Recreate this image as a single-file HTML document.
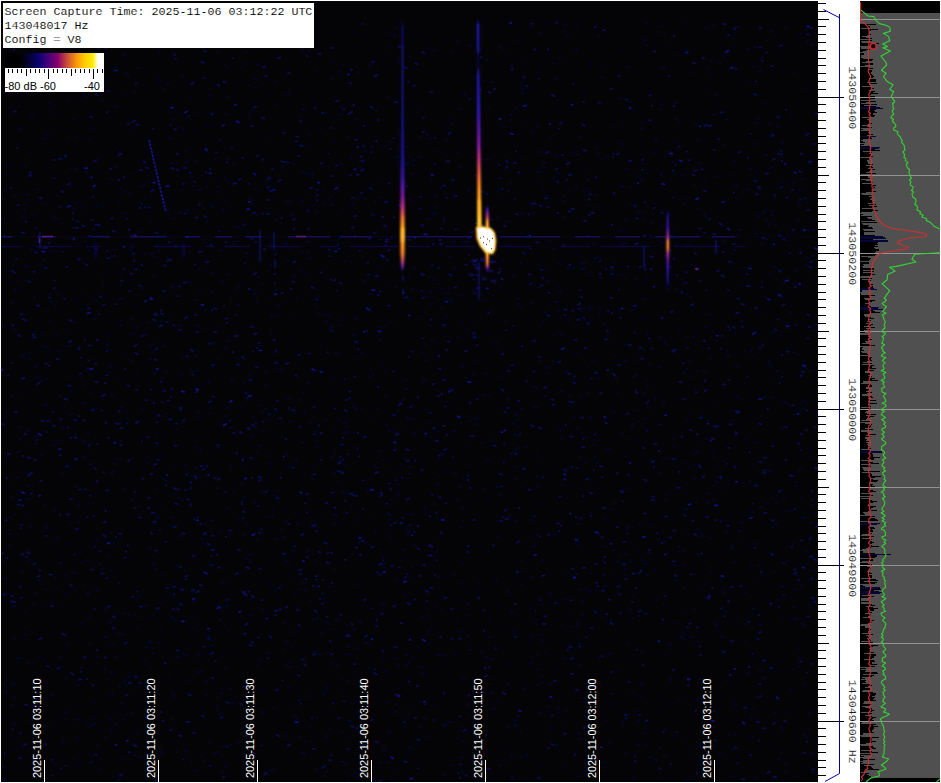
<!DOCTYPE html><html><head><meta charset="utf-8"><title>Spectrum capture</title>
<style>html,body{margin:0;padding:0;background:#fff;overflow:hidden}svg{display:block}.m{font-family:"Liberation Mono","DejaVu Sans Mono",monospace}.s{font-family:"Liberation Sans","DejaVu Sans",sans-serif}</style></head><body>
<svg width="941" height="783" viewBox="0 0 941 783">
<defs>
<linearGradient id="cb" x1="0" x2="1" y1="0" y2="0"><stop offset="0" stop-color="#000"/><stop offset=".17" stop-color="#010005"/><stop offset=".26" stop-color="#050040"/><stop offset=".34" stop-color="#0a0070"/><stop offset=".44" stop-color="#480078"/><stop offset=".53" stop-color="#85006e"/><stop offset=".61" stop-color="#c04040"/><stop offset=".72" stop-color="#fa960a"/><stop offset=".80" stop-color="#ffc800"/><stop offset=".885" stop-color="#ffeb00"/><stop offset=".94" stop-color="#fff"/><stop offset="1" stop-color="#fff"/></linearGradient>
<filter id="b05" x="-50%" y="-5%" width="200%" height="110%"><feGaussianBlur stdDeviation="1"/></filter>
<filter id="b1" x="-100%" y="-10%" width="300%" height="120%"><feGaussianBlur stdDeviation="1.1"/></filter>
<filter id="b2" x="-50%" y="-50%" width="200%" height="200%"><feGaussianBlur stdDeviation="1.8"/></filter>
<filter id="nb" x="0" y="0" width="100%" height="100%"><feGaussianBlur stdDeviation="1"/></filter>
<clipPath id="sp"><rect x="1" y="1" width="817" height="781"/></clipPath>
<clipPath id="rp"><rect x="860" y="1" width="80" height="781"/></clipPath>
</defs>
<rect width="941" height="783" fill="#fff"/>
<rect x="1" y="1" width="817" height="781" fill="#040406"/>
<g clip-path="url(#sp)">
<path d="M265.2 136.5l0.4 -0.2M438.3 299.6l0.4 -0.1M197.4 440.2l0.4 -0.2M462.4 741.1l2.4 0.0M471.9 323.1l0.8 0.0M442.2 455.3l2.4 -1.4M557.5 100.2l0.8 0.0M80.5 562.5l2.4 0.0M506.1 398.8l2.4 0.7M635.2 375.4l1.8 0.0M245.6 624.9l0.8 0.0M469.7 420.6l1.2 0.7M367.2 484.2l0.4 0.0M762.5 342.1l0.4 -0.2M456.4 620.9l1.2 0.7M286.7 399.0l1.8 0.0M686.4 739.0l0.4 0.0M597.6 257.0l2.4 1.4M671.7 238.0l1.8 1.1M284.2 736.0l2.4 0.0M403.9 187.6l1.2 0.0M603.5 324.0l1.8 0.0M136.8 326.8l1.2 0.0M669.5 677.8l1.8 0.0M558.1 310.8l0.8 0.0M68.7 136.8l0.4 0.1M679.2 160.4l1.2 0.0M119.9 427.8l2.4 -0.7M261.0 117.2l2.4 1.4M552.8 63.0l2.4 0.7M325.8 321.1l1.8 1.1M327.8 166.7l0.8 0.2M133.4 280.1l0.4 0.0M297.7 41.4l2.4 0.7M122.2 213.5l1.2 -0.4M298.2 115.2l1.8 0.5M280.6 223.0l0.8 -0.2M19.8 743.8l0.8 0.5M444.2 42.5l0.4 0.2M690.9 415.5l0.8 0.0M630.9 426.2l2.4 0.0M520.3 487.4l0.8 -0.5M196.3 326.1l0.8 0.0M423.4 291.9l0.4 0.0M645.7 380.4l0.8 0.5M494.8 283.3l1.2 0.0M66.7 99.5l1.2 0.0M394.8 769.8l0.4 0.1M742.9 283.1l0.4 -0.2M540.0 712.5l0.8 0.2M726.4 351.3l1.2 0.0M654.5 759.5l1.8 1.1M773.6 572.1l0.8 0.0M23.5 470.4l1.8 -1.1M536.2 486.2l2.4 0.7M537.3 288.0l2.4 -0.7M107.9 32.8l0.4 -0.1M612.6 127.7l0.8 -0.5M409.9 601.6l1.2 0.0M445.2 655.2l1.2 0.4M541.6 640.6l2.4 0.0M435.0 419.3l0.4 -0.2M360.1 161.0l0.4 -0.2M653.1 152.8l1.8 -0.5M592.8 444.4l1.2 0.7M424.0 443.6l0.4 -0.1M47.4 167.2l0.4 -0.2M80.8 365.2l0.4 -0.2M795.3 482.1l0.8 0.5M227.2 407.7l1.8 -0.5M769.3 552.7l1.2 -0.4M729.5 175.8l1.8 0.0M341.0 319.8l1.2 0.0M548.7 347.1l0.8 0.5M248.1 114.9l1.2 0.0M207.5 126.2l0.4 0.1M723.1 145.6l0.8 0.0M577.4 776.5l1.8 0.0M276.8 370.1l0.4 0.1M271.5 495.6l2.4 0.0M93.1 719.2l0.4 0.0M217.7 52.0l1.2 -0.7M106.7 342.5l1.2 0.4M122.9 719.7l1.2 0.0M228.7 628.9l0.4 0.0M766.7 503.5l1.2 0.0M497.3 190.8l1.2 -0.7M100.3 30.8l1.8 0.0M508.3 54.8l0.4 0.0M214.7 159.5l1.2 0.7M249.9 598.5l1.2 0.4M409.1 157.0l1.2 -0.7M15.8 212.1l0.4 0.0M599.2 440.2l0.8 -0.2M388.4 731.4l1.8 1.1M404.9 655.5l2.4 0.0M562.2 767.7l0.8 0.2M808.4 767.2l0.4 0.0M511.4 689.8l0.4 0.0M543.8 311.1l2.4 1.4M793.3 476.5l1.2 0.0M215.8 752.0l2.4 0.0M200.5 754.9l1.2 0.0M1.9 311.7l1.8 0.0M411.3 174.5l2.4 -1.4M5.0 222.5l0.4 0.0M249.3 198.7l2.4 -0.7M697.2 139.8l2.4 0.7M624.7 569.0l1.8 0.0M232.9 491.6l0.8 0.0M674.1 564.7l2.4 1.4M351.3 554.1l2.4 0.0M743.5 593.4l2.4 -1.4M664.3 34.2l0.8 0.0M86.6 656.4l0.4 0.2M434.7 207.6l1.2 0.0M373.9 75.2l2.4 0.0M539.0 72.1l1.2 -0.7M61.8 223.6l0.8 0.0M604.7 762.6l1.8 0.0M391.9 540.9l0.4 -0.1M517.4 172.5l2.4 0.0M271.7 516.5l1.2 -0.4M220.3 532.0l0.8 0.5M400.5 560.0l1.2 0.4M381.2 604.3l2.4 0.0M255.3 87.2l1.2 0.4M63.4 406.5l1.8 0.0M316.7 717.7l0.4 -0.1M74.7 589.3l1.2 0.0M109.2 644.5l0.4 0.2M299.0 399.9l1.8 0.5M21.3 24.7l1.8 0.5M258.9 659.7l1.2 -0.7M326.0 735.4l0.4 0.2M237.5 304.5l1.8 0.5M816.0 469.2l1.2 0.4M617.6 670.4l0.4 -0.2M541.2 503.9l0.8 0.0M793.4 353.1l1.2 0.0M631.9 617.9l1.8 0.0M663.6 500.8l2.4 -0.7M167.0 83.2l1.8 0.5M502.8 127.2l1.8 0.0M745.1 439.5l0.8 0.2M339.5 235.8l1.2 0.7M603.8 517.5l1.8 1.1M195.8 388.7l1.8 0.0M740.3 399.3l0.8 0.2M740.5 778.3l0.8 -0.2M75.3 203.5l1.2 -0.7M465.8 695.4l1.8 0.5M338.7 419.8l1.8 0.0M790.6 117.5l0.8 0.0M222.2 210.6l1.8 1.1M364.8 746.0l0.4 0.0M27.3 560.5l1.8 -0.5M400.7 77.5l2.4 -1.4M383.0 362.8l0.4 0.0M127.0 418.5l0.4 -0.2M589.9 513.3l1.8 0.0M451.0 52.0l0.8 -0.2M751.7 511.9l1.2 0.0M512.2 422.9l1.8 1.1M770.9 167.5l1.2 0.0M646.0 22.9l1.8 0.0M783.5 511.2l0.8 0.2M430.4 437.2l0.4 0.1M576.0 255.3l0.4 0.0M407.6 533.9l1.8 0.0M210.9 528.5l1.2 0.0M403.2 550.1l1.8 0.0M558.0 172.3l1.2 0.7M690.6 73.2l0.8 0.0M625.9 169.2l1.8 0.0M217.3 697.0l2.4 0.7M498.8 702.4l0.4 -0.1M120.4 320.6l0.8 0.0M50.1 320.5l1.2 0.7M156.6 517.2l2.4 1.4M382.6 258.7l1.8 -1.1M306.1 273.8l0.8 0.0M3.3 234.4l1.2 0.4M780.7 115.9l0.8 0.2M292.0 645.6l1.8 0.0M41.2 381.4l1.2 -0.4M751.3 168.5l1.2 0.7M663.4 603.9l0.4 0.1M29.4 69.5l1.2 0.0M610.8 704.0l1.2 0.0M782.5 490.3l1.2 0.7M585.8 262.2l1.2 0.0M4.1 595.5l0.4 0.0M675.0 103.4l1.8 -1.1M316.4 212.5l1.8 -1.1M403.7 726.4l1.2 -0.7M703.8 371.7l2.4 0.0M418.7 319.3l0.8 0.0M333.7 515.0l1.8 -0.5M86.9 76.8l0.8 0.0M344.6 772.2l0.8 0.0M109.5 371.8l0.8 0.5M440.5 609.4l0.4 -0.2M687.2 245.0l2.4 0.0M305.3 582.2l0.8 0.2M202.9 208.2l0.8 0.0M722.5 460.9l1.2 0.0M324.2 775.3l0.8 0.5M660.7 517.9l0.4 0.0M4.7 692.1l1.8 0.0M33.9 244.9l0.4 0.0M155.7 760.5l0.4 0.0M419.3 156.9l2.4 0.0M633.4 526.5l0.4 0.0M521.2 560.7l1.2 0.0M31.6 280.1l0.4 0.0M816.9 51.0l0.8 -0.5M10.3 270.4l1.2 0.0M405.4 389.0l1.8 0.0M650.4 526.0l0.8 0.5M436.7 517.7l1.8 1.1M222.3 772.1l1.8 0.0M255.9 452.0l1.2 0.4M340.8 678.0l1.2 0.7M161.9 574.6l0.8 0.0M74.8 460.5l1.2 0.4M117.3 634.1l2.4 -0.7M757.6 581.6l0.8 0.0M55.8 313.3l0.8 0.0M104.3 737.8l1.8 0.0M44.6 725.0l2.4 1.4M673.8 143.6l0.8 -0.2M331.1 664.4l0.8 -0.2M179.0 325.4l2.4 0.0M592.5 703.0l2.4 -1.4M619.1 50.9l0.4 0.1M490.2 439.5l1.2 0.7M343.8 464.2l1.8 0.5M538.6 361.1l1.8 0.0M20.1 491.7l1.8 0.5M193.0 601.5l1.8 -1.1M147.5 381.2l0.4 0.0M105.8 348.8l0.4 -0.2M361.6 409.2l0.4 0.0M520.3 84.4l2.4 0.0M45.3 404.5l1.8 1.1M776.9 125.4l2.4 1.4M723.7 240.5l0.8 0.5M644.3 728.3l1.2 -0.4M618.0 142.5l1.2 -0.7M373.4 214.9l1.8 0.0M484.0 489.4l0.8 0.0M304.8 173.0l1.8 0.0M520.4 233.2l1.2 0.4M138.7 617.7l0.4 -0.2M434.1 505.0l1.2 -0.7M370.7 417.8l0.4 0.0M811.3 500.0l1.8 1.1M651.9 222.9l1.2 -0.4M120.3 273.1l0.4 0.1M188.7 489.1l0.4 0.0M670.0 214.5l2.4 1.4M731.9 578.4l0.4 0.0M122.9 489.6l1.8 0.5M419.3 701.7l0.8 -0.2M184.0 464.9l2.4 0.0M167.6 495.6l1.8 0.0M111.0 732.9l0.8 0.2M79.2 506.4l1.2 0.4M663.2 756.1l2.4 0.0M486.3 461.1l2.4 -0.7M599.6 210.6l0.4 0.0M130.9 714.0l2.4 -0.7M536.9 171.7l1.8 0.0M423.9 509.8l1.8 -1.1M501.4 408.0l0.4 0.0M511.8 776.5l1.8 1.1M440.3 306.7l1.8 1.1M745.4 83.1l0.8 0.0M814.2 220.4l0.4 0.0M274.8 591.0l1.2 0.7M43.9 504.6l1.8 1.1M644.4 419.1l1.2 0.0M524.9 754.5l2.4 0.0M139.5 708.7l0.8 0.0M609.9 270.1l1.8 0.0M491.6 310.0l2.4 0.7M386.3 424.7l0.4 -0.2M22.6 747.4l1.2 -0.7M174.0 494.6l0.4 -0.1M88.0 727.1l0.8 0.5M24.4 53.6l0.4 0.2M56.3 57.4l1.2 0.0M668.1 644.0l0.4 -0.2M617.7 561.8l1.8 0.0M202.2 176.2l0.4 0.0M775.6 713.5l0.4 -0.2M614.2 501.9l1.8 0.0M109.2 623.1l1.2 0.0M275.6 220.2l1.2 0.0M760.0 58.7l1.2 -0.7M787.6 404.3l1.2 -0.4M609.5 620.9l2.4 -1.4M81.2 377.9l0.4 -0.1M462.9 564.2l0.4 -0.1M670.0 151.3l0.4 -0.1M165.9 600.5l0.4 0.0M284.8 94.6l0.8 0.2M484.5 748.5l2.4 0.0M232.5 185.0l0.8 0.2M136.3 734.5l1.8 -1.1M809.8 448.0l0.4 0.2M267.5 94.2l0.4 0.1M215.8 706.0l1.8 1.1M191.6 371.8l2.4 -0.7M616.7 593.5l0.4 0.0M475.6 418.0l1.8 1.1M452.8 267.4l1.8 0.5M563.3 217.2l0.8 0.0M273.6 509.8l0.8 -0.2M157.3 250.8l2.4 0.0M591.2 761.8l2.4 -0.7M285.5 201.3l0.8 0.0M796.7 575.1l0.4 0.0M803.8 625.3l1.8 0.0M161.1 506.2l0.4 0.0M169.5 316.8l0.4 0.0M326.6 622.4l2.4 1.4M697.0 554.2l2.4 1.4M529.1 664.1l2.4 -1.4M187.5 159.8l0.4 0.1M353.9 219.2l0.4 0.1M198.8 325.7l0.8 0.0M694.1 388.4l0.4 -0.1M701.6 415.4l0.8 0.5M268.7 30.1l0.4 0.0M206.0 187.4l0.8 -0.2M285.1 665.0l0.8 0.5M389.2 34.2l1.2 -0.4M280.8 585.3l1.8 0.0M809.1 161.5l2.4 -1.4M762.1 575.4l2.4 0.0M521.3 213.6l1.8 0.5M51.2 79.1l1.2 -0.4M217.4 192.3l1.8 -0.5M793.7 776.6l1.8 0.0M135.3 727.4l0.8 0.2M525.0 569.0l0.8 0.0M544.5 652.5l1.8 0.5M813.8 598.8l0.8 -0.5M681.3 291.3l0.8 0.0M575.6 543.8l1.8 1.1M152.7 24.0l1.2 0.0M200.9 251.1l1.8 0.5M350.7 505.7l1.2 0.0M758.8 670.5l2.4 0.0M640.8 128.6l2.4 0.0M537.4 181.2l0.4 0.2M240.1 483.6l2.4 0.0M698.0 162.9l1.8 0.0M641.5 180.3l1.8 -1.1M437.2 484.6l2.4 -1.4M74.8 706.3l1.2 0.0M404.5 183.7l0.4 0.2M685.9 531.5l0.4 -0.1M97.6 340.0l0.8 0.2M403.4 66.4l0.8 0.5M402.0 400.1l2.4 -0.7M705.1 27.0l1.8 1.1M460.1 527.0l1.8 0.0M348.5 781.0l0.8 0.5M295.1 512.7l0.4 -0.1M38.4 581.0l1.2 -0.7M802.1 409.6l1.8 -1.1M733.4 47.7l0.8 0.0M78.1 522.2l1.2 0.4M636.3 442.6l0.8 0.0M356.1 342.6l2.4 0.0M675.6 244.3l1.8 0.5M273.3 769.1l1.2 0.0M535.1 623.1l1.2 0.7M245.2 467.1l0.4 -0.2M814.1 324.7l2.4 0.7M6.1 166.2l1.8 -0.5M626.0 67.7l2.4 -0.7M307.9 133.6l2.4 1.4M68.7 52.0l0.8 0.0M542.5 681.7l0.4 0.2M12.0 683.8l1.2 -0.4M580.5 676.6l0.4 0.0M17.6 451.8l2.4 0.0M407.2 418.3l0.4 -0.2M662.2 458.7l1.8 0.5M55.9 538.1l2.4 -0.7M811.4 522.5l0.8 0.2M629.2 438.5l0.4 0.2M386.3 701.9l1.8 0.0M8.6 530.0l0.4 0.0M588.0 205.9l0.8 0.0M299.6 589.2l0.8 0.5M620.6 244.5l2.4 1.4M407.4 530.2l1.2 0.0M532.0 642.4l1.2 0.0M596.2 148.0l1.8 -0.5M49.8 301.0l2.4 1.4M359.0 535.8l0.8 -0.5M96.2 746.0l1.8 0.5M315.8 618.8l1.2 -0.7M616.9 275.4l1.2 0.0M508.4 516.1l2.4 0.0M710.6 572.8l0.4 -0.2M124.3 654.0l0.8 0.2M317.1 307.5l0.8 -0.5M369.2 544.6l1.2 0.0M219.7 141.4l0.4 0.0M680.9 638.1l2.4 0.0M224.5 668.0l1.8 0.0M437.2 431.8l1.8 -1.1M312.5 619.9l0.8 0.0M496.2 536.3l1.8 1.1M169.6 215.3l0.4 -0.2M315.1 432.3l2.4 -1.4M426.2 219.0l2.4 0.0M389.9 469.3l0.8 0.0M157.9 159.1l1.2 0.0M472.5 294.4l2.4 -1.4M122.6 55.8l1.2 -0.7M87.6 502.3l0.4 0.0M711.5 451.2l2.4 -0.7M175.3 724.5l0.4 0.1M627.1 643.5l1.2 -0.7M31.9 174.6l0.8 0.2M69.3 60.7l1.8 0.5M773.9 712.6l2.4 1.4M325.3 113.0l1.2 0.0M461.6 508.2l2.4 0.7M150.1 666.9l0.8 0.5M288.2 707.2l0.4 0.0M642.7 560.6l1.8 0.0M83.5 263.1l0.4 0.0M553.3 248.8l2.4 0.7M210.7 116.2l0.8 0.2M195.6 130.7l0.4 0.1M586.3 170.1l0.4 0.0M758.0 189.4l2.4 -1.4M305.4 590.6l1.8 0.0M756.6 314.3l0.4 0.2M62.3 760.0l0.8 0.2M95.3 299.8l1.2 0.0M601.6 158.8l1.8 -0.5M726.7 355.2l0.8 0.0M342.3 209.3l0.4 0.0M466.9 247.1l0.8 0.0M401.7 263.4l1.8 0.0M126.1 411.7l0.8 -0.2M390.6 239.3l1.2 -0.7M165.5 298.5l1.2 0.0M732.3 65.6l1.2 0.0M799.6 34.2l1.2 -0.4M115.4 23.5l2.4 0.0M152.6 352.4l1.8 0.0M226.9 159.1l0.8 -0.2M629.7 562.1l0.8 -0.2M65.7 88.4l1.8 -1.1M224.5 178.4l2.4 1.4M578.5 638.0l0.8 0.0M54.6 578.1l1.8 -1.1M589.9 64.0l1.2 0.0M688.0 678.2l0.4 0.1M743.7 383.8l1.2 0.0M152.8 653.2l0.8 0.5M303.9 473.5l0.4 0.0M425.2 360.3l2.4 0.0M99.5 564.4l1.2 -0.7M581.3 311.5l0.4 0.0M713.2 746.1l2.4 0.0M433.9 429.8l0.4 0.0M790.4 191.8l0.8 0.0M84.8 212.1l0.4 0.0M79.7 552.5l0.8 0.0M15.4 476.9l2.4 0.7M427.7 555.3l0.4 0.0M710.5 566.3l0.4 0.0M101.4 396.6l2.4 -1.4M112.8 471.2l0.8 0.0M546.7 372.7l1.8 0.0M774.7 36.0l1.8 -0.5M686.2 420.9l1.8 0.0M635.0 279.0l0.8 -0.5M274.4 352.6l2.4 -1.4M805.4 265.4l1.8 -1.1M458.8 268.6l0.8 0.5M763.4 211.2l1.8 1.1M517.3 298.6l2.4 0.0M57.5 350.7l2.4 1.4M18.0 127.8l1.8 1.1M39.2 766.0l0.4 0.0M707.3 493.3l2.4 0.0M513.7 634.0l0.4 0.0M137.3 67.8l2.4 0.0M69.9 470.0l0.8 0.2M332.7 240.8l0.8 0.5M72.7 436.7l1.8 -0.5M568.0 190.2l1.8 0.0M448.6 300.4l2.4 0.0M501.0 377.9l1.2 0.0M198.7 190.2l2.4 -0.7M313.7 466.5l0.4 0.0M133.4 744.6l1.2 0.4M221.3 688.7l0.4 -0.2M18.8 440.3l2.4 -1.4M285.0 521.2l2.4 0.7M681.8 290.8l0.4 -0.1M184.7 750.1l0.8 0.2M276.0 289.5l0.8 -0.2M499.4 232.1l2.4 0.0M603.8 586.1l1.8 0.0M641.5 559.8l0.8 0.2M711.6 25.3l2.4 0.0M407.3 752.7l1.8 -1.1M640.5 684.4l1.8 -1.1M370.1 369.5l1.2 0.0M289.0 421.3l2.4 0.7M529.9 27.1l1.8 0.5M363.3 161.8l1.2 -0.7M119.3 458.8l2.4 0.0M72.8 720.4l2.4 -1.4M199.0 269.3l1.8 0.0M21.9 216.7l1.8 0.0M752.0 609.1l2.4 -0.7M815.6 414.7l2.4 1.4M560.1 317.6l1.2 0.0M486.3 288.5l0.4 0.2M56.7 196.0l1.8 0.0M409.7 514.2l2.4 0.0M718.9 754.0l1.8 -1.1M510.7 778.1l2.4 1.4M666.8 151.6l1.2 0.0M799.4 649.0l0.4 0.2M730.9 545.6l2.4 0.7M516.0 419.8l2.4 0.0M413.0 164.8l0.8 0.0M515.2 479.8l1.2 -0.4M811.9 505.1l0.4 0.2M336.7 619.8l1.2 0.7M688.2 466.9l0.4 0.0M144.0 605.6l2.4 0.0M711.8 701.7l0.8 -0.2M163.0 478.7l0.8 0.0M424.0 408.7l0.4 0.0M63.1 741.4l1.8 -0.5M352.4 629.4l2.4 0.0M118.4 202.8l1.2 0.0M27.8 499.2l2.4 0.0M285.7 363.4l1.8 0.0M45.6 697.9l0.4 0.1M45.5 202.9l0.8 0.0M131.1 467.5l0.8 0.0M6.0 680.0l1.8 -0.5M206.6 695.1l0.4 0.0M553.7 534.3l2.4 0.0M338.4 324.5l1.8 0.0M647.9 206.7l0.8 0.0M293.5 163.6l1.2 0.4M459.2 109.2l1.8 0.0M674.9 288.6l0.8 0.2M157.0 237.2l0.8 0.2M29.5 526.2l1.2 -0.7M128.2 557.8l0.4 0.0M221.0 655.8l1.8 0.5M683.4 632.9l1.2 0.0M590.5 308.1l2.4 0.0M243.6 383.2l0.8 0.0M701.4 534.6l1.2 -0.4M735.1 468.0l1.2 -0.4M201.9 483.6l0.8 0.0M712.9 115.2l2.4 -1.4M221.7 607.8l1.8 0.0M537.5 452.9l1.2 0.0M695.4 265.7l0.4 0.0M459.6 296.4l2.4 -1.4M185.8 117.7l1.2 0.0M330.2 711.9l0.8 0.0M144.9 300.2l1.2 0.4M21.6 556.2l1.8 0.0M817.0 326.0l0.4 0.0M238.8 227.6l2.4 1.4M179.9 536.2l1.8 0.0M497.6 348.9l1.2 0.0M521.9 158.4l0.8 -0.2M407.3 417.3l1.8 1.1M559.4 286.9l0.4 0.0M681.8 611.3l1.2 0.0M715.1 466.1l0.4 0.0M635.1 284.4l0.4 0.1M567.9 320.8l2.4 -1.4M181.2 422.2l1.2 0.4M362.1 280.3l2.4 1.4M562.7 658.7l2.4 0.0M553.1 178.3l2.4 -1.4M758.4 118.9l0.4 0.2M674.3 446.4l0.8 -0.2M134.6 614.7l0.8 -0.2M213.4 753.4l1.2 0.4M76.5 505.1l0.8 0.0M561.0 391.2l1.8 0.0M576.8 26.5l0.8 0.5M287.8 249.2l0.8 -0.2M460.6 275.2l0.4 -0.1M347.5 736.4l0.8 -0.2M800.1 659.2l0.8 0.0M564.1 31.4l0.4 0.0M732.0 252.7l0.4 0.2M253.1 752.8l1.8 0.5M465.5 241.7l2.4 0.0M38.2 377.6l1.8 0.0M610.8 273.8l2.4 0.0M89.8 393.1l1.8 0.5M155.9 434.2l0.4 0.0M751.4 511.2l2.4 1.4M533.5 212.8l0.8 0.0M114.1 43.0l0.8 0.0M301.2 752.2l0.8 0.0M641.2 652.3l1.2 0.4M151.6 648.4l1.2 0.0M450.7 302.3l1.2 0.0M48.1 103.4l1.8 0.0M772.1 397.2l1.8 1.1M129.5 249.4l2.4 1.4M66.5 544.2l0.8 0.0M362.6 758.1l0.4 -0.2M359.6 166.8l1.2 0.0M27.1 485.6l2.4 0.7M581.0 698.0l0.4 0.2M781.1 155.8l0.8 0.2M242.3 358.4l2.4 1.4M285.1 170.3l0.4 -0.1M265.1 371.5l2.4 1.4M707.2 761.5l2.4 0.0M662.9 67.5l2.4 1.4M243.4 455.5l1.2 0.4M536.7 125.9l2.4 1.4M23.7 165.3l1.8 1.1M70.5 523.3l1.2 -0.4M474.9 338.0l2.4 0.0M461.9 322.8l0.4 0.0M148.3 697.5l0.4 0.0M704.5 214.4l0.4 0.0M434.1 212.9l1.8 0.0M453.1 194.0l2.4 1.4M93.2 411.5l2.4 -0.7M66.5 331.7l0.4 -0.2M359.7 677.4l0.4 0.2M809.4 569.7l0.4 0.1M678.5 319.5l0.8 0.0M460.4 610.2l0.8 0.0M304.8 33.5l0.8 0.2M245.7 558.9l1.8 0.0M507.9 683.9l1.2 0.0M300.5 660.7l0.4 -0.2M209.6 203.6l2.4 1.4M429.2 292.9l1.8 0.0M667.3 290.3l1.2 -0.4M268.1 479.7l0.4 0.2M198.8 291.0l1.8 0.0M684.9 463.3l0.4 -0.2M18.1 105.8l0.8 0.0M453.3 242.1l1.8 -1.1M118.7 686.4l1.2 0.4M12.3 281.9l0.8 0.2M410.4 684.7l0.4 0.0M149.7 643.1l1.8 -1.1M389.2 142.1l1.8 0.0M713.4 485.6l0.4 0.0M269.7 186.2l0.8 -0.2M510.7 182.4l1.2 0.7M382.7 460.0l1.8 0.0M257.5 276.6l1.8 0.0M185.9 210.8l2.4 0.0M515.8 573.8l0.8 0.0M314.7 70.2l1.2 -0.4M469.0 465.6l0.8 0.5M28.8 447.5l0.4 -0.2M163.6 345.5l2.4 1.4M81.8 623.1l0.8 -0.5M786.8 281.2l1.2 -0.4M697.2 208.1l2.4 1.4M264.7 772.2l1.2 0.0M661.3 778.4l0.8 0.0M726.2 531.6l1.8 0.5M324.2 608.2l0.8 -0.2M55.1 250.8l1.2 0.0M594.0 440.4l1.2 0.0M752.7 464.8l0.4 -0.1M146.9 462.6l1.8 0.0M793.0 545.9l0.4 -0.2M396.4 704.4l1.2 -0.4M575.8 187.7l1.8 0.5M164.5 479.6l2.4 1.4M82.2 205.5l0.4 0.0M491.4 82.2l2.4 0.0M23.5 266.1l0.4 0.2M397.8 484.8l1.2 0.0M47.9 336.4l0.4 0.0M512.1 275.9l1.8 -0.5M327.0 735.6l0.4 0.0M461.3 771.5l2.4 1.4M591.9 271.8l0.4 0.0M128.5 130.3l0.4 0.0M665.2 343.2l2.4 1.4M481.2 443.2l2.4 -0.7M271.0 584.5l1.2 -0.7M581.5 601.4l1.2 0.7M631.4 763.8l1.2 0.0M428.0 736.2l0.4 -0.1M389.2 519.4l1.2 0.0M808.5 195.2l0.4 0.0M510.7 114.8l0.8 -0.2M635.3 218.7l2.4 0.0M602.9 707.3l0.8 -0.2M24.7 612.6l0.8 0.2M802.6 400.7l1.2 -0.7M318.4 183.0l0.4 0.0M539.6 33.7l1.8 1.1M706.1 67.5l1.8 0.5M772.1 498.0l0.8 0.0M206.6 221.1l1.8 0.0M189.8 176.2l1.8 1.1M228.4 689.5l2.4 -1.4M128.9 677.1l1.2 -0.7M112.4 249.8l0.4 0.0M4.2 683.9l1.2 0.7M499.0 748.2l0.4 -0.2M172.2 692.6l1.8 0.0M355.8 128.1l0.4 -0.2M92.0 761.5l1.2 0.0M411.1 288.9l0.8 0.2M750.5 565.7l1.2 0.0M478.6 174.8l0.4 0.0M111.0 473.7l2.4 0.7M570.9 574.9l0.4 0.0M53.7 105.8l0.8 -0.2M350.6 157.8l2.4 0.0M517.7 436.1l0.4 -0.1M289.5 398.7l0.4 0.0M792.9 669.6l0.8 0.5M60.1 556.0l0.4 0.0M220.5 755.4l0.4 0.1M645.2 744.5l1.2 0.7M34.8 366.4l1.2 -0.4M270.9 333.5l1.2 0.4M345.3 431.9l1.8 0.0M316.9 314.5l1.8 -1.1M117.7 779.8l2.4 -0.7M756.8 215.3l2.4 1.4M308.6 204.7l0.8 0.5M95.8 661.9l0.4 0.1M567.5 268.2l1.8 -0.5M546.1 367.7l2.4 0.0M387.4 513.3l1.8 -0.5M280.4 436.6l1.8 0.0M674.2 622.6l1.2 0.7M53.3 762.7l1.2 0.0M514.2 434.2l0.8 -0.2M625.6 221.1l1.8 -1.1M589.8 418.2l1.8 -0.5M181.5 129.8l2.4 0.0M428.5 422.4l1.2 0.0M550.7 137.7l0.8 0.5M774.0 671.5l0.4 0.0M312.1 653.6l0.4 0.1M126.5 212.9l0.4 0.0M292.0 631.6l1.8 1.1M72.8 322.2l1.8 1.1M92.2 503.7l0.8 -0.5M399.8 523.1l2.4 0.0M428.1 630.4l2.4 0.0M1.7 219.1l2.4 0.0M251.1 435.4l1.2 0.0M198.3 655.1l1.8 -1.1M73.5 119.4l1.2 -0.4M638.3 720.7l1.8 0.0M35.1 593.6l1.8 0.5M529.9 637.4l1.8 -1.1M473.2 723.9l2.4 0.0M52.7 176.2l0.4 0.0M617.9 310.0l2.4 0.7M406.2 706.1l0.4 0.0M484.7 373.1l1.8 1.1M686.1 336.9l1.8 0.0M727.5 355.8l1.8 0.0M418.6 647.9l0.8 0.2M443.0 724.7l1.2 -0.7M317.2 371.1l0.4 0.0M692.9 455.4l0.4 0.0M406.5 665.7l1.8 0.0M673.4 173.7l1.2 0.4M705.2 439.7l1.8 -1.1M477.5 779.6l0.8 0.0M273.8 415.3l0.4 0.0M807.8 230.5l1.2 0.0M256.4 215.6l1.2 -0.4M323.1 694.3l1.2 0.0M203.8 310.6l1.8 -1.1M441.3 253.5l0.8 0.0M170.3 517.1l1.8 1.1M400.0 465.1l1.2 -0.7M279.9 368.4l2.4 1.4M42.7 260.5l2.4 0.0M334.7 450.8l1.2 0.0M224.2 626.2l0.8 -0.5M795.1 485.5l1.8 1.1M364.0 688.4l1.8 -1.1M522.6 59.2l0.4 -0.2M487.6 158.7l2.4 1.4M654.4 400.1l1.2 -0.7M173.2 658.3l0.8 -0.2M83.3 94.3l0.4 0.1M183.6 654.7l1.8 1.1M347.5 680.9l0.8 0.0M131.7 360.8l0.8 -0.5M476.0 263.9l2.4 1.4M126.7 714.1l0.8 0.0M772.6 527.0l0.8 0.2M795.9 270.7l0.8 0.5M238.5 519.0l0.4 0.0M380.0 574.7l1.8 0.0M555.0 108.8l0.4 0.2M754.4 778.1l2.4 0.0M238.3 286.1l1.8 0.0M164.6 234.5l1.2 -0.4M477.5 596.0l0.8 0.0M384.9 604.7l0.8 -0.2M755.5 46.6l0.4 0.0M141.3 287.8l1.8 0.0M269.9 298.3l0.4 -0.2M679.9 636.0l1.8 0.0M473.7 335.5l0.8 0.2M472.6 289.8l1.2 0.7M769.3 273.7l1.8 0.0M122.6 93.4l0.4 0.0M405.8 428.8l0.4 0.0M382.7 146.5l2.4 0.0M300.4 172.1l1.8 -0.5M712.2 402.9l0.4 0.0M87.3 62.7l2.4 0.0M563.2 196.0l0.8 0.0M687.3 779.6l2.4 -0.7M90.4 454.5l0.4 0.0M542.7 187.2l0.8 -0.2M633.4 411.3l0.4 -0.2M201.5 476.8l0.4 0.0M176.4 608.6l0.8 -0.5M248.7 85.8l2.4 0.0M9.8 735.7l1.8 0.0M72.8 207.8l2.4 1.4M137.4 627.4l0.8 0.0M755.7 542.7l0.4 0.0M646.9 386.1l1.8 -0.5M636.9 711.2l0.4 0.0M336.7 516.1l1.2 -0.4M133.4 755.0l1.8 0.0M212.6 548.5l1.2 0.0M608.9 653.8l2.4 0.0M356.2 648.3l2.4 0.0M611.4 472.5l0.4 0.0M791.3 619.7l1.2 -0.7M685.1 198.2l0.8 -0.2M374.7 201.6l1.8 -0.5M742.0 542.2l0.4 0.1M542.5 321.7l1.2 -0.7M310.3 741.6l1.2 0.7M486.4 656.7l0.4 0.0M663.9 339.8l2.4 0.0M374.3 276.6l0.8 0.0M289.6 663.0l1.2 0.0M72.8 227.7l1.8 0.5M540.4 634.6l0.4 0.1M672.5 161.7l1.2 0.0M782.5 297.0l0.8 0.0M727.1 485.2l1.8 0.0M408.7 747.4l2.4 0.0M700.1 756.9l0.4 0.0M462.3 520.8l1.2 0.7M83.3 441.5l2.4 1.4M308.4 726.8l1.8 0.0M420.6 273.3l1.2 0.0M296.2 523.8l1.8 -0.5M660.9 67.3l1.8 0.0M565.3 35.7l0.4 -0.1M308.8 258.2l2.4 0.0M595.8 591.1l0.4 0.0M394.7 27.4l1.2 0.0M154.1 718.8l1.8 0.0M610.9 508.9l1.2 0.7M623.2 243.0l2.4 0.0M344.3 764.4l1.8 0.5M786.8 560.7l1.2 0.0M133.1 458.5l0.4 -0.2M435.4 700.3l0.4 0.0M252.3 417.1l1.2 0.0M480.2 759.4l1.2 0.7M153.7 256.8l1.8 0.0M507.5 726.4l1.2 0.0M322.5 314.6l1.8 0.0M92.8 724.7l2.4 -1.4M334.1 143.3l0.4 0.0M228.6 428.6l2.4 -1.4M548.2 593.2l1.2 0.4M297.0 718.4l1.2 -0.7M515.2 219.1l0.4 0.0M435.3 551.9l1.2 0.0M492.4 295.1l0.8 0.0M715.5 95.2l1.8 -1.1M527.1 756.2l0.4 -0.2M330.5 660.8l1.2 0.4M321.3 633.6l0.8 0.5M712.2 425.6l2.4 0.7M547.2 706.2l1.2 0.7M54.8 335.6l2.4 0.0M696.2 528.9l2.4 0.7M330.4 457.5l1.2 -0.7M690.4 620.5l0.8 0.0M549.0 594.4l2.4 0.0M734.0 704.2l1.8 0.0M108.1 556.4l1.8 -0.5M732.4 562.4l2.4 -0.7M673.6 229.2l0.8 0.0M253.3 295.0l2.4 -1.4M65.2 39.7l0.4 -0.2M779.4 187.8l1.8 1.1M624.4 361.2l2.4 0.0M798.5 470.0l2.4 -1.4M27.3 430.2l1.8 0.0M395.7 245.3l1.2 0.0M434.0 196.8l2.4 -1.4M670.5 235.8l2.4 -0.7M582.9 191.2l0.8 0.0M662.6 225.5l1.2 0.0M779.9 229.8l0.4 -0.1M92.7 318.2l2.4 0.7M185.6 680.5l1.2 -0.4M269.8 770.6l1.8 -0.5M110.1 366.6l2.4 0.7M156.6 489.3l0.4 0.1M136.1 598.5l0.4 0.2M733.3 34.5l0.8 -0.5M217.7 447.2l1.2 0.7M642.5 39.4l2.4 1.4M13.9 290.6l1.8 0.0M682.7 509.0l2.4 0.0M456.1 498.3l2.4 1.4M258.6 291.1l0.4 0.0M604.3 546.7l1.8 0.0M657.5 367.4l0.4 0.0M88.1 138.8l1.8 0.5M809.3 714.0l1.8 -1.1M797.6 667.1l1.2 -0.4M318.3 290.5l0.4 0.0M580.5 739.5l1.8 -1.1M598.6 313.6l1.8 0.0M113.9 106.3l2.4 0.7M23.5 639.2l0.4 0.1M637.8 176.8l2.4 -0.7M746.7 673.6l2.4 0.7M396.4 507.4l0.8 0.0M199.6 709.5l0.4 0.0M373.4 466.4l1.8 -1.1M56.1 571.9l0.4 -0.2M385.1 325.8l0.8 0.5M531.0 547.3l1.8 -0.5M116.7 712.0l0.4 0.2M195.7 771.0l1.8 -0.5M644.1 647.3l0.4 0.0M77.5 762.9l0.4 0.1M40.7 204.5l0.8 -0.5M549.3 728.1l1.8 0.0M34.7 377.1l1.8 -1.1M781.5 598.5l0.4 0.0M117.9 423.6l2.4 -0.7M264.8 408.9l1.8 0.0M59.9 44.6l0.4 -0.1M459.3 487.1l2.4 0.0M577.0 524.0l2.4 0.0M374.0 531.1l2.4 1.4M171.2 164.2l2.4 -1.4M684.2 180.4l0.8 0.5M351.1 105.8l2.4 -0.7M288.7 93.4l0.4 0.0M301.0 251.8l1.2 0.0M404.2 459.4l1.2 -0.7M558.2 604.4l0.8 -0.2M315.5 768.7l2.4 1.4M173.0 597.8l0.4 0.0M684.1 566.0l0.4 0.2M556.6 667.1l0.4 0.0M505.9 244.7l1.2 0.7M110.5 619.9l1.2 0.0M801.4 518.4l1.8 -1.1M509.4 593.8l1.2 0.0M656.8 32.0l1.2 0.0M444.9 292.8l1.2 0.0M629.7 610.2l1.2 -0.7M695.7 344.6l1.2 0.0M53.4 114.5l0.8 -0.2M44.6 525.6l0.8 0.2M761.0 415.8l0.4 0.2M174.3 240.1l0.4 0.2M213.3 565.3l0.8 -0.2M358.4 543.3l1.2 -0.7M320.0 281.4l0.4 0.0M565.0 180.8l1.2 -0.4M787.9 510.3l2.4 0.0M536.4 475.8l1.8 0.0M64.6 575.8l2.4 0.0M60.9 78.5l1.8 1.1M792.1 543.8l1.2 -0.7M368.2 705.0l1.8 0.5M569.6 153.5l0.4 -0.2M761.8 281.8l0.8 0.0M317.6 617.4l0.4 -0.2M171.4 288.2l1.2 0.0M510.9 663.9l0.4 0.0M639.5 524.2l1.2 0.7M215.6 56.7l0.4 0.1M208.2 89.5l0.4 0.0M242.4 225.7l0.8 0.0M297.7 570.5l0.8 0.0M644.0 213.0l1.2 0.0M650.5 238.5l1.8 -1.1M25.6 514.3l0.8 -0.5M314.5 299.3l1.8 0.0M710.6 60.4l1.2 0.0M231.0 380.7l1.8 0.0M90.7 443.5l1.8 0.0M331.2 390.1l0.8 0.0M218.1 358.9l0.8 0.0M608.3 449.2l1.8 0.0M49.9 349.8l0.4 0.0M426.6 409.5l1.2 0.0M83.8 384.3l1.8 0.5M641.6 122.0l1.2 0.0M168.6 525.2l1.2 0.0M98.7 769.0l0.8 -0.2M9.9 517.6l2.4 0.0M526.1 543.4l0.4 -0.1M530.1 608.4l2.4 0.0M532.3 132.1l1.2 0.7M35.1 672.9l0.8 0.5M186.1 475.8l0.4 0.1M115.6 167.4l1.2 -0.4M135.8 295.2l1.8 0.0M54.7 305.6l1.8 1.1M810.4 493.5l0.8 0.0M681.5 175.2l1.8 0.0M185.6 751.6l1.8 0.0M281.0 529.5l0.4 -0.1M306.1 145.0l0.4 0.0M496.8 217.7l1.8 0.5M459.5 562.2l0.8 0.0M197.2 113.5l0.8 0.0M66.5 643.9l1.2 -0.4M541.0 674.9l1.2 0.7M333.7 61.2l0.4 0.0M738.6 75.5l0.8 -0.5M246.0 525.3l2.4 -0.7M96.1 207.0l2.4 -0.7M555.7 302.5l2.4 -0.7M158.2 79.7l2.4 0.7M149.1 547.3l1.2 0.7M194.0 300.0l2.4 0.0M553.8 77.7l2.4 1.4M385.9 532.1l0.4 0.1M388.9 536.6l0.8 0.2M783.1 618.3l0.8 0.2M73.6 759.0l1.8 0.0M735.5 198.5l1.2 0.4M542.3 604.1l0.8 0.0M523.1 689.1l2.4 0.0M722.8 489.5l0.4 0.1M476.2 737.3l1.2 0.0M575.8 353.8l0.8 -0.5M394.1 35.4l0.8 0.2M302.7 752.5l2.4 1.4M167.5 210.7l2.4 -1.4M161.2 603.5l1.2 0.7M209.7 645.6l2.4 0.0M162.8 33.4l2.4 0.0M24.7 628.0l0.4 0.2M204.1 153.8l0.8 0.0M735.9 618.0l0.8 0.0M162.8 378.6l0.4 -0.1M285.7 243.5l1.8 -1.1M133.6 91.4l1.2 0.0M647.1 575.1l1.2 -0.4M402.3 165.0l2.4 -1.4M42.8 138.8l1.8 0.0M586.1 196.1l0.4 -0.2M648.8 365.2l1.8 -1.1M665.8 494.4l1.8 -0.5M356.3 32.0l0.8 0.0M686.4 369.1l1.2 -0.4M346.6 426.7l0.4 0.0M187.7 39.8l0.8 0.5M586.8 366.8l0.8 0.0M168.0 258.2l1.2 0.0M129.4 193.8l1.2 -0.7M575.5 539.0l1.2 0.4M258.4 569.4l0.4 -0.2M420.2 136.8l0.8 0.2M25.7 265.3l2.4 1.4M426.4 297.4l1.8 -0.5M254.6 78.9l2.4 0.7M357.8 72.6l2.4 0.0M367.9 668.9l1.8 -1.1M576.4 428.1l1.2 -0.4M42.7 605.8l0.4 0.2M753.7 123.0l2.4 0.0M52.6 541.2l0.4 0.0M537.6 669.0l1.2 0.4M425.2 131.9l0.4 0.0M236.0 604.9l0.8 -0.2M435.0 654.3l0.8 0.2M625.2 345.2l1.2 0.0M101.6 206.3l2.4 0.0M75.8 737.7l1.8 0.5M185.8 162.4l1.2 -0.7M380.6 565.5l0.8 0.5M159.0 749.3l2.4 0.0M655.6 43.0l0.8 -0.5M503.1 259.9l1.2 0.7M154.0 339.6l0.4 -0.2M190.1 282.9l1.2 -0.4M33.1 50.5l0.8 -0.5M260.3 690.8l1.2 0.0M505.1 321.4l1.2 0.0M770.3 31.6l2.4 -1.4M745.0 642.1l0.4 0.2M412.7 269.4l1.8 -1.1M251.6 204.0l1.2 0.7M670.6 284.1l0.8 -0.5M261.9 609.8l2.4 1.4M744.4 624.3l1.8 0.0M384.7 372.5l0.8 0.5M278.8 211.3l0.4 0.0M267.9 41.7l0.8 0.0M58.7 73.4l0.8 -0.5M378.0 327.0l1.8 0.5M253.9 501.9l2.4 0.7M260.9 283.8l1.2 0.7M714.1 457.1l0.4 -0.1M480.4 651.4l1.8 0.5M340.8 690.3l0.8 0.0M296.7 297.7l0.4 0.2M747.1 48.5l1.8 0.0M586.5 347.9l0.4 0.0M428.3 644.7l1.2 0.0M182.4 587.3l0.4 0.0M300.2 737.1l0.8 0.2M268.0 774.6l0.8 0.2M447.2 401.7l0.8 -0.2M781.6 781.0l0.8 0.0M15.3 514.8l0.4 -0.2M413.0 706.1l0.8 -0.2M126.0 354.6l0.4 0.1M112.2 543.9l2.4 0.0M191.8 186.3l1.8 0.0M586.0 590.0l0.8 -0.2M209.6 414.2l0.8 0.0M493.0 708.2l2.4 1.4M589.2 590.7l2.4 1.4M177.1 656.6l2.4 0.0M399.5 23.3l0.4 -0.2M457.4 337.0l1.2 0.4M141.0 186.3l2.4 0.0M334.1 569.7l0.8 0.0M132.6 333.3l2.4 0.7M70.3 168.6l1.2 0.0M412.7 161.4l1.8 -1.1M359.9 760.5l1.2 0.4M424.1 380.1l2.4 0.0M409.1 198.8l1.2 0.7M600.0 276.7l1.8 1.1M125.3 678.0l0.4 0.0M694.2 574.9l1.2 -0.4M515.0 720.5l1.8 -0.5M244.3 442.7l0.4 0.2M119.6 299.7l1.8 -1.1M267.5 455.7l0.8 0.0M654.7 140.7l0.8 0.0M95.2 703.2l0.4 -0.1M264.7 386.0l1.8 0.0M297.6 701.4l2.4 -1.4M759.4 507.1l1.8 0.0M272.4 315.8l2.4 -0.7M642.3 219.8l1.2 -0.7M317.4 297.4l2.4 0.0M226.1 274.3l1.8 0.0M767.5 308.3l0.4 0.0M172.1 581.2l0.8 0.0M254.9 188.4l1.8 0.0M100.6 759.1l0.4 0.0M450.5 721.8l0.8 0.2M684.4 52.3l1.8 0.5M77.0 684.6l2.4 0.0M102.4 38.5l0.8 0.0M293.1 736.4l0.4 -0.2M355.5 318.7l1.2 0.4M190.8 761.7l0.8 0.0M602.5 66.7l0.4 -0.2M359.7 622.3l1.8 0.5M720.2 478.2l1.2 0.7M324.1 738.0l2.4 -0.7M117.3 154.9l1.8 0.0M564.6 25.5l2.4 0.0M690.1 296.7l0.8 -0.2M311.5 525.0l1.2 0.4M780.7 727.1l1.2 0.4M156.7 776.1l2.4 -1.4M4.5 462.1l1.2 0.0M525.3 446.9l2.4 0.0M130.3 673.0l1.2 -0.7M754.1 85.0l0.4 0.0M241.0 407.3l0.4 0.0M716.2 482.1l1.8 0.5M721.2 636.4l1.8 1.1M301.6 49.1l1.2 0.0M54.1 217.9l1.2 0.0M751.7 737.8l1.8 -1.1M467.6 635.6l1.8 1.1M705.7 326.6l1.8 0.0M38.8 656.7l1.2 0.0M492.2 678.5l0.8 0.0M520.7 307.8l0.8 0.0M666.0 47.2l0.4 0.0M695.7 700.0l1.8 -0.5M383.7 567.5l1.2 0.0M686.3 484.0l0.8 0.5M409.1 277.3l0.8 0.0M387.7 618.5l1.2 0.0M745.7 189.9l2.4 0.0M793.4 607.3l1.8 -0.5M510.7 756.6l1.8 0.5M658.4 539.6l1.8 0.0M533.5 387.0l2.4 0.0M754.4 143.8l2.4 0.0M384.7 396.3l1.2 -0.4M301.0 442.5l2.4 0.0M133.3 694.5l0.4 0.0M407.9 236.5l1.2 0.4M472.4 157.3l0.4 0.0M514.7 449.3l1.2 0.4M775.7 503.2l2.4 -1.4M543.6 154.7l0.8 -0.2M156.4 244.4l0.8 0.5M452.4 178.2l2.4 1.4M97.4 657.2l1.2 0.0M810.6 536.8l0.4 0.0M41.2 345.7l1.2 0.0M731.5 548.1l2.4 0.7M286.6 561.0l2.4 -1.4M148.5 457.0l0.8 -0.5M183.9 181.8l0.4 0.0M478.7 583.4l1.2 0.7M789.6 329.4l0.4 0.0M487.8 551.5l1.8 0.0M678.0 699.3l1.8 0.0M45.4 346.5l2.4 1.4M315.3 304.2l1.2 -0.4M109.9 719.6l2.4 0.0M463.8 94.9l1.8 -0.5M613.0 574.1l0.8 0.2M115.6 724.6l1.2 0.0M632.3 655.6l1.8 0.0M389.7 53.6l0.4 0.1M807.0 203.3l0.4 -0.1M755.9 172.4l1.2 0.0M632.6 594.7l1.2 0.7M65.3 594.7l0.4 -0.1M636.6 361.2l0.8 0.0M250.2 268.1l0.4 0.2M420.1 726.6l1.8 0.0M808.7 579.8l0.8 -0.5M511.2 66.3l1.2 0.0M84.6 585.6l0.8 -0.2M331.0 195.8l0.8 0.2M212.3 366.5l0.8 0.2M3.9 191.0l1.8 0.0M162.9 88.6l1.2 0.0M203.5 524.0l1.2 0.0M31.9 338.2l1.8 0.0M128.1 75.5l1.2 0.7M82.5 403.2l1.8 0.0M159.3 530.4l1.8 -0.5M661.0 243.6l2.4 -1.4M357.9 522.9l0.4 0.2M151.8 769.6l0.4 0.0M655.2 204.2l0.8 -0.2M774.9 225.6l0.8 0.5M678.2 330.6l1.2 0.0M799.2 354.4l0.4 0.0M75.6 573.1l0.8 0.5M741.3 522.2l1.2 0.7M96.5 635.1l0.8 0.0M125.9 685.4l1.2 -0.4M260.7 711.9l2.4 0.7M792.0 510.9l2.4 -0.7M161.4 415.7l1.8 1.1M276.3 305.6l2.4 -0.7M480.8 190.9l1.2 0.7M411.4 404.5l1.8 0.5M543.0 162.7l2.4 0.0M226.0 606.5l1.8 -1.1M307.0 383.6l2.4 -0.7M307.1 242.4l1.8 -1.1M579.3 643.3l0.8 0.5M369.9 293.7l1.2 0.4M294.3 594.8l0.8 -0.5M191.8 617.4l1.2 0.7M300.0 34.7l1.2 0.0M335.3 354.0l2.4 -0.7M727.2 681.1l0.8 0.0M275.9 104.4l0.8 0.2M84.3 171.6l1.8 0.0M582.0 701.6l1.8 0.0M344.7 260.4l0.8 0.5M129.8 235.2l0.8 0.0M30.9 153.4l0.4 0.1M347.0 137.6l2.4 0.0M91.9 228.2l2.4 0.7M813.1 772.2l1.8 0.5M152.7 615.6l1.2 0.0M622.2 274.7l0.4 -0.1M585.7 179.0l2.4 1.4M468.3 197.9l0.4 0.0M578.8 666.3l1.8 -0.5M631.2 691.5l2.4 0.0M422.1 667.5l1.8 0.0M194.7 356.3l1.8 0.0M13.6 195.2l1.2 0.4M197.1 672.1l2.4 0.0M308.8 50.8l1.2 0.0M384.0 563.9l1.8 0.0M45.4 310.7l0.8 -0.2M510.9 612.4l1.8 -0.5M781.3 143.3l1.2 -0.7M615.2 356.3l0.4 0.0M377.9 183.3l0.4 0.0M354.0 407.4l1.2 0.7M284.8 301.6l0.8 0.0M417.7 396.7l1.2 0.0M703.7 181.0l1.8 0.0M692.9 478.9l2.4 -0.7M224.6 600.0l2.4 1.4M302.4 108.8l2.4 1.4M268.3 271.3l0.4 0.0M132.7 39.2l0.8 0.2M4.0 779.8l2.4 0.7M295.3 218.1l0.8 -0.5M575.9 146.9l0.4 0.0M308.3 695.6l1.8 1.1M35.4 436.2l0.8 -0.2M142.2 511.7l0.8 0.0M663.0 402.8l2.4 -1.4M141.1 408.7l1.2 0.0M450.3 123.7l2.4 0.0M111.0 256.3l0.8 -0.2M795.4 619.7l2.4 -1.4M182.3 357.9l1.2 -0.4M104.0 669.2l2.4 0.0M671.9 517.5l0.4 0.0M500.3 47.2l2.4 1.4M121.4 634.1l2.4 0.0M13.9 697.7l1.8 -0.5M195.7 160.5l1.2 0.7M54.9 76.8l0.4 0.0M131.3 244.1l1.2 0.0M751.8 709.2l1.8 -0.5M650.4 235.2l0.4 -0.2M49.1 239.3l1.2 0.0M775.4 523.9l1.8 -0.5M491.1 692.5l2.4 0.7M308.4 634.0l0.8 0.0M221.9 745.8l0.8 0.5M359.9 622.2l1.2 -0.4M396.5 495.8l1.2 0.4M172.1 285.7l1.8 0.0M429.1 139.0l1.8 -0.5M172.0 740.9l0.8 0.0M467.0 705.7l1.2 0.7M99.9 236.0l2.4 -0.7M687.9 261.6l0.4 -0.2M652.7 214.7l0.8 -0.2M451.9 449.6l0.8 0.5M635.2 243.7l0.4 -0.2M793.2 352.4l1.8 0.5M681.9 563.5l1.8 0.0M732.8 263.2l1.8 0.5M227.5 97.7l0.8 0.0M388.6 430.1l1.8 1.1M412.0 657.1l0.8 0.2M32.3 604.6l2.4 0.0M439.9 187.2l1.2 0.7M594.2 195.3l2.4 0.0M529.9 304.1l1.8 -1.1M54.2 510.3l1.2 0.0M207.0 638.7l0.4 -0.2M468.2 703.3l0.8 0.0M209.6 654.6l0.8 0.0M1.1 718.7l0.8 -0.5M717.7 335.9l0.8 -0.5M7.7 271.9l0.4 0.1M569.9 614.3l0.8 0.0M287.2 259.9l1.8 0.5M532.5 426.9l0.8 0.0M342.0 491.6l2.4 1.4M360.6 353.7l2.4 -1.4M619.2 230.4l1.8 -1.1M333.7 523.6l2.4 0.0M377.5 458.3l0.8 -0.2M416.0 111.9l1.8 0.0M11.8 497.9l0.8 -0.5M158.2 642.7l1.8 1.1M519.6 730.5l1.8 1.1M3.1 246.9l1.8 0.5M588.7 416.6l0.8 0.0M36.1 246.1l2.4 1.4M660.4 109.7l0.4 0.0M21.5 571.5l1.2 0.7M147.6 321.8l2.4 1.4M339.6 114.9l1.2 0.4M790.3 312.8l1.8 0.0M311.1 173.7l1.8 1.1M582.0 309.4l2.4 -1.4M454.8 655.1l1.8 0.0M714.1 176.1l1.8 0.5M623.5 231.6l0.8 -0.2M424.7 344.9l1.2 -0.7M195.3 447.7l1.8 0.0M28.6 359.3l1.2 -0.4M359.9 601.0l0.4 -0.2M90.1 250.9l0.4 -0.2M307.4 118.1l0.4 0.0M124.3 190.8l0.4 -0.2M74.9 169.6l2.4 0.0M112.8 645.2l1.2 -0.4M197.6 659.2l0.4 -0.1M771.8 331.8l2.4 0.0M566.9 468.0l1.2 0.7M406.5 163.7l1.8 0.0M230.8 466.5l1.2 -0.4M225.2 509.6l0.4 0.0M654.8 398.3l0.8 0.0M94.8 408.2l2.4 0.0M588.1 305.8l1.8 -0.5M224.4 766.6l1.8 0.5M210.9 640.1l0.8 0.0M815.0 513.6l2.4 0.0M65.9 677.3l1.2 0.7M503.8 169.2l1.8 0.0M583.3 94.8l0.4 0.0M389.1 514.9l1.8 0.0M732.1 749.2l1.8 0.0M306.7 550.4l1.2 0.4M538.3 325.5l1.8 0.0M319.7 128.9l1.2 -0.4M380.9 658.9l0.4 0.2M456.7 152.9l1.2 -0.7M219.4 619.7l1.8 0.0M256.0 301.7l0.8 -0.5M446.4 156.2l0.4 0.0M729.0 424.3l1.8 0.0M706.7 420.2l0.8 0.5M450.5 765.2l1.2 0.0M68.0 178.3l0.4 0.1M180.5 376.0l1.8 -1.1M516.2 618.8l0.4 0.0M330.0 204.5l2.4 0.0M378.0 340.4l2.4 0.0M201.9 239.6l0.4 0.0M469.3 46.2l2.4 0.0M514.0 467.3l1.8 -0.5M120.5 324.5l2.4 0.7M217.9 325.0l0.8 0.0M579.0 457.0l1.2 -0.4M354.9 169.1l1.2 -0.4M558.2 58.0l2.4 0.0M32.1 214.9l1.2 0.7M224.7 348.4l2.4 0.7M367.8 376.5l2.4 0.0M751.7 544.7l0.8 -0.5M93.5 585.9l0.8 0.0M111.8 396.2l1.2 0.0M775.7 778.5l0.4 0.2M684.4 639.5l1.8 0.0M55.9 45.4l1.8 -0.5M779.7 336.0l0.8 -0.5M41.9 333.9l1.2 0.0M515.4 337.5l0.4 0.2M643.9 349.3l0.8 0.0M806.2 42.4l1.8 -1.1M683.6 551.6l1.2 -0.7M81.5 309.3l1.2 0.0M783.3 498.7l1.8 -0.5M783.3 401.3l2.4 0.7M85.6 96.4l1.8 1.1M353.7 405.0l0.4 0.0M598.1 378.5l1.2 0.0M495.2 341.7l2.4 0.0M546.4 24.1l0.8 0.0M471.8 309.6l1.2 0.7M622.2 489.9l1.2 0.0M444.1 726.6l2.4 -1.4M810.6 44.1l2.4 1.4M594.1 757.3l1.8 0.0M518.6 426.9l1.2 0.7M12.4 265.2l0.4 -0.2M645.9 45.4l1.2 0.0M598.9 657.5l2.4 -0.7M629.1 488.4l0.8 -0.5M636.8 744.4l2.4 0.7M689.9 752.2l1.2 0.0M431.7 626.2l0.4 0.0M685.1 22.7l0.4 0.0M248.7 553.9l2.4 0.0M697.2 370.8l0.8 0.2M670.5 645.0l0.8 -0.5M251.7 706.9l1.2 0.0M734.0 160.1l1.8 1.1M426.7 634.5l0.8 0.0M256.8 540.8l0.8 -0.5M553.0 362.0l1.2 -0.4M443.9 124.7l0.8 0.0M567.9 37.4l0.8 -0.5M605.4 720.3l2.4 0.0M147.8 179.4l0.4 0.0M742.6 326.5l0.8 0.0M371.2 62.0l1.8 0.0M26.4 280.6l0.8 -0.2M644.6 564.1l1.8 -0.5M296.5 667.6l0.4 0.0M342.6 243.6l0.4 0.0M357.4 359.3l0.8 -0.5M715.5 625.7l2.4 0.0M767.5 363.3l2.4 0.7M704.8 216.6l1.2 0.4M85.1 403.0l0.8 -0.2M353.9 773.9l1.8 -1.1M686.0 699.1l0.4 -0.1M520.4 584.0l1.8 1.1M128.3 333.3l0.8 0.0M265.8 652.3l2.4 0.7M500.5 493.5l0.8 0.0M523.5 684.2l0.4 0.0M692.8 644.0l0.8 0.2M615.0 377.6l1.8 1.1M161.4 629.3l0.4 0.2M799.1 190.0l1.8 0.0M339.4 459.6l1.8 1.1M354.6 317.4l0.8 0.0M252.7 109.2l1.8 1.1M287.4 339.3l0.8 0.0M767.3 470.5l2.4 0.7M269.9 314.6l1.8 1.1M365.2 765.3l0.8 0.5M639.5 696.9l1.2 0.4M735.6 332.7l0.4 0.0M598.3 153.2l0.8 0.5M76.4 138.0l1.2 0.0M55.6 442.0l1.8 0.0M703.8 327.9l1.2 0.0M364.7 198.8l0.8 0.2M149.1 641.1l1.2 -0.7M659.4 474.2l1.8 -1.1M459.4 166.7l1.2 0.7M224.2 201.3l0.4 -0.1M273.9 197.1l1.2 0.0M8.8 546.2l1.8 -1.1M517.1 304.2l1.8 0.0M468.3 189.3l0.8 0.5M518.0 447.8l1.8 -0.5M291.6 550.8l1.8 0.0M806.0 29.6l0.4 -0.1M445.9 316.7l1.2 0.4M170.9 617.1l2.4 -0.7M617.6 393.4l0.4 0.1M630.3 187.5l1.8 -1.1M1.4 218.6l0.8 0.5M619.6 630.5l0.8 0.0M437.7 475.8l0.8 0.0M748.0 168.6l0.8 0.0M338.8 238.6l1.2 -0.7M481.6 753.3l2.4 0.7M221.4 693.0l1.2 -0.7M612.9 550.0l2.4 0.0M209.0 742.7l0.4 0.0M270.4 265.7l0.8 -0.5M352.1 703.7l1.2 0.0M12.1 704.9l0.8 0.0M96.2 300.7l0.4 -0.1M147.6 211.8l2.4 0.7M408.0 299.9l2.4 -1.4M509.4 221.0l0.8 0.2M408.1 714.4l1.2 -0.4M563.8 200.8l0.8 0.0M28.4 553.7l0.8 0.0M438.1 655.2l1.8 0.0M543.9 168.0l0.8 0.2M423.4 383.4l0.4 0.2M397.1 411.5l0.8 -0.5M516.2 414.3l0.8 -0.5M307.8 252.3l2.4 -1.4M273.8 82.0l1.8 0.0M782.4 283.0l1.8 0.5M164.4 436.3l0.4 0.2M693.6 609.6l0.8 -0.2M624.9 277.8l0.8 0.0M156.4 446.1l1.2 0.0M559.7 333.6l2.4 0.0M243.4 496.6l1.8 0.5M221.5 282.1l2.4 -1.4M21.6 393.3l0.4 0.0M702.1 536.1l1.8 0.0M796.0 740.6l0.4 -0.1M575.6 574.2l2.4 0.0M13.9 723.2l2.4 1.4M665.8 230.9l0.4 0.1M754.5 227.3l0.4 0.0M112.5 777.1l0.8 0.0M120.5 703.4l2.4 0.0M108.0 335.7l0.4 0.1M343.0 65.3l0.4 0.1M779.2 660.5l0.4 0.1M568.4 396.2l1.8 0.0M119.5 410.8l0.8 -0.2M715.9 340.7l1.2 0.0M196.2 371.0l1.2 -0.4M80.9 667.8l0.8 -0.2M29.3 720.9l0.8 -0.5M333.9 591.7l0.8 0.0M453.8 473.9l1.8 0.0M35.6 443.7l0.8 -0.5M273.7 708.7l1.8 0.0M96.7 589.5l1.2 0.7M425.4 738.4l0.8 0.5M530.0 519.9l2.4 0.0M404.0 596.5l2.4 0.0M106.2 345.2l1.8 0.0M353.7 447.8l1.2 -0.4M320.2 346.0l1.2 0.0M589.7 322.0l1.8 0.0M483.9 300.6l0.8 -0.2M13.5 685.2l1.2 -0.7M380.6 267.8l0.4 0.0M683.6 205.0l1.2 -0.7M570.7 626.7l1.8 0.0M191.6 627.9l1.2 0.0M286.2 642.4l1.8 0.0M791.0 344.3l0.8 0.0M592.2 359.8l2.4 0.7M644.2 732.9l0.8 0.0M411.7 567.0l0.4 -0.1M187.8 282.0l2.4 0.0M74.7 486.5l0.8 0.5M588.6 273.0l0.4 0.0M764.9 155.0l2.4 0.0M688.9 362.0l1.2 -0.4M168.5 677.5l0.8 -0.2M219.2 714.3l1.8 -1.1M593.2 244.5l1.8 0.0M108.5 184.2l1.2 0.0M323.4 598.6l1.8 -1.1M388.7 322.9l1.2 0.0M348.2 721.2l2.4 0.0M557.5 311.4l1.2 -0.7M111.3 694.0l1.8 -0.5M430.8 179.0l0.8 0.5M275.4 539.3l2.4 0.0M2.9 561.5l1.8 0.0M57.3 219.3l0.8 0.0M672.5 439.5l1.2 -0.4M203.8 243.0l1.2 -0.7M283.6 622.1l2.4 1.4M538.1 456.6l0.4 0.0M463.1 679.1l2.4 -1.4M351.6 205.8l2.4 -1.4M659.2 366.9l1.2 0.0M809.7 604.2l1.8 1.1M637.3 615.8l2.4 0.0M579.7 588.6l2.4 1.4M580.9 267.9l1.2 0.0M498.8 199.7l0.4 0.0M500.7 287.6l0.8 0.5M356.8 728.4l0.8 -0.5M514.6 520.7l2.4 0.0M147.6 685.5l0.8 0.0M198.3 412.0l1.8 0.0M452.7 573.8l2.4 0.7M136.0 304.6l0.4 0.0M531.6 657.0l0.4 -0.2M150.8 253.0l0.4 -0.1M561.1 624.7l0.8 -0.2M538.7 264.3l0.8 0.2M135.4 327.5l0.8 0.0M315.3 440.5l2.4 0.0M330.5 629.3l1.2 -0.4M762.6 678.0l2.4 -0.7M643.6 456.5l0.4 -0.1M209.4 96.0l1.2 -0.7M333.5 430.5l0.4 0.0M576.9 625.8l1.2 0.0M46.2 589.9l1.2 0.7M103.0 285.7l0.8 -0.5M373.8 517.3l0.4 0.0M249.1 560.1l0.4 0.2M257.7 64.2l2.4 0.7M558.9 292.3l2.4 -0.7M483.1 363.1l0.8 0.0M654.5 253.6l0.4 0.2M160.2 753.8l2.4 0.0M453.0 431.5l1.8 -0.5M555.9 745.8l2.4 -1.4M184.9 571.0l0.8 0.2M434.5 606.7l0.8 -0.5M431.4 705.7l1.8 0.5M661.1 25.5l0.8 0.5M258.8 446.3l1.8 -1.1M29.4 353.1l0.8 0.5M509.8 120.1l2.4 0.0M784.6 27.5l1.8 -0.5M583.6 646.9l0.4 0.2M403.6 717.0l0.4 -0.1M327.6 198.6l1.8 1.1M64.8 711.9l2.4 0.7M474.3 424.5l2.4 0.0M397.9 665.9l0.8 -0.5M352.6 335.7l2.4 0.0M582.2 433.6l0.8 0.0M181.9 190.4l0.4 0.1M224.3 64.9l1.2 0.7M643.9 317.7l1.2 -0.7M600.6 545.1l0.8 0.2M371.7 672.4l0.4 0.1M774.0 266.9l2.4 0.0M697.5 641.4l0.8 0.0M222.2 581.9l2.4 0.0M269.3 463.7l1.2 0.4M488.7 107.3l1.2 0.0M742.4 271.9l1.2 0.0M144.5 755.0l0.4 0.1M444.0 578.4l0.8 -0.2M85.8 305.3l1.8 -0.5M211.5 273.4l2.4 0.0M62.2 426.8l2.4 1.4M295.3 460.4l1.8 -0.5M210.5 645.1l1.8 0.0M771.4 215.2l1.2 0.0M475.7 201.6l2.4 1.4M375.2 473.1l1.2 0.0M435.4 215.4l0.4 0.0M782.8 585.3l1.8 0.5M649.4 758.1l2.4 -1.4M225.3 415.6l1.8 1.1M637.7 212.4l2.4 -0.7M469.4 643.7l0.4 -0.1M439.2 458.3l0.8 -0.5M753.4 355.5l0.8 0.2M336.8 470.9l1.8 0.0M3.4 92.1l0.8 0.0M209.5 634.9l0.8 0.5M5.2 594.5l2.4 -1.4M194.5 468.3l1.8 0.0M761.5 507.3l0.8 0.0M188.9 97.0l0.4 0.0M355.9 777.1l1.8 0.5M572.4 267.9l1.8 0.0M437.8 537.7l0.4 0.1M458.9 397.0l0.4 0.2M197.2 626.1l0.4 -0.1M552.7 334.9l1.8 0.5M560.5 484.5l1.8 0.5M152.9 373.9l2.4 0.0M732.5 777.1l1.2 0.0M182.8 500.5l0.8 0.0M364.7 642.4l2.4 0.7M357.3 517.0l0.8 0.0M186.9 655.2l0.4 0.0M97.2 158.8l1.8 1.1M790.6 689.5l1.8 0.0M474.0 417.7l0.8 0.0M804.1 735.1l1.2 0.4M266.5 181.0l2.4 0.0M443.2 221.6l0.4 0.0M780.9 586.9l2.4 0.0M30.8 249.0l2.4 1.4M661.0 104.8l1.8 -0.5M682.9 588.3l1.2 -0.7M750.9 718.7l1.8 0.0M480.7 141.7l1.8 0.0M467.0 603.5l2.4 0.7M17.1 280.4l1.2 0.0M56.2 764.3l0.4 -0.1M341.7 106.7l0.4 -0.2M722.2 226.1l1.8 0.0M717.1 425.3l2.4 0.0M323.9 190.2l1.2 -0.4M2.6 768.0l2.4 -0.7M135.9 423.9l0.4 0.0M144.8 198.7l0.8 0.0M815.2 319.1l0.4 0.0M355.9 119.2l1.8 0.0M573.7 416.8l0.8 0.0M801.3 178.4l1.8 1.1M765.0 198.3l0.4 -0.2M277.5 316.3l0.8 0.2M761.6 314.1l0.4 0.0M87.3 432.9l1.8 0.0M706.0 88.4l0.4 0.0M31.0 117.0l2.4 0.0M507.6 341.4l0.8 0.0M282.9 509.3l1.2 0.7M374.1 780.0l2.4 0.7M49.2 251.4l2.4 0.0M394.1 712.4l2.4 -0.7M646.0 441.4l0.4 0.2M801.1 623.4l0.4 0.0M600.4 507.9l0.4 0.0M312.9 177.8l0.4 -0.2M213.1 207.0l1.2 0.0M339.2 295.1l1.2 0.0M16.6 657.5l1.8 1.1M3.3 199.1l1.8 0.5M537.1 654.0l0.8 0.0M770.5 366.2l0.4 0.0M261.6 491.2l0.8 0.5M492.5 636.0l0.4 0.0M684.5 678.4l0.4 -0.2M95.3 359.2l0.4 0.0M460.9 757.8l1.8 0.0M764.8 219.4l2.4 0.0M550.5 199.4l1.8 0.5M82.8 626.6l0.8 -0.5M227.8 507.9l0.8 -0.2M637.5 550.0l0.8 0.2M437.3 150.6l0.8 0.0M724.4 520.0l0.4 0.0M53.0 727.3l0.4 -0.1M462.8 478.3l0.4 0.0M631.6 204.4l2.4 0.7M433.2 280.1l1.8 -0.5M346.3 432.0l0.8 -0.5M557.1 712.5l0.4 0.0M621.2 186.3l2.4 0.7M359.7 197.5l1.8 0.0M601.3 76.7l1.8 1.1M220.0 250.9l1.8 -1.1M603.3 561.0l1.8 1.1M768.4 361.3l1.2 -0.4M22.1 378.8l2.4 -1.4M252.6 101.9l0.4 0.0M359.5 758.5l1.2 -0.4M277.1 491.7l1.8 0.0M123.6 613.3l1.2 0.7M337.3 481.1l0.4 0.0M109.3 178.5l1.2 0.0M326.9 314.5l2.4 0.7M477.6 416.2l0.4 0.2M484.7 656.6l0.4 0.2M782.4 427.6l2.4 -0.7M55.4 587.5l1.2 0.4M525.7 237.3l2.4 0.0M165.8 414.0l0.8 0.0M396.3 157.2l2.4 0.0M774.0 378.1l0.4 0.1M413.5 545.7l1.2 -0.7M58.8 603.5l0.4 0.0M402.6 192.3l0.4 0.1M301.7 668.6l0.8 0.0M678.6 552.0l0.8 -0.2M406.8 479.0l0.8 0.2M590.7 573.5l0.8 -0.2M693.2 237.8l0.4 0.0M486.2 60.2l0.8 0.0M526.9 489.7l2.4 0.7M643.2 283.6l1.2 -0.7M379.5 196.8l1.2 0.4M128.4 613.7l0.4 0.0M202.3 761.0l1.8 0.0M86.4 368.3l2.4 0.7M642.1 163.2l1.2 0.4M10.6 485.8l0.4 0.0M613.4 343.5l0.8 0.0M265.0 517.3l1.8 -0.5M290.5 566.0l0.4 -0.2M421.9 431.4l0.4 0.1M474.2 360.6l1.2 0.0M678.6 546.7l0.4 0.1M520.4 757.1l1.2 0.0M512.0 631.3l0.8 -0.2M400.0 184.7l0.8 0.0M499.2 495.7l0.4 0.0M64.1 155.2l2.4 0.0M171.9 718.0l1.2 0.0M459.8 483.8l0.4 0.0M496.0 487.8l2.4 -0.7M41.5 584.0l1.2 0.0M598.4 309.4l1.8 0.0M389.8 46.6l0.4 -0.1M369.3 65.9l1.8 -0.5M311.8 479.3l1.8 0.0M43.8 660.1l0.4 0.2M123.7 681.7l2.4 -0.7M407.7 678.9l0.4 0.0M708.4 314.3l1.8 0.0M291.1 214.5l1.2 0.7M766.5 210.2l0.4 -0.1M516.4 40.8l1.2 0.0M504.5 221.8l1.2 0.0M309.5 196.3l0.4 0.2M376.4 618.6l0.4 0.0M422.2 673.5l2.4 0.7M755.2 442.8l1.8 0.5M15.5 289.0l0.4 0.1M44.7 740.4l1.2 0.0M447.6 293.4l0.8 -0.5M131.8 319.0l1.2 0.7M311.9 99.3l0.4 0.0M313.5 417.0l0.4 -0.1M120.8 283.7l0.4 -0.1M633.9 168.1l0.4 0.0M379.2 637.0l0.8 0.0M707.4 556.8l0.4 0.0M52.9 444.9l2.4 0.7M715.9 101.8l0.8 -0.5M271.9 135.3l0.4 0.2M694.5 186.0l0.8 -0.5M87.0 618.7l2.4 -0.7M310.0 295.3l0.4 0.0M575.5 153.5l2.4 1.4M737.2 395.9l1.2 0.0M541.4 560.7l1.8 -0.5M225.9 341.1l2.4 0.0M131.8 247.0l1.2 0.7M310.2 600.8l1.8 0.0M219.0 607.9l1.2 0.0M71.0 391.1l1.2 0.0M816.5 743.2l0.8 -0.2M477.5 77.7l1.2 0.0M695.9 453.3l2.4 -1.4M580.3 395.8l1.8 -0.5M536.3 534.8l1.8 0.0M210.4 408.2l0.4 0.2M302.6 393.1l0.8 0.0M804.1 518.3l1.2 -0.7M664.0 655.0l0.8 0.0M10.4 302.4l2.4 0.0M624.2 455.8l1.2 0.4M356.3 409.5l1.8 0.0M51.3 531.1l0.8 -0.5M547.9 280.8l2.4 1.4M792.7 231.9l2.4 0.0M86.1 294.7l0.4 -0.1M410.3 748.3l1.2 0.0M698.5 679.2l2.4 -1.4M200.7 539.3l0.8 0.2M805.9 257.6l1.2 -0.4M643.5 298.9l2.4 0.0M173.5 619.2l2.4 1.4M595.6 463.1l1.8 0.0M154.8 568.6l2.4 0.7M814.6 32.7l0.8 0.0M260.9 412.0l2.4 0.0M107.6 679.4l0.8 0.0M585.8 437.6l2.4 0.0M708.9 74.4l0.8 0.0M393.8 430.5l0.4 0.0M378.8 575.0l2.4 0.0M293.7 316.7l0.4 -0.1M172.9 695.8l2.4 0.0M534.5 546.1l0.8 0.0M120.4 406.6l1.8 0.5M36.2 331.6l0.8 -0.5M722.6 56.3l0.8 -0.5M213.4 341.9l1.8 0.5M582.5 270.1l2.4 -1.4M230.1 745.4l0.8 -0.5M448.6 288.6l1.2 0.0M284.1 649.8l1.2 0.4M176.3 429.2l0.4 0.0M731.9 395.3l1.2 0.0M183.5 465.1l1.2 0.7M503.6 761.3l1.2 0.0M394.1 287.1l2.4 0.0M724.2 594.1l0.8 -0.5M191.9 208.5l0.8 0.2M118.8 539.7l2.4 -1.4M206.1 637.0l1.8 -1.1M497.0 520.4l1.8 1.1M75.8 298.7l1.2 0.0M522.4 89.1l1.2 0.0M304.6 411.3l1.2 0.0M172.3 119.6l2.4 0.0M781.3 752.5l0.8 -0.5M354.3 671.9l1.2 -0.7M234.9 226.2l1.2 0.4M113.5 463.0l2.4 0.7M225.2 114.5l2.4 -0.7M716.0 245.1l2.4 1.4M226.9 652.5l0.8 -0.2M763.1 597.7l0.8 0.2M152.3 253.9l0.4 0.0M178.0 127.0l2.4 0.7M293.6 412.3l1.2 0.4M575.2 50.3l2.4 0.0M316.2 560.4l1.2 0.0M233.1 164.0l1.8 -0.5M45.1 528.4l2.4 0.0M110.5 672.4l2.4 0.0M318.3 654.3l2.4 0.0M809.7 523.0l2.4 0.0M11.7 749.2l0.4 0.0M682.5 383.2l0.8 0.0M332.4 79.0l0.8 0.0M573.6 153.8l1.8 -0.5M68.5 345.9l2.4 0.0M409.4 467.2l2.4 -0.7M195.5 396.6l0.4 0.0M776.1 278.7l0.4 0.2M397.4 494.1l2.4 0.7M761.0 243.3l1.8 1.1M685.4 493.5l0.8 0.0M798.6 204.7l2.4 0.0M622.6 724.6l0.4 -0.1M294.8 578.9l0.4 -0.1M341.2 163.8l0.8 0.5M581.8 613.7l1.8 1.1M622.1 434.1l1.2 0.0M80.7 92.1l2.4 0.0M296.8 376.4l0.8 0.2M119.1 378.2l0.8 0.0M499.3 765.3l1.8 0.0M677.4 399.8l0.4 0.1M326.7 687.7l1.8 0.0M700.8 590.6l0.4 0.0M786.3 240.6l2.4 0.0M783.4 178.9l0.4 0.0M168.6 138.1l2.4 0.0M35.3 228.2l2.4 0.0M143.3 254.5l1.8 -0.5M191.3 475.6l0.4 0.2M425.3 513.7l0.4 -0.2M448.6 256.9l2.4 0.0M743.1 482.9l0.8 0.2M152.4 556.1l0.8 0.0M433.3 50.8l2.4 -0.7M732.4 38.0l0.4 -0.1M659.5 222.4l0.4 -0.1M579.0 137.3l0.8 0.0M256.4 666.6l1.2 -0.4M31.5 747.1l0.4 0.2M622.8 144.5l0.4 0.2M102.1 293.4l0.4 -0.1M385.4 284.7l0.4 0.1M637.5 410.0l0.4 0.0M101.7 569.2l1.2 -0.4M765.0 296.8l1.2 -0.7M234.6 289.3l0.8 0.5M768.7 471.7l2.4 0.0M115.4 250.2l0.4 0.0M516.6 436.0l0.4 0.0M6.3 412.5l2.4 1.4M632.4 777.2l2.4 1.4M212.7 178.5l0.8 0.2M731.2 298.0l0.4 0.2M790.2 224.4l0.4 0.2M515.8 107.4l1.8 0.5M548.3 241.6l2.4 -0.7M364.8 151.2l1.8 0.0M249.4 561.9l1.8 0.0M58.4 657.2l2.4 1.4M160.1 321.4l1.2 -0.4M137.7 421.4l1.8 -0.5M408.0 407.4l0.8 0.0M226.1 80.7l0.8 0.5M424.1 718.0l1.8 0.0M487.7 334.2l0.8 0.0M421.3 352.0l2.4 0.7M543.6 767.5l0.4 0.0M72.3 572.1l1.8 0.0M64.7 635.4l0.8 -0.5M581.0 263.4l2.4 0.0M200.4 671.7l1.2 -0.7M604.7 449.4l0.8 0.0M197.4 382.6l0.4 -0.1M37.5 363.4l0.8 0.0M726.3 119.7l1.2 -0.7M443.3 775.0l1.8 -0.5M797.3 219.1l1.2 0.7M344.9 261.6l0.4 0.0M561.5 724.7l0.4 0.0M489.0 618.5l1.2 0.7M629.3 102.4l2.4 -0.7M782.4 269.6l0.8 -0.2M663.4 541.6l1.8 0.0M231.6 704.4l2.4 -1.4M23.7 204.7l1.2 0.0M738.8 677.7l1.2 0.0M408.9 662.6l0.4 -0.1M208.0 380.9l0.8 -0.5M101.5 272.7l0.4 0.0M100.7 100.3l2.4 0.0M488.6 395.8l0.8 0.5M104.3 637.2l2.4 0.0M347.1 624.6l1.2 0.7M396.4 325.5l0.8 0.2M712.0 500.6l2.4 0.0M50.7 694.5l2.4 0.0M482.9 395.6l2.4 -0.7M217.2 186.6l0.8 0.2M5.0 417.3l0.8 0.0M432.2 556.2l2.4 0.0M376.4 408.6l1.8 0.0M421.8 617.2l1.8 0.0M608.3 333.4l1.2 0.0M176.5 750.9l0.8 0.5M254.7 428.2l2.4 0.0M131.2 499.6l1.8 -0.5M717.0 632.0l0.8 0.2M659.0 337.4l1.2 0.0M379.5 574.7l1.8 -0.5M626.4 155.4l1.2 0.0M6.6 174.3l1.2 0.0M543.9 396.2l1.8 0.0M202.5 542.6l1.2 0.0M20.5 658.3l1.2 0.0M204.9 329.5l0.4 0.2M17.5 196.3l0.4 0.0M707.5 502.8l0.8 -0.2M483.9 81.1l0.8 0.0M204.7 78.2l0.4 0.0M154.7 154.1l0.4 0.0M125.8 72.9l0.4 0.1M508.2 251.1l0.4 -0.1M235.1 696.5l0.4 0.0M449.9 117.7l0.8 0.2M228.9 182.6l0.4 0.0M103.6 610.1l2.4 0.7M596.6 142.4l0.4 0.0M208.1 382.1l1.2 0.7M370.7 146.3l2.4 0.0M801.0 586.2l1.8 -1.1M810.9 753.4l1.8 0.5M170.4 634.6l1.2 -0.7M610.6 694.1l2.4 0.0M71.0 186.4l0.4 -0.2M735.3 365.4l2.4 0.7M534.0 284.6l0.4 0.0M466.4 329.2l1.2 0.7M120.1 441.3l2.4 -1.4M488.0 637.7l2.4 -0.7M109.2 729.5l2.4 0.0M762.3 780.6l1.8 0.0M244.5 64.1l1.2 -0.4M738.1 236.0l0.4 -0.2M668.3 703.8l0.4 0.2M729.3 734.6l0.8 -0.5M119.7 188.7l1.8 0.0M578.0 733.1l1.8 0.5M601.3 617.2l0.4 0.1M50.7 109.8l0.8 0.0M810.2 457.9l1.2 -0.4M196.6 416.7l0.8 0.5M158.9 53.1l1.2 -0.7M62.0 440.4l0.4 -0.2M321.5 204.5l2.4 0.0M762.5 213.2l0.4 -0.1M383.1 558.3l1.2 -0.4M668.8 458.8l1.2 -0.7M597.3 207.1l0.8 0.0M463.8 752.2l0.4 0.0M717.4 762.3l1.2 -0.4M793.3 73.1l0.4 0.0M155.0 515.9l1.2 -0.7M324.5 419.9l1.8 0.0M803.5 286.8l0.8 0.0M153.2 275.3l1.8 0.5M775.8 495.0l0.8 0.0M466.2 615.3l1.8 0.0M449.6 389.2l1.8 0.5M199.9 450.2l1.2 0.0M677.0 54.4l1.2 0.0M343.8 433.7l2.4 0.0M343.3 423.3l0.8 -0.2M686.0 294.3l1.8 0.0M622.9 721.7l0.4 -0.1M174.1 468.3l0.4 0.0M148.4 766.3l0.8 -0.5M356.0 67.5l0.8 -0.2M178.5 505.4l0.4 -0.1M584.5 463.8l1.8 -1.1M428.0 276.6l1.2 0.7M691.0 637.2l1.8 0.0M408.5 662.3l0.8 -0.5M11.6 395.0l1.8 1.1M780.9 728.5l1.8 0.0M86.7 593.6l2.4 -0.7M137.9 687.5l0.8 0.0M390.4 778.7l1.2 -0.7M646.6 277.2l1.2 0.0M804.5 88.7l1.2 0.0M160.5 456.1l0.8 -0.5M655.4 599.5l1.8 0.0M149.0 358.7l1.8 1.1M692.7 464.6l0.4 0.0M110.4 570.1l1.8 0.0M785.4 764.3l1.2 0.0M248.4 375.9l2.4 -1.4M632.6 424.0l1.2 0.7M773.4 25.6l0.4 0.0M505.2 156.6l0.4 -0.2M50.2 213.4l0.8 -0.2M764.0 396.6l1.2 0.0M85.4 721.4l0.4 0.2M578.8 410.7l0.8 0.5M50.3 293.4l0.8 0.0M462.9 242.0l1.8 0.0M8.6 107.3l1.2 0.0M505.5 589.9l2.4 0.7M208.7 561.3l0.8 0.0M627.5 529.7l0.8 0.0M143.1 231.1l0.8 0.0M376.7 69.5l0.8 0.2M745.0 351.7l1.2 0.7M309.2 423.2l2.4 -0.7M241.2 67.6l0.4 0.1M724.4 362.1l0.8 0.0M771.5 211.7l1.2 -0.4M139.2 757.1l1.8 0.0M397.8 483.9l0.4 0.1M536.1 407.7l2.4 0.0M686.9 508.7l0.8 0.5M644.4 350.4l0.8 -0.5M97.7 225.4l1.8 -1.1M804.9 551.1l1.8 0.0M428.4 616.0l0.4 0.0M441.0 453.2l1.2 -0.4M495.6 580.7l1.8 0.0M557.2 707.7l2.4 1.4M395.9 658.5l1.2 0.4M321.3 517.1l0.8 0.0M799.4 403.8l0.8 0.2M768.2 224.7l2.4 -1.4M74.7 765.8l1.8 0.0M24.5 209.1l1.2 0.7M121.9 194.9l0.8 0.0M750.4 266.7l1.2 -0.4M116.0 232.0l0.4 0.1M536.8 389.2l1.2 0.4M287.9 667.2l2.4 0.0M405.8 146.9l1.8 0.0M91.3 373.2l0.8 0.5M271.3 244.8l1.8 -0.5M231.8 244.7l2.4 0.0M305.1 741.3l0.8 0.0M184.5 151.8l1.8 -1.1M232.7 533.8l0.4 0.2M110.2 349.7l1.2 0.4M594.5 755.9l1.8 1.1M525.8 122.4l0.4 0.0M115.3 148.1l0.4 -0.2M705.4 583.7l1.2 0.0M88.8 249.8l1.2 0.0M3.3 578.3l2.4 0.0M299.7 271.7l1.8 0.0M646.7 173.0l1.8 -0.5M362.0 257.9l0.8 -0.5M383.9 671.0l1.8 1.1M655.6 758.9l0.8 0.5M434.8 316.3l0.4 0.0M430.9 291.7l0.4 0.0M811.4 255.4l1.2 0.0M577.3 622.2l1.2 0.4M655.5 140.0l1.8 -1.1M459.6 632.1l1.8 -0.5M396.4 580.7l1.8 0.0M477.9 181.7l1.8 0.0M734.7 735.6l1.8 0.0M702.0 699.8l2.4 0.0M758.6 70.7l2.4 0.0M815.1 570.7l0.4 -0.2M367.1 491.6l0.8 -0.5M445.5 140.3l2.4 0.7M378.3 761.8l1.8 0.5M801.1 497.8l0.8 0.0M630.4 311.3l2.4 -1.4M460.5 583.5l1.2 -0.4M554.2 302.5l1.8 -0.5M525.9 778.4l0.4 0.0M731.8 420.4l0.8 -0.5M626.8 526.0l1.8 0.5M319.6 573.6l0.8 0.0M659.2 241.1l1.2 0.0M337.2 665.5l0.4 -0.2M647.9 407.8l2.4 0.0M768.4 124.4l1.8 -1.1M179.6 212.3l2.4 1.4M409.5 577.6l0.8 0.0M619.0 556.3l1.2 0.0M40.2 61.6l2.4 1.4M806.4 737.4l1.8 0.0M26.8 661.7l2.4 0.7M560.3 438.4l1.8 0.0M431.2 340.5l2.4 0.7M288.5 201.8l1.8 -0.5M144.2 648.1l2.4 -1.4M678.6 122.1l1.2 0.0M219.5 423.5l0.8 0.2M236.8 305.1l1.2 0.0M643.3 428.0l1.2 0.0M347.2 400.0l0.4 0.0M691.1 265.0l1.2 0.0M329.4 563.2l0.4 -0.2M288.1 688.1l1.8 -0.5M258.5 405.2l1.8 0.5M758.8 623.6l2.4 1.4M437.6 283.8l1.2 0.4M710.9 706.2l0.8 0.5M390.7 237.6l2.4 -0.7M632.0 109.7l0.8 0.0M528.5 536.4l0.8 0.2M189.2 252.0l1.2 -0.7M714.2 622.7l1.8 1.1M165.2 371.3l1.8 0.0M638.0 422.5l1.2 -0.4M398.7 61.5l2.4 0.7M654.5 569.6l1.2 0.4M205.7 475.7l0.4 0.2M204.6 682.6l2.4 -1.4M60.7 474.4l1.8 -1.1M646.9 334.3l0.4 -0.2M499.3 178.2l2.4 0.0M368.6 642.8l1.2 0.4M413.0 434.5l2.4 -1.4M14.1 638.5l0.8 0.0M698.6 444.4l0.4 0.2M175.9 565.5l2.4 0.0M63.1 719.7l1.8 0.0M618.1 98.1l2.4 0.0M372.6 374.6l0.4 -0.2M432.0 214.4l0.4 -0.2M137.0 373.8l0.8 0.0M600.8 686.8l0.4 0.0M115.5 657.0l0.8 -0.2M588.9 710.5l1.8 0.0M418.6 666.2l1.2 0.0M26.6 177.0l0.8 0.0M253.2 289.5l0.8 0.5M69.8 415.2l1.2 0.0M238.4 741.9l2.4 0.0M487.5 499.8l1.2 0.0M297.9 606.6l0.4 0.0M456.4 738.3l1.8 -0.5M565.2 574.6l0.4 -0.2M562.5 600.1l0.8 -0.5M78.7 73.2l0.4 0.0M692.8 337.2l1.8 0.0M150.0 345.7l2.4 -0.7M703.9 699.0l0.4 0.2M245.7 51.6l0.8 0.5M755.1 233.0l2.4 1.4M524.3 254.3l2.4 0.0M333.8 473.4l1.8 0.0M249.0 699.1l2.4 0.0M722.0 590.8l2.4 -1.4M36.8 189.4l1.8 0.0M123.8 758.3l0.4 -0.2M326.3 653.0l2.4 -0.7M95.4 540.7l2.4 0.0M461.9 599.9l0.4 0.2M538.7 171.1l1.8 1.1M92.0 128.1l1.2 0.4M559.4 428.8l1.8 1.1M533.1 406.4l1.8 1.1M106.4 80.4l0.8 -0.2M388.1 97.2l0.8 0.2M764.6 103.3l0.8 0.0M623.2 415.8l1.8 -0.5M621.7 492.4l1.8 -1.1M709.6 538.0l1.2 0.4M718.4 62.3l2.4 0.7M808.1 728.0l1.8 1.1M239.1 364.7l0.4 0.1M67.3 651.0l0.8 -0.5M426.2 593.3l2.4 0.0M692.8 779.7l0.4 -0.1M110.7 532.5l0.8 0.2M813.6 330.7l2.4 -0.7M302.0 582.0l1.2 0.7M77.7 719.3l1.2 0.0M119.5 758.8l0.4 0.0M565.0 372.1l2.4 -1.4M804.3 684.2l1.8 -1.1M473.4 374.6l0.8 -0.5M625.0 553.9l2.4 0.0M609.5 742.3l0.8 -0.5M720.0 580.3l1.2 0.7M781.1 464.0l1.2 0.0M374.9 467.7l1.8 0.0M734.5 186.5l2.4 -1.4M119.4 151.7l1.2 0.0M39.8 454.5l2.4 0.7M323.9 627.4l0.4 0.1M694.5 124.9l1.8 0.0M549.8 683.5l2.4 0.0M326.2 771.9l1.2 -0.7M268.9 419.4l1.2 0.0M207.2 474.9l0.4 -0.1M9.2 533.5l2.4 0.7M786.6 359.5l0.4 0.2M676.1 458.7l0.4 0.0M769.1 168.8l0.4 0.1M66.6 642.7l0.8 -0.2M803.2 136.3l0.8 -0.5M632.5 376.7l0.8 0.2M481.7 159.4l1.2 0.4M412.0 202.0l1.8 0.0M611.2 405.0l0.4 0.0M285.8 454.8l0.8 -0.5M317.3 446.7l1.2 0.0M150.2 686.1l0.8 0.0M659.6 747.6l0.8 0.5M717.8 476.5l1.2 0.4M379.6 450.8l2.4 0.0M565.1 710.3l1.8 0.0M674.8 579.9l1.8 1.1M58.6 395.6l1.8 0.0M429.4 325.3l1.8 0.5M338.7 71.6l1.2 0.7M586.8 393.2l1.8 -1.1M26.1 194.2l1.8 0.5M253.7 779.9l2.4 -0.7M3.0 326.3l2.4 0.7M45.0 683.1l2.4 0.0M423.8 588.6l1.2 0.4M140.7 528.4l0.4 0.0M230.6 298.6l1.8 0.0M83.5 457.8l2.4 -1.4M211.2 291.6l1.8 0.5M724.8 611.6l1.8 0.0M57.3 293.6l1.2 0.4M615.6 577.3l0.4 0.0M676.3 118.9l0.8 0.2M546.4 269.2l0.4 -0.1M282.4 536.7l1.8 0.5M300.9 200.1l2.4 1.4M710.4 358.4l0.8 0.2M411.8 418.8l1.2 0.7M555.9 156.2l2.4 0.7M221.1 715.5l0.8 -0.2M309.1 174.6l0.4 -0.2M566.9 647.6l2.4 0.0M115.2 653.3l0.4 0.0M355.3 198.9l1.2 0.0M810.3 608.2l0.4 -0.2M13.6 330.4l1.8 -0.5M409.5 56.7l1.2 -0.4M516.9 343.5l0.8 0.0M387.3 762.5l2.4 0.0M243.0 534.0l1.8 0.5M390.1 499.3l1.2 0.0M758.1 565.9l1.8 -1.1M39.7 266.2l1.8 0.0M468.8 190.7l1.2 0.7M195.4 349.5l1.2 0.7M84.9 241.8l0.8 -0.5M25.7 634.7l1.8 -1.1M137.8 595.7l2.4 0.0M695.6 501.9l2.4 -0.7M348.2 646.4l1.2 0.0M405.6 379.8l0.8 0.5M69.1 376.9l0.4 0.0M144.8 334.9l1.8 0.0M682.9 372.3l2.4 0.7M270.7 34.9l0.8 -0.2M35.6 241.8l0.4 -0.1M795.6 589.7l0.8 -0.5M588.7 309.2l0.4 0.2M187.4 648.8l0.4 0.1M88.6 644.4l1.2 0.0M586.6 190.1l1.2 0.0M638.8 354.9l0.8 0.2M91.2 553.3l0.4 0.0M181.2 114.7l0.8 0.5M218.9 347.8l0.4 -0.2M315.5 734.5l0.8 0.0M462.1 366.2l2.4 0.0M372.4 719.7l0.8 -0.5M777.2 599.9l1.2 -0.4M357.3 140.0l1.8 -1.1M317.1 618.7l1.2 0.4M792.8 183.0l1.2 0.4M678.1 199.6l1.2 -0.4M334.8 378.5l0.8 0.0M672.8 736.1l0.8 0.2M22.0 356.1l2.4 -1.4M784.9 771.6l1.2 -0.4M614.0 262.0l0.8 -0.2M383.0 748.9l2.4 0.7M218.5 139.7l2.4 0.7M621.3 121.5l0.4 0.0M427.0 48.2l0.8 0.5M292.7 275.5l2.4 0.7M594.0 457.0l1.8 0.0M121.6 298.0l1.2 0.7M12.7 605.8l2.4 0.7M163.5 37.7l2.4 1.4M437.4 577.2l1.8 -0.5M350.9 262.3l0.8 0.2M344.3 424.1l1.2 -0.7M178.0 498.0l2.4 0.0M612.1 411.8l2.4 0.7M773.9 197.5l1.8 -1.1M464.5 446.0l0.4 0.2M462.4 727.3l0.8 0.0M536.7 685.1l2.4 -1.4M489.9 257.5l2.4 0.0M605.7 157.2l0.4 0.0M189.7 503.5l1.8 0.0M623.5 573.9l1.2 0.7M482.1 132.7l1.2 0.0M628.6 203.6l0.4 -0.1M448.0 721.9l0.8 0.0M598.6 488.4l1.8 0.0M566.4 599.0l0.8 0.5M788.8 712.4l0.8 -0.2M282.1 167.1l0.8 0.0M598.5 36.2l1.8 1.1M330.5 325.8l1.8 0.0M625.0 753.8l1.8 -0.5M181.7 75.6l1.2 -0.7M341.1 731.9l0.8 0.0M327.4 587.2l2.4 0.0M185.9 42.6l1.8 0.5M45.5 506.1l0.8 0.0M537.7 151.6l2.4 0.7M753.3 66.3l1.2 0.7M696.0 334.7l0.4 -0.2M342.0 512.2l0.4 -0.2M682.9 284.4l0.8 0.0M690.1 376.7l0.8 0.0M152.8 565.2l2.4 -1.4M357.1 585.0l1.2 0.0M139.3 506.6l0.8 0.0M227.4 67.5l0.8 -0.5M346.0 654.7l0.8 -0.2M17.8 426.9l2.4 0.0M173.8 218.6l1.2 0.0M46.4 378.6l1.2 0.4M643.7 393.3l1.2 0.7M86.7 560.4l2.4 0.7M222.5 209.6l1.8 0.0M288.0 466.3l0.8 0.2M779.8 52.3l0.4 -0.1M585.9 770.3l0.8 0.5M446.8 472.2l1.2 0.0M497.3 607.6l0.4 0.0M713.3 727.6l1.2 -0.4M249.7 614.8l2.4 0.7M90.5 725.6l2.4 -0.7M795.0 287.0l0.4 -0.1M348.8 432.5l0.8 -0.2M21.6 570.5l0.8 0.5M696.0 451.6l0.8 0.0M426.1 608.2l0.8 0.2M47.1 134.7l1.8 -0.5M147.5 619.6l0.4 0.0M439.5 288.8l1.8 -0.5M323.8 691.7l2.4 -0.7M294.3 716.4l1.8 0.0M25.9 357.8l0.4 0.0M521.7 92.3l2.4 0.0M669.3 680.7l0.8 0.5M348.9 654.1l1.8 0.0M738.3 26.8l1.8 1.1M429.8 305.9l0.8 -0.2M738.4 230.2l2.4 0.0M809.1 371.1l2.4 0.0M749.9 351.0l1.8 0.0M137.6 230.3l1.2 0.0M143.9 661.2l1.8 0.0M262.1 430.9l2.4 -1.4M368.1 240.9l0.4 0.0M475.5 689.0l1.2 -0.7M617.5 247.5l0.4 0.0M150.3 221.8l0.8 -0.2M328.8 729.0l1.2 -0.4M3.6 29.1l0.4 0.0M455.8 41.4l2.4 0.0M441.6 186.1l1.8 0.0M665.0 729.4l1.2 0.0M444.5 336.1l0.4 0.0M558.2 263.6l2.4 0.0M809.5 277.0l0.4 0.1M648.4 553.0l2.4 0.0M490.3 658.9l2.4 0.7M778.2 760.0l1.2 -0.7M531.6 576.4l1.8 1.1M303.6 414.1l0.4 -0.1" stroke="#0a0838" stroke-opacity="0.55" stroke-width="2.2" stroke-linecap="round" fill="none"/>
<path d="M33.6 271.8l1.2 0.0M53.1 426.0l1.8 -0.5M801.1 449.8l0.4 -0.1M393.7 523.1l2.4 -0.7M287.5 162.6l0.8 0.0M73.9 237.9l0.4 -0.1M340.2 456.9l0.4 0.0M617.7 364.9l2.4 0.0M352.1 625.0l0.4 -0.1M737.5 298.7l1.8 0.0M616.4 527.3l1.8 0.0M694.8 253.2l1.2 0.7M568.7 211.4l1.8 0.0M613.7 193.2l1.2 0.0M432.1 494.7l0.8 0.0M82.0 225.5l2.4 0.7M178.3 489.8l0.4 -0.2M235.6 335.8l2.4 0.0M601.4 537.1l1.8 0.0M276.8 497.4l1.8 1.1M759.2 423.6l2.4 0.7M544.4 388.1l1.8 -1.1M542.5 477.1l1.2 0.0M404.4 761.7l2.4 0.0M242.9 511.7l1.8 0.0M353.8 216.3l1.8 -0.5M469.2 99.5l0.8 -0.5M204.0 51.0l2.4 0.7M18.5 76.2l0.8 0.0M658.4 450.9l1.2 0.7M466.8 551.9l1.2 0.0M430.3 546.4l2.4 0.7M274.2 274.0l0.8 0.5M318.4 425.5l0.8 0.0M329.7 641.2l1.2 0.0M151.1 191.4l2.4 -1.4M417.7 526.3l0.8 0.0M192.4 555.7l2.4 0.0M528.5 214.5l0.8 0.0M514.3 198.9l0.4 0.0M313.4 407.2l1.2 0.4M287.6 745.7l2.4 -0.7M400.4 523.3l1.8 0.0M294.4 546.1l0.8 0.0M209.9 169.0l0.4 0.2M742.2 779.2l2.4 0.0M609.8 543.5l1.8 0.5M281.6 293.0l1.2 0.0M134.5 346.1l2.4 -1.4M58.9 158.7l2.4 0.0M52.1 760.0l0.4 -0.1M199.8 584.9l2.4 0.7M226.4 162.3l1.2 0.0M70.5 585.2l1.2 0.4M422.8 117.7l1.2 -0.7M663.3 731.9l0.4 -0.2M479.6 89.7l1.2 0.0M308.2 229.1l1.2 0.0M347.7 636.4l2.4 -0.7M95.7 249.2l1.2 0.4M568.2 374.1l2.4 -0.7M704.5 125.9l2.4 -1.4M72.3 239.7l2.4 -0.7M326.6 617.0l0.8 0.0M611.1 313.3l1.2 0.0M746.9 274.0l0.4 0.1M126.8 423.5l0.4 0.0M78.2 259.6l1.8 -0.5M132.8 121.8l2.4 -1.4M421.4 291.1l0.4 -0.1M84.2 657.1l0.8 0.5M385.1 202.0l1.8 -0.5M705.9 517.1l2.4 0.0M380.0 239.6l0.8 0.0M189.8 482.2l1.8 0.0M807.3 314.5l1.8 1.1M794.1 569.3l1.8 0.5M182.6 533.3l1.8 0.5M180.1 409.5l1.8 0.0M142.4 478.7l1.2 0.0M544.3 616.2l1.8 0.0M440.9 532.5l1.2 0.7M299.9 569.8l1.8 -0.5M357.5 449.2l0.4 0.0M385.0 245.5l0.8 0.0M428.9 555.0l2.4 0.7M390.2 489.3l0.8 0.0M7.7 453.5l2.4 0.7M295.4 375.2l0.8 0.0M54.4 280.7l0.4 0.0M327.3 352.6l0.4 0.0M439.1 497.2l1.2 0.0M561.8 155.3l1.2 0.0M173.0 586.8l2.4 0.0M426.0 601.1l1.2 0.0M241.6 502.2l0.4 -0.2M754.6 485.7l2.4 -0.7M685.9 272.1l0.8 0.5M594.9 27.0l0.8 -0.2M53.5 288.4l1.2 -0.4M408.7 356.8l0.4 0.2M358.0 349.2l0.4 0.0M588.4 199.3l1.2 0.0M237.0 364.3l1.8 0.5M248.8 428.2l0.4 -0.2M304.5 503.3l0.8 0.0M409.4 525.1l1.2 0.0M139.3 208.0l1.2 -0.4M473.3 520.3l1.2 -0.7M421.5 274.3l2.4 0.7M90.1 495.7l0.4 -0.2M754.0 180.8l2.4 0.0M154.9 359.4l1.2 0.7M189.0 115.7l0.4 0.1M673.4 349.9l2.4 0.0M722.2 335.9l0.4 -0.1M610.8 267.0l2.4 0.7M217.7 567.6l1.8 0.0M197.8 517.4l0.4 0.0M547.4 49.5l0.8 0.0M786.3 351.2l2.4 0.7M493.7 89.5l1.2 -0.7M576.3 468.3l0.8 0.0M334.9 408.5l0.4 0.0M626.0 99.5l1.2 0.0M134.0 745.0l2.4 1.4M309.9 188.2l2.4 -0.7M220.6 718.2l1.8 -1.1M305.7 579.1l0.8 0.2M590.0 194.1l1.2 0.0M121.2 280.8l1.2 0.0M106.4 351.2l0.8 0.0M349.5 493.7l2.4 0.0M176.6 153.8l1.2 0.0M175.9 423.6l0.8 0.0M486.6 245.7l0.8 0.5M811.0 28.4l0.8 -0.5M169.9 124.9l0.8 0.0M300.7 703.8l0.4 0.0M735.3 411.2l2.4 0.0M239.7 432.0l2.4 0.7M602.2 477.2l0.4 0.0M607.1 370.4l1.2 -0.7M304.2 664.5l1.8 1.1M13.7 601.7l1.8 0.5M195.0 315.0l0.8 0.0M687.1 627.2l0.8 0.5M225.4 491.8l0.4 0.0M708.6 348.5l0.8 -0.2M83.6 420.3l1.2 0.4M413.5 85.9l1.8 -0.5M563.8 479.2l1.8 0.0M336.7 291.1l0.4 0.0M119.5 533.9l1.8 0.0M476.4 274.9l1.2 0.7M610.4 88.7l1.8 0.0M150.7 389.6l1.2 0.0M45.6 363.8l1.2 -0.4M777.5 319.3l0.8 0.5M675.3 165.1l0.4 0.2M405.1 577.3l0.8 0.0M547.8 747.9l1.2 0.0M1.5 424.0l2.4 0.7M414.2 599.7l0.8 -0.2M134.9 491.8l0.4 0.2M16.1 258.8l0.4 0.2M651.7 105.4l0.4 0.2M786.2 197.9l1.2 -0.7M217.6 84.6l1.8 1.1M292.0 467.6l1.8 0.0M338.3 471.2l2.4 0.7M95.4 363.9l0.8 -0.2M713.5 711.3l0.8 -0.2M720.5 478.3l0.8 -0.5M701.4 169.1l1.2 0.4M320.3 459.8l0.8 0.0M692.5 520.9l0.8 0.0M148.0 507.7l1.2 0.0M570.8 659.3l2.4 -1.4M157.9 415.5l1.2 0.0M35.3 252.4l0.8 0.5M688.2 160.1l1.8 0.0M570.6 600.4l1.2 0.0M351.8 197.9l1.2 0.0M451.2 609.0l0.8 -0.2M518.0 715.9l0.4 -0.1M607.8 311.0l0.8 0.0M727.7 525.8l1.2 0.0M59.7 514.7l0.4 -0.2M611.1 225.0l1.2 0.0M288.6 523.6l0.8 0.5M405.0 297.9l2.4 -0.7M434.4 164.1l0.4 0.0M229.8 420.7l0.4 0.2M645.3 613.6l1.2 0.4M25.3 705.0l1.8 0.0M402.5 97.8l0.4 0.2M449.2 274.2l2.4 1.4M33.6 564.4l1.8 -1.1M404.1 722.2l0.8 -0.2M696.3 434.2l1.8 0.0M639.3 715.2l0.8 0.0M393.4 138.4l0.4 0.0M612.7 157.2l0.4 0.2M112.7 616.2l2.4 1.4M86.6 679.1l0.8 -0.2M627.1 533.5l0.4 0.0M740.2 586.1l1.2 -0.4M491.3 219.6l1.2 0.0M359.6 250.8l0.4 0.0M503.5 462.5l0.4 -0.2M87.1 517.1l0.4 0.2M618.5 76.3l1.2 -0.7M484.8 668.0l1.2 0.0M493.3 445.4l2.4 0.7M251.6 642.5l1.2 0.0M734.0 29.4l1.2 0.0M665.3 516.5l1.8 0.0M475.5 293.5l0.4 0.0M282.7 553.8l2.4 0.0M183.2 420.3l1.2 0.0M400.2 402.9l1.2 0.7M96.6 340.0l0.8 -0.2M440.0 637.2l1.2 0.0M758.5 615.1l1.2 0.0M737.4 413.1l2.4 -1.4M258.6 477.3l2.4 0.0M727.9 290.1l0.8 0.2M144.8 207.0l0.4 0.2M797.9 443.4l1.8 0.5M778.0 153.6l0.4 0.1M427.2 134.4l0.4 0.1M672.6 458.8l2.4 0.7M670.5 250.7l0.4 0.0M765.6 173.5l2.4 0.0M185.8 579.2l0.4 0.0M781.3 150.7l0.4 0.2M12.6 271.3l2.4 1.4M516.0 151.4l0.4 0.0M327.2 553.5l1.2 -0.7M506.0 329.9l0.4 0.0M150.0 297.5l1.2 0.0M170.0 730.0l1.2 0.0M266.8 214.4l2.4 -0.7M212.2 678.2l0.8 -0.2M743.8 724.3l0.8 -0.2M101.1 573.9l2.4 -0.7M89.9 116.5l1.8 0.5M214.2 308.1l2.4 0.7M362.5 23.9l0.4 0.0M8.0 375.1l0.4 0.1M620.5 318.0l0.4 -0.2M723.2 23.8l2.4 0.7M582.3 124.2l2.4 1.4M200.4 524.0l0.4 0.0M704.3 381.4l1.2 -0.7M204.7 216.3l1.8 0.5M451.1 638.9l1.2 0.0M415.7 63.1l1.8 1.1M762.8 728.4l2.4 0.0M809.6 539.2l1.2 -0.7M643.9 236.1l1.8 -1.1M557.4 213.0l0.8 -0.2M452.9 457.4l0.4 -0.1M340.1 283.1l1.2 0.4M371.4 608.4l0.4 0.0M116.0 423.4l2.4 0.7M78.9 679.5l2.4 0.0M800.8 433.7l1.2 0.7M729.6 424.4l1.2 0.0M134.2 507.7l0.8 0.0M814.5 427.4l0.8 0.0M565.3 424.6l0.8 0.0M445.4 503.2l0.8 0.0M127.6 385.4l1.8 0.5M179.3 286.2l1.2 0.0M388.5 183.2l1.2 0.0M253.0 173.3l2.4 1.4M250.9 327.2l1.8 -0.5M117.8 179.8l1.2 0.4M84.8 489.3l0.8 0.0M417.5 548.2l1.8 1.1M605.7 614.1l1.8 0.0M174.2 54.3l1.2 0.7M728.6 380.3l0.4 -0.2M360.8 156.8l0.8 -0.5M194.2 476.2l1.8 0.0M347.6 748.7l1.2 0.0M564.3 315.3l0.8 -0.2M443.9 692.4l0.8 0.5M792.7 229.8l0.8 -0.2M223.0 777.6l1.2 -0.7M394.3 647.2l2.4 0.0M617.3 586.4l2.4 0.0M414.9 718.1l1.2 -0.7M247.5 567.4l1.8 1.1M399.1 405.1l2.4 -1.4M578.6 309.0l1.2 0.0M579.4 646.5l0.8 0.2M382.0 216.4l1.2 0.7M443.4 219.7l0.8 -0.5M483.5 610.4l1.2 0.0M65.8 466.4l2.4 0.0M352.2 227.5l1.2 0.0M583.2 438.8l0.8 0.0M229.2 530.9l1.8 -0.5M126.6 218.7l0.4 0.0M155.4 315.4l1.8 -0.5M465.6 775.4l1.2 0.0M469.8 402.8l0.8 0.5M226.3 702.2l2.4 0.7M263.8 249.0l1.2 0.0M210.7 245.1l0.8 0.0M573.6 578.6l0.4 0.0M764.0 470.5l1.2 0.0M733.0 326.9l1.8 1.1M324.4 542.4l2.4 1.4M616.7 154.6l2.4 -1.4M205.2 532.8l0.8 0.0M444.0 185.7l1.2 0.0M20.2 586.6l0.8 0.0M619.1 289.6l0.4 -0.1M695.6 392.3l1.2 0.0M277.9 58.0l2.4 -0.7M80.8 357.6l0.8 0.0M54.3 178.2l0.4 -0.1M605.0 562.9l0.4 0.0M65.5 765.7l0.4 -0.1M153.7 521.9l0.8 0.5M396.3 433.8l2.4 0.0M244.1 686.5l0.8 0.0M558.0 362.2l2.4 -0.7M165.5 541.7l0.4 0.2M685.6 283.1l0.8 0.0M161.9 402.1l0.8 0.0M350.1 175.4l0.8 0.0M481.4 741.1l2.4 0.0M571.6 674.0l1.2 0.0M145.7 717.7l0.8 -0.2M99.8 296.7l1.8 0.5M473.1 333.8l1.8 -1.1M590.9 628.4l1.8 0.0M336.3 165.5l0.8 -0.2M815.2 468.0l1.8 0.5M437.7 395.9l1.2 0.4M34.6 460.1l1.8 0.0M690.9 304.9l2.4 0.0M406.4 449.3l2.4 0.7M132.2 596.6l1.2 0.0M45.1 268.0l1.2 0.0M223.5 81.7l1.2 0.7M728.0 326.4l0.8 0.5M778.8 491.9l1.8 -1.1M208.5 638.5l0.8 0.0M554.0 680.7l1.8 0.0M13.4 49.5l0.8 0.2M349.3 113.5l2.4 -1.4M698.8 228.6l1.8 0.0M202.5 469.6l1.8 -0.5M694.1 534.0l2.4 1.4M16.9 148.4l0.4 -0.2M809.1 266.7l2.4 0.7M653.5 208.3l1.2 -0.4M476.4 399.5l1.2 -0.7M729.0 261.7l1.8 0.0M643.6 513.6l1.8 -0.5M786.0 109.7l0.4 0.0M376.3 110.4l0.4 0.1M519.6 434.3l0.8 -0.5M763.4 457.6l2.4 0.0M29.3 174.8l1.8 1.1M319.7 599.1l0.8 0.0M169.3 419.1l1.2 0.0M278.9 587.6l0.8 0.2M32.5 759.9l1.2 0.0M29.6 474.0l2.4 -1.4M380.8 613.9l1.8 0.0M546.4 153.0l2.4 -1.4M728.0 601.4l1.2 -0.7M52.9 411.8l0.4 0.0M373.8 669.4l1.2 0.0M174.1 445.6l2.4 0.0M738.3 152.2l1.8 0.0M366.3 308.0l0.8 0.0M313.9 434.1l0.8 0.0M262.6 421.9l0.8 0.2M459.1 716.5l1.2 0.0M95.5 381.9l2.4 0.0M467.9 476.0l0.4 0.2M41.2 420.9l2.4 0.0M455.5 196.0l1.2 0.0M586.7 323.2l2.4 0.7M187.4 499.4l1.8 0.0M3.3 594.6l0.8 -0.2M574.0 376.3l1.2 0.0M575.2 339.9l1.2 0.4M96.4 481.6l1.2 -0.7M321.8 112.9l1.2 0.0M720.9 348.6l0.4 0.2M762.7 238.4l1.8 -1.1M11.1 363.3l0.8 -0.2M180.7 589.8l2.4 0.0M492.8 545.0l1.2 0.7M88.6 445.4l0.8 -0.2M792.2 189.9l1.2 0.0M157.4 460.1l1.2 0.0M811.9 490.8l0.4 0.0M254.0 106.9l2.4 0.0M258.8 532.7l1.8 0.0M669.9 537.5l1.2 0.0M24.1 744.2l2.4 0.0M190.9 350.0l1.8 1.1M507.2 407.6l1.2 0.4M595.0 372.7l2.4 0.0M363.1 145.3l1.2 0.7M18.6 500.1l2.4 0.0M706.1 290.1l0.4 0.0M12.3 325.0l1.2 0.4M644.9 269.5l0.8 0.0M567.4 650.3l0.4 -0.2M537.6 777.7l2.4 0.7M105.0 383.4l0.8 -0.2M652.4 496.3l1.2 0.7M10.6 187.9l0.8 -0.2M75.5 63.1l0.4 0.2M92.3 410.1l0.8 -0.5M582.1 447.2l2.4 0.0M624.4 715.1l2.4 0.0M11.1 601.0l1.8 1.1M488.6 92.2l2.4 0.7M749.6 452.4l0.4 0.1M724.4 616.1l0.8 0.0M200.5 466.0l1.8 0.0M95.6 225.0l1.2 -0.4M94.4 468.2l1.8 1.1M44.8 247.7l2.4 0.0M348.1 454.4l0.4 -0.2M501.2 486.1l0.8 0.2M463.7 731.0l2.4 -1.4M425.9 591.0l1.8 0.0M577.7 304.9l2.4 -1.4M599.8 466.2l2.4 0.7M781.4 187.2l0.8 0.0M531.1 425.3l2.4 0.7M556.9 523.4l2.4 0.0M514.7 725.4l1.2 0.0M649.2 120.3l1.8 0.0M371.1 547.3l2.4 -0.7M486.3 193.7l0.8 0.2M432.8 244.4l1.2 -0.7M185.0 213.4l0.8 0.2M797.8 579.8l1.2 0.0M89.8 762.5l0.4 0.0M710.2 440.5l1.2 0.4M613.1 374.1l2.4 1.4M721.5 275.2l2.4 1.4M604.4 557.0l0.8 0.0M261.4 529.3l0.4 0.0M245.0 262.7l0.4 0.0M410.7 407.3l0.8 0.0M566.8 179.4l0.4 0.0M661.1 174.5l0.4 0.0M123.7 177.0l0.8 0.5M322.3 593.5l0.4 0.1M143.5 161.4l1.8 1.1M326.4 562.1l1.8 1.1M167.3 261.0l1.2 -0.7M316.3 579.7l0.4 -0.1M502.8 517.1l0.8 0.0M262.4 159.8l0.8 0.0M372.7 61.8l0.8 -0.2M539.9 205.4l1.2 0.7M119.1 411.4l0.4 -0.1M135.6 83.5l1.2 0.0M744.4 708.1l2.4 -0.7M528.7 274.4l1.8 0.0M447.9 341.6l1.8 0.0M696.2 772.7l1.2 0.4M61.7 191.0l1.8 1.1M625.0 579.1l1.8 0.0M417.9 397.8l0.4 0.0M628.8 345.4l2.4 -0.7M632.5 573.7l2.4 0.0M361.7 745.4l2.4 0.0M806.3 135.0l2.4 -1.4M263.4 118.3l0.8 0.0M451.8 390.2l1.2 0.0M98.5 225.0l1.2 0.4M576.1 690.2l1.8 -0.5M275.9 350.6l0.4 0.2M771.7 520.5l2.4 0.0M760.7 572.2l0.8 0.0M201.4 62.0l2.4 0.7M285.4 439.3l1.2 0.0M443.1 325.2l2.4 0.0M118.6 582.8l0.4 0.1M254.1 334.4l1.8 0.0M552.5 404.8l1.8 0.0M693.2 63.0l1.8 0.5M345.1 500.6l0.4 0.2M563.0 244.9l0.4 0.1M750.4 133.9l0.4 0.0M539.0 427.4l2.4 1.4M755.9 194.1l2.4 0.0M661.1 212.2l1.8 1.1M595.1 563.9l1.2 0.4M458.1 773.0l0.4 0.2M735.8 432.3l0.4 0.0M293.1 281.4l1.2 0.7M307.8 210.7l0.8 0.2M186.7 356.7l1.2 -0.4M601.6 655.5l1.2 0.7M474.4 261.1l2.4 -1.4M434.3 137.9l0.4 -0.2M191.8 590.7l2.4 -0.7M762.3 345.5l0.8 0.0M388.0 250.8l1.8 -1.1M639.3 267.5l1.2 -0.4M247.3 428.4l1.8 1.1M95.0 754.6l2.4 0.0M382.4 650.7l1.2 0.7M412.2 351.4l0.4 0.2M278.4 181.2l2.4 -1.4M773.7 777.0l2.4 0.0M433.1 428.1l1.8 0.0M356.7 175.1l2.4 -0.7M346.3 636.1l2.4 -1.4M67.9 427.6l0.8 -0.2M210.4 564.8l1.2 0.4M159.6 326.5l2.4 -1.4M479.1 225.3l1.2 0.7M398.5 46.9l2.4 0.0M212.9 38.2l1.2 0.0M777.2 116.7l1.8 1.1M249.7 380.0l1.8 -0.5M763.1 472.2l2.4 1.4M172.2 389.4l0.4 -0.2M88.9 360.8l0.4 0.0M807.4 616.4l1.8 0.5M480.2 49.4l0.4 0.0M190.7 488.1l0.4 0.0M653.7 467.1l0.4 0.2M594.0 611.3l2.4 1.4M672.3 561.4l2.4 0.0M814.0 602.0l1.2 -0.4M711.7 438.3l2.4 0.7M155.5 349.7l2.4 -1.4M300.6 574.2l0.4 -0.2M513.8 162.9l2.4 0.0M203.4 78.3l0.4 0.0M115.5 536.7l0.4 0.2M14.6 37.3l0.4 0.0M408.1 81.8l0.4 0.0M779.6 154.4l2.4 0.0M34.2 297.5l0.4 0.0M622.9 564.2l2.4 0.0M623.0 542.3l1.8 -0.5M796.2 324.8l0.4 0.0M446.8 434.8l0.8 0.0M313.5 474.4l1.8 0.0M52.2 775.4l0.8 0.0M577.7 540.6l0.4 0.0M690.9 574.1l0.4 0.2M51.0 606.1l2.4 0.0M153.4 403.2l0.8 -0.2M483.3 224.7l0.8 0.0M477.2 345.1l0.4 -0.1M331.2 654.2l0.8 0.0M21.6 554.7l1.8 -0.5M747.3 376.7l0.4 0.0M154.9 313.5l0.8 0.0M246.2 253.0l0.4 0.0M520.5 262.5l0.4 0.1M504.7 510.8l1.8 -1.1M682.6 363.4l0.8 -0.2M148.2 497.9l1.8 0.0M533.3 340.7l2.4 0.0M32.6 334.8l1.8 -0.5M354.0 376.9l0.8 0.2M391.5 566.4l1.2 -0.7M590.6 686.2l2.4 0.7M331.0 47.7l1.8 0.5M211.9 535.7l1.8 0.0M250.7 126.3l1.8 -0.5M687.4 347.7l0.4 0.1M384.0 226.1l2.4 0.0M488.0 768.9l1.8 0.0M644.7 202.3l0.4 0.0M132.7 253.6l1.8 0.0M175.3 246.7l0.8 -0.5M76.0 227.8l1.8 0.0M536.1 242.4l2.4 0.0M488.3 312.6l0.8 0.5M766.3 52.4l1.2 0.0M470.1 649.8l0.4 -0.1M322.3 767.7l2.4 -1.4M488.5 667.0l0.8 0.5M692.6 174.9l1.8 0.0M390.2 148.9l0.8 0.0M759.1 462.3l1.8 -0.5M441.1 228.5l0.8 0.0M806.3 410.4l0.8 0.0M806.5 672.6l0.8 -0.2M298.5 625.1l1.2 0.4M734.5 250.1l0.4 0.0M519.0 172.5l0.4 0.2M639.1 611.7l1.8 -1.1M583.0 567.9l2.4 0.0M222.2 125.9l2.4 -1.4M783.8 595.0l0.4 -0.1M619.2 594.3l0.8 0.5M211.1 555.8l0.4 0.2M156.4 442.9l1.2 0.7M306.7 512.3l0.8 0.2M338.7 462.1l0.4 0.0M759.9 28.4l1.2 -0.4M766.3 239.5l0.4 0.1M564.5 309.1l1.8 1.1M395.6 694.5l2.4 0.7M74.4 420.2l1.8 0.0M242.2 591.8l2.4 0.0M757.9 187.3l2.4 0.0M804.7 198.5l0.8 -0.5M267.9 200.0l0.8 0.2M208.9 402.3l1.8 -1.1M669.1 266.3l1.2 0.7M714.8 520.1l0.8 0.0M389.2 305.5l0.8 0.2M748.1 666.7l1.8 0.0M370.8 152.1l0.4 -0.2M594.4 434.2l0.4 0.1M785.4 460.0l0.8 0.0M26.0 557.2l0.8 -0.5M28.8 458.1l1.2 0.0M282.2 680.8l0.4 -0.1M571.4 568.9l2.4 0.0M779.1 383.1l0.8 0.0M263.0 67.2l2.4 -0.7M94.6 546.5l0.4 0.1M206.8 466.2l0.4 0.1M269.3 636.3l1.8 1.1M137.3 591.4l0.4 0.0M342.4 437.7l0.8 0.0M14.1 111.3l1.8 0.5M558.7 530.9l1.2 0.4M223.9 305.6l0.4 -0.1M502.8 692.5l2.4 1.4M498.8 164.6l0.4 0.1M644.1 479.4l2.4 1.4M145.1 301.6l1.8 -0.5M526.3 381.4l0.8 0.0M375.5 473.2l2.4 -1.4M260.0 568.3l0.4 0.1M695.2 711.2l0.8 -0.5M605.2 422.7l2.4 0.7M569.9 514.1l1.2 -0.7M279.5 31.8l1.8 0.0M239.0 179.3l1.8 -0.5M123.3 269.2l0.4 0.1M156.4 422.3l1.2 0.0M337.9 244.4l0.4 0.2M242.4 356.8l0.8 0.0M194.4 264.9l0.4 0.2M86.3 265.3l1.2 -0.7M702.5 477.3l1.8 -1.1M395.5 480.3l0.4 0.0M199.0 204.7l0.8 -0.5M733.4 192.6l0.8 0.2M421.6 470.1l1.2 -0.4M366.7 331.1l0.4 0.1M114.4 255.9l0.8 0.0M183.2 759.1l0.4 0.2M154.0 464.7l2.4 -0.7M658.8 768.2l1.2 0.4M128.3 461.0l1.2 -0.7M196.5 592.4l2.4 -1.4M265.4 492.3l1.8 -1.1M641.2 358.7l1.8 0.0M750.0 755.1l1.2 0.0M150.3 473.8l2.4 0.0M70.8 673.0l2.4 1.4M402.8 293.3l0.8 -0.5M368.3 238.7l1.8 0.0M155.4 780.8l1.8 0.0M714.4 740.0l1.2 0.7M514.6 604.0l1.2 0.0M650.2 256.2l2.4 0.7M504.2 225.8l1.2 0.0M722.3 651.4l2.4 0.7M547.4 315.2l2.4 0.7M22.5 319.3l0.8 0.0M296.0 136.6l2.4 0.0M28.0 457.5l1.8 0.0M168.7 241.9l1.2 0.7M676.7 275.4l0.8 0.0M357.5 432.7l0.8 0.5M165.5 485.3l0.8 0.0M409.3 473.6l0.4 0.0M53.5 160.0l1.2 0.0M747.7 158.2l0.4 0.0M783.1 238.7l1.2 0.7M386.5 259.7l1.2 0.0M36.8 305.1l2.4 0.7M90.1 464.2l0.4 0.0M105.5 422.4l0.8 0.5M226.8 746.7l0.8 0.0M551.7 715.4l1.2 0.0M662.4 619.4l1.2 0.4M39.7 197.5l1.8 1.1M529.2 489.5l1.2 0.0M558.7 128.8l0.4 0.0M76.1 528.8l1.8 0.5M441.2 394.1l0.8 -0.5M811.8 597.7l1.2 0.0M320.9 163.6l1.2 -0.4M74.4 554.4l0.4 0.0M380.2 291.5l0.4 0.0M106.1 375.2l1.2 0.0M145.8 167.9l2.4 0.0M193.2 732.8l1.8 0.5M120.2 445.3l1.8 -0.5M794.4 573.8l1.8 -1.1M572.5 84.1l1.2 0.0M800.6 153.5l1.8 0.5M331.4 492.6l2.4 0.0M24.9 320.1l1.2 0.7M513.3 326.1l0.4 -0.1M153.1 129.0l0.4 -0.2M43.2 248.3l1.2 -0.7M184.8 318.3l2.4 -1.4M540.8 270.1l1.8 -0.5M455.0 196.3l1.2 0.0M80.5 671.9l1.2 0.0M672.2 351.5l1.8 0.0M607.1 331.0l0.4 -0.1M235.9 453.3l1.2 0.0M99.2 550.8l1.2 0.4M775.1 329.5l1.2 0.4M599.4 273.7l1.2 0.0M30.9 24.9l2.4 0.0M234.6 336.3l1.8 0.0M27.6 552.5l1.8 0.0M499.6 473.9l2.4 0.7M173.2 325.0l1.2 0.4M342.8 459.9l0.8 -0.2M254.7 173.9l1.2 0.4M613.1 153.7l0.4 0.0M716.8 270.9l1.8 0.0M306.6 557.3l1.2 0.0M73.9 46.2l1.8 1.1M209.9 765.9l0.8 0.0M617.0 473.5l0.8 -0.2M634.8 756.5l0.4 0.1M329.2 760.3l1.8 0.0M749.5 481.4l0.4 0.0M66.0 266.9l1.2 0.0M322.4 579.9l0.8 0.0M88.6 236.3l1.8 -0.5M460.0 764.4l1.2 0.0M429.9 412.8l0.8 0.0M170.7 397.1l0.4 0.0M761.8 60.6l0.8 0.2M240.2 703.6l1.8 1.1M577.1 319.8l2.4 0.0M572.4 310.5l0.8 0.2M377.4 572.5l0.4 0.0M436.5 560.1l0.4 0.2M718.3 139.2l0.8 0.0M68.8 342.2l2.4 -1.4M380.4 496.2l1.8 -1.1M386.0 503.5l0.8 0.2M459.2 638.6l1.8 0.0M349.6 83.3l1.8 0.0M283.6 132.6l1.2 0.4M475.0 175.6l0.4 -0.1M700.1 654.8l0.8 0.2M700.8 746.2l0.4 0.0M318.6 53.7l1.8 0.0M212.0 364.9l1.8 0.0M591.2 515.9l0.4 -0.2M316.2 530.9l1.2 0.0M21.8 232.4l2.4 0.7M726.6 463.8l0.4 -0.1M668.8 75.9l0.8 0.0M774.4 195.3l0.8 0.0M628.9 682.3l0.8 -0.5M161.0 313.2l1.8 1.1M162.6 721.1l1.2 -0.4M185.8 237.2l1.8 0.0M535.0 611.1l0.4 0.0M160.6 310.3l0.8 0.2M318.9 552.1l1.2 0.4M468.9 695.1l0.8 0.2M539.7 536.5l0.4 -0.1M297.9 155.9l1.2 0.4M379.4 564.7l2.4 -1.4M269.4 190.2l2.4 1.4M148.4 207.5l1.2 0.0M661.6 543.3l0.8 0.0M343.7 701.1l0.8 0.0M771.2 66.3l1.2 0.0M779.8 45.8l2.4 -0.7M338.3 463.8l2.4 -1.4M544.8 198.3l2.4 -0.7M248.5 183.9l0.8 0.0M135.4 269.4l1.8 0.0M712.2 588.0l0.4 0.0M813.5 229.9l0.4 0.0M185.1 576.4l2.4 -0.7M72.6 219.2l0.4 0.0M730.9 641.3l1.8 -0.5M261.3 600.3l1.2 -0.4M583.8 221.1l2.4 0.0M84.4 339.9l0.8 0.0M802.0 372.0l1.8 0.0M634.6 206.6l1.2 -0.7M175.4 503.8l1.8 0.0M351.4 726.3l2.4 0.7M75.4 458.7l1.8 0.0M67.4 184.6l2.4 -0.7M438.9 368.6l1.8 0.5M48.4 242.7l1.2 0.7M501.4 389.6l1.8 1.1M354.6 236.4l0.8 0.0M346.5 512.8l0.8 0.2M78.7 489.6l2.4 0.0M772.9 159.6l1.8 -0.5M815.7 113.7l2.4 0.7M523.0 252.7l0.8 0.0M638.4 572.9l1.8 -0.5M155.1 521.8l0.8 0.0M790.3 475.9l2.4 0.0M505.6 518.9l2.4 0.0M233.7 183.3l2.4 0.0M759.3 683.7l1.2 0.0M480.4 57.5l1.2 0.0M670.7 312.1l1.8 -0.5M676.4 732.3l0.4 0.1M713.6 150.1l1.2 0.0M203.8 534.5l1.8 -0.5M799.3 171.4l1.8 0.5M6.8 478.2l0.4 0.0M293.5 229.4l0.8 -0.2M105.0 657.5l0.8 0.0M106.4 578.1l0.4 -0.2M286.0 363.9l2.4 -0.7M800.0 253.1l1.2 -0.7M217.9 479.5l1.8 -0.5M102.7 395.7l2.4 -0.7M704.8 391.1l1.8 -1.1M569.0 175.2l2.4 -0.7M807.5 210.1l1.8 -0.5M46.4 431.9l0.4 0.1M673.3 35.7l1.2 0.7M779.8 271.5l0.8 0.0M547.3 206.8l1.2 0.4M37.7 90.6l1.2 0.0M778.6 607.0l0.4 0.0M634.0 306.2l2.4 -0.7M59.2 206.8l0.8 -0.2M355.1 342.1l1.2 -0.7M517.1 542.6l1.8 -1.1M781.2 377.3l1.2 -0.4M20.5 314.0l1.8 0.5M529.7 284.3l1.8 -1.1M245.7 735.7l0.4 0.2M43.6 236.9l1.2 0.0M372.0 214.4l0.4 0.1M125.1 369.1l0.4 -0.2M648.3 338.5l1.2 0.0M206.0 262.0l2.4 0.0M584.5 348.5l1.8 -0.5M329.6 329.4l0.4 -0.1M678.4 146.5l1.2 0.0M125.3 551.3l0.8 0.2M297.7 355.1l2.4 -0.7M542.6 623.5l2.4 0.7M349.0 398.7l1.2 -0.7M681.4 436.8l0.8 -0.5M654.3 444.2l1.8 0.5M639.6 347.4l1.8 0.5M255.7 423.6l0.4 0.0M759.1 632.7l2.4 -0.7M211.5 114.3l1.2 -0.7M135.9 422.8l2.4 -0.7M708.7 125.8l2.4 0.0M329.0 153.6l0.4 0.0M251.7 595.9l2.4 1.4M78.7 416.1l0.4 0.2M198.8 251.7l1.8 0.0M79.2 347.2l0.8 0.5M274.6 283.4l0.4 0.0M729.6 329.6l1.2 0.0M470.8 232.3l1.8 -0.5M808.4 327.2l1.8 -0.5M141.9 441.5l0.4 0.0M166.5 588.3l1.8 -0.5M653.7 51.2l1.8 0.5M209.1 343.6l2.4 0.0M535.1 203.5l0.8 0.5M279.5 418.4l1.8 0.0M636.9 218.4l0.8 0.0M219.0 231.4l0.4 0.0M268.0 178.9l2.4 -1.4M330.8 279.6l0.4 -0.1M272.1 168.6l0.8 0.5M382.8 560.4l0.4 0.0M320.4 433.2l1.8 0.0M588.5 236.2l0.4 0.2M378.1 120.0l0.8 0.0M363.7 125.8l0.8 0.5M363.0 480.5l0.8 0.2M692.8 304.2l0.4 0.2M351.9 494.3l1.2 0.7M595.1 258.3l0.4 0.1M331.5 755.1l0.4 -0.1M316.9 200.2l0.8 0.2M687.9 685.7l0.8 -0.2M771.9 134.2l0.8 0.5M523.3 77.2l1.8 0.0M736.2 313.4l2.4 -0.7M364.3 600.0l1.2 -0.4M419.9 196.6l1.2 0.0M91.1 220.3l1.2 -0.4M794.9 509.1l0.4 -0.1M706.7 598.2l2.4 0.0M785.9 427.2l0.8 0.0M811.9 578.7l0.8 -0.2M183.0 183.9l0.8 0.0M448.4 133.9l2.4 -1.4M813.5 143.9l1.2 0.0M183.8 283.0l2.4 -0.7M454.8 287.3l1.2 0.0M764.1 512.9l2.4 0.0M276.6 734.9l2.4 1.4M504.4 411.8l1.2 0.7M252.7 351.5l0.4 0.2M806.9 34.4l1.8 0.5M758.6 740.8l0.4 0.0M106.9 250.8l0.4 -0.2M635.4 244.5l2.4 -1.4M608.6 599.7l1.8 0.0M704.1 191.3l1.2 0.0M599.5 261.3l0.8 -0.2M444.9 406.7l0.8 -0.2M651.6 348.4l1.2 0.0M631.8 601.9l0.8 0.2M591.2 212.5l2.4 0.7M30.8 493.8l0.8 -0.5M360.5 192.8l1.8 0.0M174.7 129.8l1.2 -0.7M500.3 520.7l1.8 0.0M595.5 177.7l0.8 -0.5M635.6 588.0l0.8 0.0M367.2 262.8l1.2 0.0M311.9 717.7l0.4 -0.1M316.8 195.6l1.2 -0.4M70.2 498.9l1.8 0.0M164.3 265.2l1.2 0.7M102.9 472.1l0.8 0.2M177.5 296.0l0.8 0.2M651.6 499.9l2.4 0.0M739.1 531.1l0.4 0.0M591.1 378.6l0.4 -0.2M209.0 173.3l2.4 0.0M641.7 160.3l1.2 -0.7M361.1 170.7l2.4 -1.4M782.7 305.3l1.8 -1.1M438.9 455.6l0.8 -0.2M501.9 188.8l0.4 0.1M317.7 586.7l1.8 -0.5M393.2 371.7l0.8 -0.5M33.9 337.2l1.2 0.0M213.8 332.1l2.4 0.0M423.3 564.8l1.2 0.4M330.9 552.7l1.2 0.0M467.5 479.6l1.2 0.7M60.1 455.3l0.8 0.2M4.3 753.3l0.4 0.0M94.4 608.9l0.4 0.2M180.0 567.3l1.2 0.0M358.6 456.5l0.8 0.0M414.2 532.0l0.4 0.1M191.5 36.1l0.8 0.2M415.3 460.8l0.4 0.0M515.9 571.9l2.4 0.0M292.7 410.3l1.8 0.0M602.1 590.7l1.8 0.0M120.3 153.9l1.2 0.4M121.3 428.3l0.8 -0.5M344.4 410.0l2.4 1.4M522.7 468.7l2.4 0.0M232.4 58.3l0.4 0.0M579.4 290.2l0.4 0.1M720.7 521.4l0.4 0.0M280.3 477.4l0.8 0.5M538.5 356.9l1.8 0.0M264.1 774.7l2.4 -1.4M147.5 436.9l1.8 0.5M406.5 186.2l0.8 0.0M35.9 699.7l0.8 0.0M47.1 666.1l1.8 0.5M287.3 73.6l2.4 -0.7M340.8 444.4l2.4 0.0M465.3 265.2l1.2 -0.4M76.8 221.1l1.8 0.5M570.8 401.7l2.4 0.7M333.7 280.7l1.8 -1.1M106.6 112.3l0.8 0.0M203.1 646.6l1.8 0.0M293.2 220.0l1.2 -0.7M521.5 409.1l0.4 0.0M359.8 555.0l1.2 0.0M14.9 412.0l1.8 0.0M444.1 598.1l2.4 -0.7M156.5 608.3l2.4 0.0M586.0 479.8l2.4 -1.4M312.6 525.9l2.4 0.0M342.1 761.6l0.8 0.0M214.2 478.1l1.8 0.0M69.6 320.1l1.8 0.5M330.6 127.9l0.4 0.0M134.9 676.5l1.8 0.5M408.4 681.7l0.8 0.0M393.7 606.6l1.2 -0.7M103.2 535.0l2.4 1.4M741.5 303.9l2.4 0.7M187.1 722.0l2.4 0.0M773.3 724.0l1.8 -1.1M361.9 161.3l1.2 -0.7M274.8 254.6l0.8 -0.2M672.7 670.5l1.2 -0.7M416.9 686.2l1.2 0.0M610.9 672.2l0.8 -0.5M515.1 453.8l1.8 0.0M481.9 692.4l1.8 0.0M534.5 49.5l1.2 0.0M163.6 391.2l1.8 -0.5M399.0 567.5l0.8 0.0M650.1 269.0l1.8 0.5M604.2 574.8l0.4 0.1M320.8 272.3l0.8 0.5M573.4 382.4l2.4 1.4M459.7 777.7l0.8 0.0M170.4 259.6l0.8 0.5M511.7 453.6l0.4 -0.2M407.4 603.0l2.4 1.4M432.8 384.4l1.2 -0.7M253.8 274.2l2.4 -1.4M363.7 437.3l2.4 -0.7M809.7 262.3l2.4 -0.7M57.2 668.5l2.4 -0.7M62.1 634.0l1.2 0.4M472.9 337.6l2.4 -0.7M531.6 23.6l1.2 0.0M606.0 268.6l0.4 0.2M130.7 273.4l1.2 0.7M776.2 371.3l0.4 -0.1M211.6 550.0l2.4 0.0M125.9 694.9l1.2 0.0M348.4 114.1l0.8 -0.2M257.5 506.1l1.2 0.0M297.0 610.4l1.2 -0.4M406.7 499.6l2.4 -0.7M795.1 286.6l0.8 0.5M332.7 703.3l0.4 0.0M150.9 533.0l1.2 0.7M127.9 124.0l0.8 -0.5M570.2 436.6l2.4 0.0M682.8 398.9l1.8 0.5M249.4 644.9l2.4 0.7M439.6 243.9l2.4 0.7M39.5 570.3l0.8 0.2M401.9 477.6l0.4 0.1M778.9 235.4l1.8 0.5M720.5 112.5l2.4 0.0M217.3 488.3l0.4 -0.2M244.4 224.7l0.8 -0.5M362.7 509.1l0.4 0.0M95.9 94.7l1.8 0.5M297.6 675.4l1.8 0.0M498.6 272.9l1.8 -1.1M60.2 419.7l1.2 -0.7M647.0 430.6l0.8 0.0M754.0 93.9l2.4 1.4M508.3 190.7l0.4 0.0M807.5 338.4l0.8 0.0M212.5 396.6l1.8 0.0M249.8 457.7l2.4 0.7M394.6 102.2l2.4 0.0M720.5 476.4l1.2 0.4M364.9 636.7l2.4 -1.4M526.0 86.2l1.8 0.0M648.4 400.7l0.4 0.0M425.5 704.2l0.4 0.0M806.8 742.0l0.4 -0.2M583.1 496.1l0.4 -0.1M554.9 602.9l1.2 0.0M128.6 229.9l0.8 -0.5M455.2 229.4l1.2 0.0M395.3 442.9l0.8 0.2M734.7 68.0l1.8 1.1M772.4 446.4l0.8 -0.2M127.3 545.4l0.8 0.2M26.8 45.6l0.8 0.0M258.2 637.5l0.8 0.0M433.4 719.7l0.8 0.0M534.3 516.5l0.4 0.0M354.2 664.3l1.2 0.0M166.6 322.0l0.8 0.0M734.0 467.0l0.8 0.5M677.3 487.7l2.4 0.0M106.7 91.1l1.8 0.0M141.6 203.9l0.4 -0.1M430.3 92.2l1.8 0.5M354.7 495.8l2.4 0.0M800.3 661.3l1.2 0.4M46.0 536.0l0.8 -0.2M575.7 517.2l0.8 0.0M665.2 255.9l1.2 0.0M211.1 654.0l2.4 -1.4M97.0 444.1l0.8 0.0M549.0 292.9l0.8 -0.2M161.4 42.1l0.4 0.0M306.6 494.4l1.2 -0.7M201.9 715.6l1.8 1.1M376.1 625.8l1.2 0.7M256.0 333.2l0.4 0.0M343.3 109.3l1.2 0.0M267.0 187.5l1.2 -0.7M188.2 694.5l2.4 0.7M261.4 745.6l0.8 -0.2M556.2 22.8l1.2 0.0M673.7 259.0l0.8 -0.5M300.0 426.7l0.8 0.0M781.4 161.0l0.8 0.0M47.3 421.1l2.4 0.0M783.4 563.1l0.8 0.2M246.3 567.5l0.8 0.2M128.8 291.3l1.2 -0.4M96.4 649.5l0.8 0.5M288.4 407.9l0.8 0.2M443.1 426.0l1.2 0.0M300.4 145.8l2.4 0.0M507.5 371.1l2.4 0.0M22.5 455.9l0.8 0.5M98.9 314.2l0.4 0.1M645.8 721.3l1.8 -1.1M274.9 611.2l2.4 -0.7M673.4 106.4l0.8 -0.5M430.6 319.4l1.2 0.7M373.8 233.0l1.8 0.5M422.3 52.1l2.4 1.4M446.9 161.3l2.4 0.0M610.7 622.8l2.4 1.4M730.7 587.4l1.8 -0.5M302.0 659.5l1.8 0.0M648.8 550.1l1.2 0.0M225.6 242.1l0.8 0.2M225.4 318.6l1.8 0.0M60.5 563.1l0.4 0.0M331.2 176.3l1.2 -0.4M671.0 764.0l0.4 -0.2M94.3 161.0l2.4 0.7M642.7 664.9l0.8 0.5M812.5 769.5l1.2 0.0M353.6 104.8l0.8 0.5M329.3 256.1l0.8 0.2M34.1 773.7l2.4 0.7M216.9 444.9l1.8 0.5M5.5 520.3l0.8 -0.2M478.2 597.6l1.2 0.7M133.9 260.7l0.8 -0.2M625.7 717.5l0.8 0.5M107.7 607.4l2.4 -1.4M119.7 775.9l2.4 -1.4M183.8 167.9l2.4 0.0M422.3 338.3l0.4 0.2M627.4 266.8l0.8 -0.5M540.3 600.2l0.4 0.2M314.6 525.7l1.2 -0.7M640.7 570.8l0.8 0.0M252.6 212.9l2.4 0.0M103.9 522.6l1.8 -1.1M760.1 696.1l0.8 0.0M90.9 569.6l1.8 0.0M700.3 468.0l0.4 0.0M720.7 608.7l1.2 -0.4M435.8 441.0l1.8 0.0M597.5 586.1l0.4 0.0M407.1 460.7l1.8 0.0M551.5 399.5l1.8 0.0M356.1 728.5l1.2 -0.7M108.2 437.9l0.8 0.0M211.6 310.2l0.8 0.0M780.7 154.3l1.2 -0.4M571.3 467.1l0.8 0.0M393.8 450.3l1.8 -0.5M21.1 597.9l0.4 -0.2M735.2 27.4l1.2 0.0M559.8 496.7l0.8 -0.5M136.3 389.8l0.8 0.0M735.4 434.2l1.8 -0.5M170.3 419.9l1.2 -0.4M65.2 634.9l0.4 0.0M326.0 503.5l1.8 -1.1M421.2 224.5l1.8 1.1M136.4 124.3l2.4 0.7M205.9 172.5l0.4 0.0M443.1 380.1l2.4 0.0M109.9 169.0l1.2 0.0M28.8 281.5l1.2 0.4M267.3 657.9l0.4 0.0M429.3 545.4l1.2 -0.7M314.3 610.5l2.4 1.4M313.3 654.7l1.8 -1.1M388.8 483.4l1.2 0.0M552.1 95.0l2.4 1.4M155.3 232.8l2.4 0.0M564.5 469.8l1.8 1.1M245.2 392.6l1.2 0.7M664.6 554.9l1.8 -1.1M557.2 181.6l1.2 0.7M769.9 667.9l2.4 0.0M580.6 296.9l1.8 0.5M338.1 718.5l1.2 -0.7M583.6 102.0l0.4 -0.1M354.2 169.5l1.8 0.0M548.2 535.0l1.2 -0.4M273.3 340.3l1.2 0.0M689.2 623.9l1.2 -0.4M227.5 599.3l0.4 0.0M767.5 409.0l0.4 0.0M446.6 197.7l0.4 0.2M195.6 478.4l0.8 -0.5M105.9 48.4l0.8 -0.5M173.7 488.2l2.4 0.7M345.7 400.1l0.8 0.0M341.7 472.4l1.8 1.1M44.6 745.2l1.8 -1.1M728.1 35.3l1.2 0.0M694.9 170.9l2.4 -0.7M21.9 378.8l2.4 -0.7M102.9 305.1l1.8 -0.5M732.5 244.1l2.4 0.0M816.0 527.0l2.4 -1.4M368.1 274.8l0.8 0.0M789.3 253.2l0.8 0.2M806.0 430.2l0.8 0.0M747.7 621.7l1.8 0.5M189.9 504.9l1.2 0.7M19.0 758.2l1.8 0.0M28.2 31.8l0.4 0.1M251.5 238.5l1.8 0.0M317.3 189.9l0.4 0.1M20.6 528.1l0.8 0.0M112.7 231.3l1.8 0.0M241.8 504.3l0.4 -0.2M164.0 24.5l1.2 0.0M593.5 758.6l2.4 0.0M598.6 102.6l2.4 0.0M349.2 391.7l1.2 -0.7M641.9 169.4l0.8 0.5M697.2 627.5l0.8 0.0M12.7 728.7l0.4 0.0M92.3 685.0l1.2 0.7M20.2 500.2l1.2 0.4M196.1 392.2l1.2 -0.4M340.5 614.7l0.8 0.2M713.2 233.4l1.8 1.1M312.6 748.9l2.4 0.0M626.9 413.6l1.2 0.0M193.8 519.6l0.4 -0.1M741.6 326.5l1.2 0.7M628.9 160.9l2.4 0.0M737.3 763.2l0.4 0.2M258.8 481.1l2.4 -1.4M495.5 648.1l0.4 0.2M338.7 248.7l1.2 0.0M419.0 575.9l1.2 -0.4M124.7 557.8l0.4 0.0M811.5 663.9l0.4 -0.2M790.0 475.9l1.2 -0.7M93.6 516.2l0.4 -0.2M672.6 170.8l0.8 -0.5M290.6 288.8l1.2 0.4M265.1 75.9l1.8 0.0M500.2 268.9l0.4 -0.2M597.9 533.4l0.4 0.2M173.6 526.7l2.4 0.0M332.0 331.3l0.8 -0.5M163.1 291.3l2.4 0.0M809.9 556.8l2.4 0.0M622.4 501.3l0.4 -0.1M300.0 121.2l1.2 0.0M355.1 139.7l1.2 0.0M115.0 304.1l1.2 0.0M155.1 550.5l1.8 0.0M709.0 771.1l0.8 0.0M192.6 374.2l0.8 0.5M281.2 161.1l0.8 0.0M673.2 530.6l2.4 0.0M723.0 384.5l2.4 0.0M771.4 136.4l2.4 -1.4M135.2 352.7l2.4 1.4M244.6 594.7l2.4 0.0M756.1 81.3l0.4 0.1M145.5 400.3l1.2 0.0M808.9 162.0l2.4 0.0M484.9 676.8l2.4 -1.4M380.6 493.3l1.2 -0.4M242.2 157.7l0.8 0.2M376.3 620.0l0.4 0.1M468.1 238.3l2.4 -1.4M521.8 345.9l0.8 0.2M385.8 239.5l2.4 0.0M480.6 191.8l2.4 0.0M612.1 274.2l0.4 -0.1M792.3 405.6l1.8 -0.5M767.6 773.1l2.4 -1.4M699.5 646.3l0.8 0.2M752.5 503.6l0.4 0.1M679.4 382.0l1.8 0.0M781.7 355.3l0.8 0.0M417.9 768.4l0.4 -0.1M248.7 591.4l0.4 0.2M377.9 387.0l0.8 0.5M107.5 258.3l1.8 0.0M778.9 270.4l0.4 0.0M238.1 549.6l2.4 0.7M235.8 574.3l2.4 -1.4M390.7 525.0l0.4 0.2M179.6 408.1l1.8 -0.5M20.3 733.1l0.4 0.2M374.5 673.1l2.4 1.4M128.7 752.2l1.2 0.0M709.6 715.8l0.8 0.5M479.8 231.0l1.8 1.1M754.2 547.6l1.2 0.0M314.5 108.3l1.2 -0.4M719.7 223.3l1.8 1.1M803.5 752.6l1.8 0.5M37.5 576.8l1.8 -1.1M336.0 101.3l2.4 -0.7M235.5 314.9l0.4 0.0M604.7 339.5l2.4 0.0M293.1 262.5l2.4 -1.4M111.5 218.7l0.8 -0.5M432.0 265.5l0.8 0.0M226.6 322.9l0.8 0.0M252.9 753.4l1.2 0.0M574.1 754.9l1.8 -0.5M138.8 517.2l1.8 0.5M362.0 541.5l1.8 -1.1M281.5 217.8l0.4 -0.2M195.5 217.8l1.8 -0.5M176.6 649.9l1.8 1.1M215.1 661.3l0.4 0.0M404.6 67.5l2.4 0.7M301.4 535.1l2.4 -1.4M258.7 343.0l0.8 0.2M70.2 438.1l0.8 -0.5M511.5 69.5l1.2 -0.4M419.8 209.0l1.2 -0.4M316.7 299.8l0.4 -0.2M723.0 252.0l0.8 0.2M311.5 286.7l2.4 1.4M436.1 512.7l0.4 -0.2M256.0 366.8l1.2 0.4M715.1 426.8l2.4 0.0M747.2 286.0l2.4 0.0M296.1 141.3l0.4 -0.2M422.7 131.7l0.8 0.0M177.7 609.4l1.2 0.0M703.8 232.9l1.2 0.0M481.6 261.0l2.4 0.0M49.2 297.3l1.2 0.4M483.3 630.8l0.8 0.0M66.9 514.3l1.8 0.5M400.8 623.1l1.8 0.0M628.5 475.0l0.4 -0.2M275.2 615.0l0.4 0.0M757.9 697.4l0.4 0.0M244.5 592.6l0.4 -0.1M151.8 512.7l2.4 0.0M275.0 362.8l2.4 0.0M179.2 735.4l2.4 0.7M580.7 518.2l0.4 -0.2M211.5 520.4l0.4 -0.1M274.6 408.8l1.8 1.1M216.2 152.4l1.2 0.0M276.3 690.0l1.2 0.0M422.9 297.8l1.2 0.0M49.4 574.6l2.4 0.0M599.7 393.6l1.8 -0.5M429.6 516.0l0.8 0.5M656.9 533.1l0.4 0.0M542.1 277.6l1.8 0.5M515.0 636.4l1.2 0.4M755.1 308.6l1.2 -0.7M61.4 159.0l0.4 -0.1M279.4 609.5l1.8 0.0M36.4 439.9l1.2 0.0M30.1 172.4l0.8 -0.2M124.5 643.7l2.4 -1.4M277.1 400.8l0.8 0.2M36.1 252.6l1.8 0.0M634.4 332.6l0.4 0.0M256.9 156.0l0.8 0.0M407.3 574.1l0.4 0.2M48.7 365.4l0.8 0.2M375.9 276.2l2.4 0.0M78.9 52.8l1.2 0.0M255.6 242.1l0.8 -0.2M757.4 722.0l1.2 0.0M63.9 298.4l1.2 0.4M659.3 424.5l0.4 0.0M64.6 398.8l2.4 0.7M586.2 637.2l0.4 0.2M141.3 264.8l1.2 0.7M504.1 444.4l0.4 0.2M238.5 30.8l0.8 0.0M139.3 682.9l1.8 0.0M603.2 507.9l1.8 0.5M79.9 373.7l0.8 0.0M344.3 379.3l0.4 0.2M10.8 596.1l1.8 0.0M506.1 166.9l1.8 0.5M56.6 359.2l2.4 0.0M21.3 524.7l0.8 0.0M698.4 465.3l1.8 1.1M33.9 706.3l2.4 -1.4M17.4 205.3l1.2 -0.4M702.7 58.3l1.2 0.0M452.5 180.4l0.8 0.0M24.0 82.3l1.8 0.0M473.8 279.4l0.4 0.0M17.9 335.0l2.4 1.4M393.2 415.0l1.8 0.5M741.6 321.4l0.4 -0.2M87.4 246.8l0.4 -0.1M24.6 434.2l1.8 0.0M727.9 447.9l1.8 0.0M465.0 351.0l1.8 0.0M60.8 768.7l0.4 -0.2M140.1 170.0l1.8 0.0M678.5 471.6l0.8 0.2M312.9 585.9l0.8 0.0M551.1 744.1l2.4 0.7M128.7 682.8l2.4 0.0M506.1 161.0l1.8 1.1M189.6 172.6l0.8 0.5M759.0 47.6l1.8 -0.5M186.2 474.2l0.8 0.0M430.3 587.6l1.8 0.5M62.2 251.5l0.4 0.2M393.5 217.5l1.2 0.0M194.3 181.6l0.8 0.0M531.6 203.9l2.4 -0.7M417.1 739.4l2.4 0.7M65.4 79.5l1.8 -0.5M620.5 613.0l0.4 0.0M471.2 435.9l2.4 0.0M791.3 547.3l0.8 0.2M375.8 741.3l2.4 1.4M243.3 592.8l1.8 1.1M242.6 518.2l0.8 -0.5M174.9 58.9l1.2 0.0M321.6 603.7l1.2 0.0M665.0 595.6l0.4 0.2M245.6 624.6l1.8 -1.1M402.5 517.8l0.4 -0.1M179.5 329.6l1.8 0.5M438.1 267.9l1.2 0.0M101.6 410.4l0.4 0.0M813.7 558.8l2.4 1.4M636.2 390.5l0.4 0.0M88.4 345.2l2.4 0.7M139.4 285.3l1.2 0.7M141.6 336.3l1.2 -0.7M434.7 574.8l0.4 0.0M191.3 84.3l2.4 -1.4M25.6 221.5l0.8 0.0M171.6 168.2l2.4 0.7M699.2 280.7l1.2 0.4M256.9 347.6l0.4 0.0M583.7 150.0l2.4 0.7M757.7 639.3l0.8 0.0M225.4 536.7l0.8 0.2M408.0 239.8l2.4 0.0M593.3 470.1l0.8 0.2M675.0 575.1l1.8 1.1M351.7 623.5l0.8 0.5M501.9 354.3l1.2 -0.7M18.0 504.4l2.4 0.7M6.7 558.0l0.8 0.2M560.9 525.6l0.4 0.2M247.0 398.2l0.4 0.2M446.2 350.0l1.2 0.4M564.2 733.9l1.8 0.0M443.9 450.3l2.4 -1.4M153.1 319.3l2.4 1.4M643.0 447.8l1.2 0.4M65.1 156.2l1.2 0.4M800.3 376.5l1.8 -1.1M672.6 197.6l0.4 0.0M485.5 735.2l0.8 0.0M759.9 348.0l0.4 -0.1M595.9 582.6l1.2 0.0M635.8 392.3l1.8 0.5M78.1 349.1l1.2 0.0M511.5 365.1l1.2 0.0M395.8 434.6l0.4 0.2M262.1 213.6l1.2 0.0M177.0 169.4l1.2 0.7M88.1 308.5l1.2 0.0M473.6 264.6l1.8 1.1M646.9 403.2l0.4 0.1M567.0 164.1l2.4 -1.4M233.2 433.2l1.2 -0.4M37.1 384.3l2.4 -1.4M92.8 196.6l0.4 0.2M700.2 417.8l1.8 0.0M268.7 414.2l1.2 0.0M105.3 510.8l0.8 0.5M644.3 265.7l0.8 -0.5M583.4 317.8l1.2 0.7M207.5 543.8l2.4 0.7M590.0 492.9l2.4 0.7M541.0 285.7l1.8 -0.5M40.2 480.9l1.2 0.0M105.9 490.4l2.4 0.0M752.3 653.7l0.4 0.0M686.3 151.6l1.2 0.0M160.2 381.5l1.2 0.4M709.1 219.6l0.8 -0.5M309.2 353.4l0.8 0.2M285.4 607.3l1.8 0.0M370.7 720.5l1.2 -0.4M468.9 254.9l0.4 0.0M469.7 488.1l0.8 -0.5M58.5 56.1l0.4 0.1M167.5 400.6l1.8 0.0M560.0 123.7l1.8 -1.1M160.6 711.9l0.8 0.0M533.3 371.5l1.2 0.0M243.5 633.8l2.4 0.0M581.1 417.6l2.4 0.0M603.4 30.2l1.8 0.0M565.5 425.1l0.4 0.0M231.3 148.4l0.8 0.0M538.1 78.6l1.2 0.0M515.9 213.8l1.8 0.5M251.7 477.9l0.4 0.0M530.1 248.4l0.8 0.0M179.7 604.0l2.4 0.7M542.1 576.0l2.4 -0.7M556.0 168.8l0.8 -0.2M636.4 649.7l0.4 0.0M112.3 628.3l2.4 0.0M569.6 646.9l2.4 0.0M370.3 106.6l2.4 1.4M306.7 56.0l0.4 0.0M620.3 490.9l2.4 1.4M801.2 540.5l0.8 -0.2M374.6 76.7l2.4 -1.4M72.5 212.9l0.8 0.0M232.5 351.9l1.2 0.7M252.1 424.6l1.8 1.1M329.1 249.9l0.4 0.0M761.6 287.3l0.4 0.0M649.4 95.7l1.2 -0.7M172.8 609.0l1.2 0.4M763.2 661.0l2.4 -0.7M479.6 763.2l2.4 1.4M681.6 292.5l0.8 0.0M799.8 199.5l1.2 0.0M39.1 639.5l2.4 -1.4M379.1 780.4l1.8 0.5M216.4 554.8l0.8 0.0M689.9 430.0l1.2 0.0M118.8 154.6l1.2 0.0M185.0 490.0l0.8 0.2M369.9 187.7l1.8 1.1M518.0 400.9l1.2 0.0M734.8 747.3l1.8 0.5M282.9 162.1l2.4 0.0M68.2 385.8l2.4 0.0M684.0 515.0l1.8 1.1M398.9 205.3l1.8 1.1M784.1 721.1l1.8 0.0M568.5 401.6l0.4 0.0M331.3 583.0l0.8 0.0" stroke="#110d68" stroke-opacity="0.72" stroke-width="1.9" stroke-linecap="round" fill="none"/>
<path d="M770.6 603.6l0.8 0.0M637.9 183.2l0.4 0.0M653.6 286.9l0.4 -0.1M408.9 315.3l0.8 0.0M785.5 281.0l2.4 -0.7M448.6 391.9l1.2 -0.7M445.5 301.5l1.8 0.5M115.4 744.8l0.8 0.2M726.0 52.1l2.4 -1.4M372.2 290.2l2.4 0.0M425.3 433.6l1.2 0.0M196.8 520.2l1.2 0.4M90.1 368.9l2.4 0.0M303.0 560.7l1.2 0.7M266.8 618.6l0.4 0.0M248.6 396.3l2.4 -0.7M717.1 335.9l0.8 -0.2M381.2 255.3l2.4 1.4M197.1 332.0l0.4 0.1M688.6 504.7l2.4 -0.7M391.3 757.2l1.8 1.1M669.9 153.7l2.4 0.0M785.0 164.2l0.4 -0.2M378.2 331.3l2.4 0.0M424.2 234.4l2.4 0.0M708.7 596.5l1.2 -0.4M776.4 697.3l1.8 1.1M750.2 518.3l1.8 -0.5M714.7 505.4l2.4 0.0M166.9 475.0l0.4 0.2M635.3 761.0l0.4 0.0M529.4 235.3l0.8 0.5M207.8 628.6l1.2 0.0M721.4 575.9l1.8 0.5M475.8 223.5l0.4 -0.1M701.5 553.5l0.4 0.0M356.3 547.5l0.4 0.0M621.3 308.5l1.2 0.0M523.7 106.1l2.4 -0.7M439.7 239.9l0.8 0.0M247.5 209.2l1.8 0.0M588.8 215.0l0.4 0.0M797.3 414.1l1.2 -0.4M181.6 621.3l2.4 0.0M185.0 112.7l1.8 -1.1M383.3 572.3l1.8 -0.5M334.8 507.6l0.4 0.0M549.6 124.2l0.4 -0.1M394.0 442.2l0.8 0.2M438.5 355.9l0.4 0.0M386.0 241.6l0.8 0.0M298.9 46.1l2.4 0.0M736.0 481.9l0.8 0.0M504.5 430.4l0.8 0.0M700.0 126.3l0.4 -0.2M727.6 228.6l1.8 1.1M75.3 437.5l0.8 0.0M312.2 368.9l2.4 1.4M412.0 535.2l0.4 0.2M569.5 264.8l0.4 0.0M115.0 70.5l1.8 0.0M38.7 433.8l2.4 1.4M509.9 23.6l1.8 -1.1M707.7 423.6l0.8 0.0M486.9 288.4l1.2 0.0M300.3 492.2l1.2 0.7M274.7 294.5l1.8 -0.5M595.6 532.4l1.8 0.0M652.1 461.6l1.2 0.0M794.6 172.3l1.2 0.7M316.1 576.2l0.8 -0.2M759.2 399.0l2.4 0.0M359.0 537.9l1.8 0.0M149.0 23.0l0.4 0.2M398.0 696.3l1.8 -0.5M802.3 567.2l1.8 0.5M347.9 74.6l1.2 0.0M573.8 577.3l1.8 0.0M165.1 663.0l0.4 0.2M84.9 168.1l2.4 0.0M803.6 230.2l1.8 0.0M223.7 425.3l2.4 -1.4M295.4 722.1l2.4 0.0M629.4 108.1l1.2 -0.7M422.8 639.7l2.4 1.4M661.7 318.2l0.4 0.0M252.1 535.3l2.4 -1.4M93.2 186.6l1.8 -1.1M424.0 701.9l1.2 -0.4M519.1 508.0l0.4 0.0M320.4 371.7l1.8 0.5M604.2 416.8l1.2 0.7M2.5 553.1l0.4 0.0M704.0 340.8l0.4 -0.1M217.4 608.3l2.4 -1.4M201.2 304.5l2.4 0.7M549.9 696.8l1.8 0.0M610.9 297.7l0.4 0.1M561.8 349.2l1.8 -1.1M501.7 278.9l0.8 0.0M335.2 188.7l2.4 -0.7M204.4 572.3l2.4 1.4M371.4 638.9l1.2 0.4M99.8 72.6l0.8 -0.5M376.2 141.2l0.4 0.0M786.4 326.1l2.4 0.0M468.0 546.1l0.4 0.0M687.6 679.3l2.4 0.0M127.1 740.7l0.8 0.0M629.9 462.9l0.4 0.0M501.4 432.1l1.2 0.0M363.9 331.7l0.4 0.0M441.6 519.9l2.4 0.0M742.8 722.5l1.2 0.0M283.4 456.5l0.4 0.2M345.2 559.8l0.4 0.0M67.8 206.7l2.4 -0.7M799.0 283.8l1.2 0.4M273.0 190.0l1.8 0.0M686.6 52.3l1.2 0.0M696.0 199.5l2.4 -1.4M564.1 474.2l1.2 0.4M534.5 555.3l1.8 -0.5M571.2 104.7l1.2 0.0M722.2 202.0l1.8 0.0M410.0 779.0l2.4 -0.7M166.2 186.5l2.4 -0.7M28.7 475.3l0.4 0.1M403.9 582.1l2.4 -0.7M156.4 368.7l1.8 0.5M518.9 710.7l1.8 0.5M662.0 183.7l2.4 0.7M457.4 416.1l2.4 1.4M642.9 536.9l1.8 0.0M205.5 149.1l1.8 1.1M335.2 251.4l1.2 0.0M174.0 594.4l0.4 0.0M771.9 554.6l0.8 -0.2M123.4 246.5l0.8 0.5M208.4 475.2l0.4 0.0M658.6 641.2l0.8 0.5M236.4 121.1l2.4 1.4M767.9 299.3l1.8 0.5M150.5 299.4l1.8 -0.5M807.2 26.7l1.8 0.0M367.3 309.2l2.4 0.7M195.9 389.2l2.4 0.7M171.2 107.7l1.8 0.0M749.0 268.5l1.8 0.0M22.2 492.4l2.4 0.7M248.8 201.7l1.2 0.4M680.1 160.7l1.8 0.5M414.8 237.7l0.4 0.0M665.1 415.3l1.2 0.0M134.3 235.1l1.8 0.5M600.5 747.4l1.2 0.0M753.0 334.0l2.4 -1.4M259.4 350.3l1.8 0.5M357.3 147.4l0.8 -0.5M773.4 244.4l0.8 0.0M1.0 370.6l1.8 -1.1M23.2 505.5l0.4 -0.2M734.2 668.9l0.8 0.0M351.4 69.7l0.4 0.0M91.1 177.5l0.8 -0.2M711.9 720.6l2.4 0.7M778.4 294.6l2.4 1.4M58.6 449.0l1.8 0.0M242.3 460.0l0.8 -0.5M317.7 182.5l1.2 0.4M140.5 606.7l0.4 0.0M378.0 295.0l0.8 0.0M42.3 251.6l2.4 0.0M409.5 640.1l0.8 -0.5M248.8 289.0l0.8 0.0M230.0 401.9l1.8 -1.1M239.0 612.0l1.8 -0.5M510.5 133.5l2.4 0.7M114.1 442.8l1.2 0.0M107.7 543.3l1.8 0.0M499.0 118.8l1.8 0.0M468.1 382.2l2.4 0.0M98.3 47.6l0.4 0.2M153.2 182.6l1.8 0.0M431.6 174.9l1.2 0.0M575.8 539.7l0.8 0.5M283.0 43.0l0.8 0.5M39.3 495.8l0.8 -0.2M87.5 313.3l2.4 -0.7M730.0 675.1l0.8 0.0M192.9 598.9l1.2 -0.4M583.7 728.0l0.4 0.1M181.6 391.2l2.4 0.7M572.0 209.0l1.2 0.0M802.9 365.2l2.4 1.4M731.0 68.1l1.2 -0.4M815.0 248.2l2.4 0.7M244.9 478.8l1.2 -0.7M371.0 489.7l2.4 0.0M234.7 104.9l1.2 0.0" stroke="#1812a0" stroke-opacity="0.8" stroke-width="1.7" stroke-linecap="round" fill="none"/>
<defs>
<linearGradient id="g1" gradientUnits="userSpaceOnUse" x1="0" y1="20" x2="0" y2="274"><stop offset="0.000" stop-color="#0c0a60" stop-opacity="0"/><stop offset="0.028" stop-color="#120e78" stop-opacity="0.5"/><stop offset="0.315" stop-color="#141080" stop-opacity="0.5"/><stop offset="0.551" stop-color="#1a1290" stop-opacity="0.8"/><stop offset="0.630" stop-color="#3a129a"/><stop offset="0.693" stop-color="#70189a"/><stop offset="0.740" stop-color="#b83078"/><stop offset="0.780" stop-color="#e87030"/><stop offset="0.819" stop-color="#ffa018"/><stop offset="0.850" stop-color="#ffb428"/><stop offset="0.878" stop-color="#f89020"/><stop offset="0.921" stop-color="#e87828"/><stop offset="0.949" stop-color="#b04060"/><stop offset="0.972" stop-color="#5a1898" stop-opacity="0.9"/><stop offset="0.992" stop-color="#201080" stop-opacity="0"/><stop offset="1.000" stop-color="#201080" stop-opacity="0"/></linearGradient>
<linearGradient id="g2" gradientUnits="userSpaceOnUse" x1="0" y1="18" x2="0" y2="230"><stop offset="0.000" stop-color="#0c0a60" stop-opacity="0"/><stop offset="0.033" stop-color="#1c16a0" stop-opacity="0.9"/><stop offset="0.151" stop-color="#1a1498" stop-opacity="0.85"/><stop offset="0.175" stop-color="#120e70" stop-opacity="0.3"/><stop offset="0.226" stop-color="#120e70" stop-opacity="0.25"/><stop offset="0.269" stop-color="#1a1498" stop-opacity="0.85"/><stop offset="0.434" stop-color="#2a16a8"/><stop offset="0.505" stop-color="#4a14a0"/><stop offset="0.599" stop-color="#80189a"/><stop offset="0.670" stop-color="#b83070"/><stop offset="0.741" stop-color="#e06038"/><stop offset="0.811" stop-color="#f88c18"/><stop offset="0.906" stop-color="#ffa818"/><stop offset="0.962" stop-color="#ffc838"/><stop offset="1.000" stop-color="#ffe060"/></linearGradient>
<linearGradient id="g3" gradientUnits="userSpaceOnUse" x1="0" y1="208" x2="0" y2="292"><stop offset="0.000" stop-color="#101080" stop-opacity="0"/><stop offset="0.071" stop-color="#181090" stop-opacity="0.5"/><stop offset="0.238" stop-color="#3a129a" stop-opacity="0.85"/><stop offset="0.345" stop-color="#90288a" stop-opacity="0.95"/><stop offset="0.405" stop-color="#e07830"/><stop offset="0.476" stop-color="#e07030"/><stop offset="0.536" stop-color="#a03080" stop-opacity="0.95"/><stop offset="0.619" stop-color="#50149a" stop-opacity="0.9"/><stop offset="0.738" stop-color="#28129a" stop-opacity="0.8"/><stop offset="0.881" stop-color="#181090" stop-opacity="0.5"/><stop offset="1.000" stop-color="#101080" stop-opacity="0"/></linearGradient>
<linearGradient id="g4" gradientUnits="userSpaceOnUse" x1="0" y1="204" x2="0" y2="272"><stop offset="0.000" stop-color="#201090" stop-opacity="0"/><stop offset="0.088" stop-color="#40149a" stop-opacity="0.9"/><stop offset="0.191" stop-color="#b03870"/><stop offset="0.265" stop-color="#f89020"/><stop offset="0.353" stop-color="#ffb030"/><stop offset="0.706" stop-color="#ffb030"/><stop offset="0.794" stop-color="#f08820"/><stop offset="0.882" stop-color="#d06040"/><stop offset="0.941" stop-color="#70209a" stop-opacity="0.9"/><stop offset="1.000" stop-color="#201090" stop-opacity="0"/></linearGradient>
</defs>
<path d="M1 236.7H740M748 236.7H760M770 236.7H790M800 236.7H817" stroke="#120e6a" stroke-opacity="0.13" stroke-width="1.4" fill="none"/>
<path d="M1 236.7H12M37 236.7H56M91 236.7H110M130 236.7H166M185 236.7H200M215 236.7H232M245 236.7H262M288 236.7H330M340 236.7H372M405 236.7H472M500 236.7H560M575 236.7H600M615 236.7H640M655 236.7H700M712 236.7H735" stroke="#2a1696" stroke-opacity="0.5" stroke-width="1.5" fill="none"/>
<path d="M1 246.5H745M760 246.5H775M790 246.5H805" stroke="#100c60" stroke-opacity="0.1" stroke-width="1.4" fill="none"/>
<path d="M2 246.5H20M38 246.5H72M90 246.5H100M153 246.5H191M205 246.5H215M225 246.5H250M268 246.5H300M320 246.5H338M350 246.5H398M408 246.5H430M445 246.5H475M500 246.5H530M560 246.5H590M600 246.5H650M675 246.5H720M735 246.5H745" stroke="#1c1284" stroke-opacity="0.36" stroke-width="1.5" fill="none"/>
<path d="M42 236.6h11M39.5 238v5M296 236.6h10" stroke="#70208c" stroke-opacity=".75" stroke-width="1.5" fill="none"/>
<path d="M40 232v16M95.6 243v15M183.6 243v14M260 230v32M274 232v18M275 260v8M644 246v22M716 240v14M479 262v38M403 276v5M403 289v5" stroke="#1a1290" stroke-opacity=".5" stroke-width="2" fill="none" filter="url(#b1)"/>
<path d="M149 140L165.7 211.5" stroke="#1e16b0" stroke-opacity=".8" stroke-width="1.7" stroke-dasharray="2.5 1.2" fill="none"/>
<path d="M472 261h4M481 259h3M491 262h4M476 268h3M488 271h4M470 275h3M483 279h3M492 281h3M477 288h2" stroke="#1c14a0" stroke-opacity=".55" stroke-width="2.4" stroke-linecap="round" fill="none" filter="url(#b1)"/>
<g filter="url(#b1)">
<path d="M401.2 20h2.6l.9 200v30l-.9 24h-2.6l-.8-24v-30z" fill="url(#g1)"/>
<path d="M476.6 18h2.6l2.2 212h-4z" fill="url(#g2)"/>
<rect x="666.4" y="208" width="2.8" height="84" fill="url(#g3)"/>
<rect x="485.8" y="204" width="3" height="68" fill="url(#g4)"/>
</g>
<g fill-opacity=".75">
<rect x="401.8" y="24" width="1.5" height="246" fill="url(#g1)"/>
<path d="M477.2 22h1.5l1.6 206h-1.9z" fill="url(#g2)"/>
<rect x="667.1" y="214" width="1.4" height="70" fill="url(#g3)"/>
<rect x="486.6" y="208" width="1.5" height="60" fill="url(#g4)"/>
</g>
<rect x="401.4" y="228" width="2.4" height="14" fill="#ffb830" fill-opacity=".8" filter="url(#b1)"/>
<path d="M478.2 200h1.8l.8 28h-2.4z" fill="#ffc030" fill-opacity=".8" filter="url(#b1)"/>
<path d="M476.8 227.5L482 227L490.5 228.6L494.2 233L495.3 240.6L494.7 249.3L492.5 253.6L486 252.5L480.6 246L477.4 238.4Z" fill="#ff9c10" fill-opacity=".8" stroke="#f08010" stroke-opacity=".6" stroke-width="1" stroke-linejoin="round" filter="url(#b2)"/>
<path d="M476.8 227.5L482 227L490.5 228.6L494.2 233L495.3 240.6L494.7 249.3L492.5 253.6L486 252.5L480.6 246L477.4 238.4Z" fill="#ffe060" stroke="#ffb828" stroke-width=".6" stroke-linejoin="round" filter="url(#b1)"/>
<path d="M477.6 228.3L482 227.8L490.2 229.4L493.6 233.4L494.6 240.6L494 248.9L492 252.6L486.6 251.6L481.4 245.6L478.3 238Z" fill="#fffdf0" filter="url(#b1)"/>
<path d="M478.2 229L482 228.5L489.8 230L493 233.8L493.9 240.6L493.3 248L491.6 251L487.8 250L483.6 244.6L479.6 238Z" fill="#fff"/>
<path d="M483 236.8h1M480 238h1M487 239h1M489 241h1M492 238.4h1M483 242.7h1M491 248.7h1M486 244.4h1" stroke="#5a3000" stroke-width="1" fill="none"/>
<ellipse cx="696.8" cy="269" rx="2" ry="1.2" fill="#60189a" fill-opacity=".8"/>
</g>
<rect x="3" y="3" width="311" height="45" fill="#fff"/>
<g class="m" font-size="11.667" fill="#000" stroke="#fff" stroke-width=".1">
<text x="4.6" y="15">Screen Capture Time: 2025-11-06 03:12:22 UTC</text>
<text x="4.6" y="29">143048017 Hz</text>
<text x="4.6" y="43">Config = V8</text>
</g>
<rect x="5" y="53" width="99" height="15" fill="url(#cb)"/>
<rect x="5" y="68" width="99" height="24" fill="#fff"/>
<path d="M8.5 69v4M12.5 69v4M17.5 69v4M21.5 69v4M26.5 69v7M30.5 69v4M35.5 69v4M39.5 69v4M44.5 69v4M48.5 69v10M53.5 69v4M57.5 69v4M62.5 69v4M66.5 69v4M71.5 69v7M75.5 69v4M80.5 69v4M84.5 69v4M89.5 69v4M93.5 69v10M97.5 69v4M102.5 69v4" stroke="#000" stroke-width="1" fill="none" shape-rendering="crispEdges"/>
<g class="s" font-size="11" fill="#000">
<text x="4.6" y="90">-80 dB -60</text>
<text x="84" y="90">-40</text>
</g>
<g class="s" font-size="11" fill="#fff">
<text transform="translate(41 778) rotate(-90)" textLength="99.5" lengthAdjust="spacingAndGlyphs">2025-11-06 03:11:10</text>
<text transform="translate(155 778) rotate(-90)" textLength="99.5" lengthAdjust="spacingAndGlyphs">2025-11-06 03:11:20</text>
<text transform="translate(254 778) rotate(-90)" textLength="99.5" lengthAdjust="spacingAndGlyphs">2025-11-06 03:11:30</text>
<text transform="translate(368 778) rotate(-90)" textLength="99.5" lengthAdjust="spacingAndGlyphs">2025-11-06 03:11:40</text>
<text transform="translate(482 778) rotate(-90)" textLength="99.5" lengthAdjust="spacingAndGlyphs">2025-11-06 03:11:50</text>
<text transform="translate(596 778) rotate(-90)" textLength="99.5" lengthAdjust="spacingAndGlyphs">2025-11-06 03:12:00</text>
<text transform="translate(711 778) rotate(-90)" textLength="99.5" lengthAdjust="spacingAndGlyphs">2025-11-06 03:12:10</text>
</g>
<path d="M44.5 760V782M158.5 760V782M257.5 760V782M371.5 760V782M485.5 760V782M599.5 760V782M714.5 760V782" stroke="#fff" stroke-width="1" fill="none"/>
<rect x="818" y="1" width="42" height="781" fill="#fff"/>
<path d="M818 3.5h8M818 11.5h8M818 19.5h11M818 26.5h8M818 34.5h8M818 42.5h8M818 50.5h8M818 58.5h8M818 65.5h8M818 73.5h8M818 81.5h8M818 89.5h8M818 104.5h8M818 112.5h8M818 120.5h8M818 128.5h8M818 136.5h8M818 143.5h8M818 151.5h8M818 159.5h8M818 167.5h8M818 175.5h11M818 182.5h8M818 190.5h8M818 198.5h8M818 206.5h8M818 214.5h8M818 221.5h8M818 229.5h8M818 237.5h8M818 245.5h8M818 260.5h8M818 268.5h8M818 276.5h8M818 284.5h8M818 292.5h8M818 299.5h8M818 307.5h8M818 315.5h8M818 323.5h8M818 331.5h11M818 338.5h8M818 346.5h8M818 354.5h8M818 362.5h8M818 370.5h8M818 377.5h8M818 385.5h8M818 393.5h8M818 401.5h8M818 416.5h8M818 424.5h8M818 432.5h8M818 440.5h8M818 448.5h8M818 455.5h8M818 463.5h8M818 471.5h8M818 479.5h8M818 487.5h11M818 494.5h8M818 502.5h8M818 510.5h8M818 518.5h8M818 526.5h8M818 533.5h8M818 541.5h8M818 549.5h8M818 557.5h8M818 572.5h8M818 580.5h8M818 588.5h8M818 596.5h8M818 604.5h8M818 611.5h8M818 619.5h8M818 627.5h8M818 635.5h8M818 643.5h11M818 650.5h8M818 658.5h8M818 666.5h8M818 674.5h8M818 682.5h8M818 689.5h8M818 697.5h8M818 705.5h8M818 713.5h8M818 728.5h8M818 736.5h8M818 744.5h8M818 752.5h8M818 760.5h8M818 767.5h8M818 775.5h8" stroke="#000" stroke-width="1" fill="none" shape-rendering="crispEdges"/>
<path d="M818 97.5h26M818 253.5h26M818 409.5h26M818 565.5h26M818 721.5h26" stroke="#000" stroke-width="1" fill="none" shape-rendering="crispEdges"/>
<path d="M823.5 9.5L839 17.5M839.5 14V773.5L825 781.5" stroke="#00009c" stroke-width="1" fill="none"/>
<g class="m" font-size="11.667" fill="#1c1c1c" stroke="#fff" stroke-width=".12">
<text transform="translate(849.3 66.3) rotate(90)">143050400</text>
<text transform="translate(849.3 222.3) rotate(90)">143050200</text>
<text transform="translate(849.3 378.3) rotate(90)">143050000</text>
<text transform="translate(849.3 534.3) rotate(90)">143049800</text>
<text transform="translate(849.3 679.8) rotate(90)">143049600 Hz</text>
</g>
<rect x="860" y="1" width="80" height="781" fill="#000"/>
<rect x="860" y="13" width="80" height="765" fill="#505050"/>
<g clip-path="url(#rp)">
<path d="M860 24.5h16M860 25.5h8M860 26.5h10M860 27.5h10M860 28.5h1M860 29.5h18M860 30.5h11M860 31.5h9M860 32.5h9M860 33.5h9M860 34.5h11M860 35.5h7M860 36.5h2M860 37.5h6M860 38.5h12M860 40.5h12M860 41.5h1M860 42.5h2M860 43.5h19M860 44.5h10M860 45.5h14M860 47.5h1M860 48.5h1M860 49.5h10M860 50.5h6M860 51.5h3M860 53.5h4M860 54.5h4M860 55.5h1M860 56.5h1M860 57.5h1M860 58.5h3M860 59.5h13M860 60.5h12M860 61.5h6M860 62.5h2M860 63.5h13M860 64.5h13M860 65.5h5M860 67.5h10M860 68.5h13M860 69.5h8M860 70.5h12M860 71.5h12M860 72.5h11M860 73.5h11M860 74.5h12M860 75.5h13M860 76.5h14M860 77.5h13M860 78.5h9M860 79.5h16M860 80.5h16M860 81.5h16M860 82.5h7M860 83.5h17M860 84.5h9M860 85.5h11M860 86.5h2M860 87.5h11M860 88.5h14M860 89.5h12M860 90.5h9M860 91.5h15M860 92.5h13M860 93.5h18M860 94.5h11M860 95.5h10M860 96.5h15M860 97.5h14M860 98.5h15M860 99.5h11M860 100.5h1M860 101.5h16M860 102.5h6M860 103.5h1M860 104.5h17M860 105.5h4M860 106.5h16M860 109.5h16M860 110.5h14M860 111.5h15M860 112.5h17M860 113.5h13M860 114.5h13M860 115.5h15M860 116.5h14M860 117.5h2M860 118.5h9M860 119.5h7M860 120.5h9M860 121.5h10M860 122.5h10M860 123.5h12M860 124.5h9M860 125.5h2M860 126.5h7M860 127.5h12M860 128.5h1M860 129.5h3M860 130.5h1M860 131.5h9M860 132.5h8M860 133.5h9M860 134.5h13M860 135.5h7M860 137.5h11M860 138.5h12M860 139.5h3M860 140.5h1M860 141.5h3M860 142.5h5M860 144.5h4M860 145.5h1M860 146.5h10M860 149.5h15M860 150.5h20M860 151.5h3M860 152.5h12M860 153.5h9M860 154.5h12M860 155.5h12M860 156.5h13M860 158.5h10M860 159.5h9M860 160.5h7M860 161.5h7M860 162.5h8M860 163.5h8M860 164.5h13M860 165.5h6M860 166.5h12M860 167.5h13M860 168.5h8M860 169.5h15M860 170.5h10M860 171.5h9M860 172.5h6M860 173.5h16M860 174.5h1M860 175.5h15M860 176.5h8M860 177.5h8M860 178.5h11M860 179.5h1M860 180.5h6M860 181.5h12M860 182.5h13M860 183.5h2M860 184.5h12M860 185.5h16M860 186.5h13M860 187.5h15M860 188.5h14M860 189.5h13M860 190.5h13M860 191.5h16M860 192.5h6M860 193.5h1M860 194.5h2M860 195.5h13M860 196.5h9M860 197.5h12M860 198.5h11M860 199.5h10M860 200.5h12M860 201.5h12M860 202.5h13M860 203.5h8M860 204.5h16M860 205.5h9M860 206.5h17M860 207.5h13M860 208.5h2M860 209.5h13M860 210.5h18M860 211.5h12M860 212.5h1M860 214.5h3M860 215.5h1M860 216.5h12M860 217.5h7M860 218.5h8M860 219.5h12M860 220.5h15M860 221.5h1M860 222.5h17M860 223.5h2M860 224.5h3M860 225.5h9M860 226.5h8M860 227.5h12M860 228.5h13M860 229.5h3M860 230.5h4M860 231.5h15M860 232.5h4M860 233.5h4M860 234.5h4M860 235.5h15M860 239.5h13M860 242.5h18M860 243.5h17M860 244.5h18M860 245.5h15M860 246.5h18M860 247.5h14M860 248.5h15M860 249.5h19M860 250.5h19M860 251.5h16M860 252.5h15M860 253.5h13M860 254.5h16M860 255.5h15M860 256.5h1M860 257.5h8M860 258.5h11M860 259.5h10M860 260.5h9M860 262.5h9M860 263.5h9M860 264.5h3M860 265.5h4M860 266.5h2M860 267.5h3M860 268.5h14M860 269.5h14M860 270.5h3M860 271.5h14M860 272.5h3M860 273.5h11M860 274.5h15M860 275.5h10M860 276.5h1M860 278.5h12M860 279.5h2M860 280.5h11M860 281.5h8M860 282.5h9M860 283.5h9M860 284.5h13M860 285.5h11M860 286.5h13M860 287.5h13M860 290.5h2M860 291.5h2M860 293.5h1M860 294.5h1M860 295.5h15M860 296.5h9M860 297.5h10M860 298.5h4M860 299.5h5M860 300.5h15M860 301.5h12M860 302.5h9M860 303.5h5M860 304.5h9M860 305.5h10M860 306.5h11M860 310.5h13M860 311.5h15M860 312.5h20M860 313.5h10M860 314.5h4M860 315.5h4M860 316.5h5M860 317.5h11M860 318.5h14M860 319.5h8M860 320.5h11M860 321.5h7M860 322.5h11M860 323.5h6M860 324.5h13M860 325.5h11M860 326.5h4M860 327.5h15M860 328.5h6M860 329.5h10M860 330.5h4M860 331.5h3M860 332.5h5M860 335.5h10M860 336.5h8M860 337.5h9M860 338.5h8M860 339.5h12M860 340.5h10M860 341.5h5M860 342.5h6M860 343.5h2M860 344.5h11M860 345.5h15M860 347.5h3M860 348.5h2M860 349.5h2M860 350.5h4M860 351.5h1M860 352.5h2M860 353.5h7M860 354.5h8M860 356.5h8M860 357.5h12M860 358.5h11M860 359.5h11M860 360.5h12M860 361.5h7M860 362.5h3M860 363.5h12M860 364.5h2M860 365.5h14M860 366.5h12M860 367.5h12M860 368.5h16M860 369.5h8M860 370.5h14M860 371.5h5M860 372.5h5M860 373.5h10M860 374.5h11M860 375.5h8M860 376.5h12M860 377.5h9M860 378.5h15M860 379.5h12M860 380.5h18M860 381.5h3M860 382.5h3M860 383.5h1M860 384.5h11M860 385.5h12M860 386.5h12M860 387.5h6M860 388.5h6M860 389.5h9M860 390.5h8M860 391.5h6M860 392.5h12M860 393.5h7M860 394.5h2M860 395.5h2M860 396.5h12M860 397.5h13M860 398.5h8M860 399.5h9M860 400.5h16M860 401.5h8M860 402.5h10M860 403.5h17M860 404.5h8M860 405.5h10M860 406.5h11M860 407.5h1M860 408.5h11M860 409.5h12M860 410.5h8M860 411.5h6M860 412.5h5M860 413.5h7M860 414.5h16M860 415.5h6M860 416.5h14M860 417.5h10M860 418.5h7M860 419.5h6M860 420.5h1M860 421.5h11M860 423.5h5M860 424.5h12M860 425.5h11M860 426.5h11M860 427.5h10M860 428.5h5M860 429.5h13M860 430.5h1M860 431.5h1M860 432.5h7M860 433.5h8M860 434.5h16M860 435.5h6M860 436.5h11M860 437.5h5M860 438.5h5M860 439.5h7M860 440.5h6M860 441.5h9M860 442.5h6M860 443.5h8M860 444.5h7M860 445.5h8M860 446.5h10M860 447.5h9M860 448.5h11M860 449.5h1M860 450.5h11M860 453.5h12M860 454.5h13M860 455.5h13M860 456.5h13M860 457.5h20M860 458.5h14M860 459.5h14M860 460.5h1M860 461.5h10M860 462.5h13M860 463.5h19M860 464.5h1M860 465.5h10M860 466.5h11M860 467.5h2M860 468.5h3M860 469.5h3M860 470.5h4M860 471.5h20M860 472.5h2M860 473.5h11M860 474.5h12M860 475.5h12M860 476.5h21M860 477.5h15M860 478.5h11M860 479.5h13M860 480.5h18M860 481.5h17M860 482.5h10M860 483.5h10M860 484.5h13M860 485.5h12M860 486.5h15M860 487.5h18M860 488.5h10M860 489.5h10M860 490.5h13M860 491.5h16M860 492.5h11M860 493.5h1M860 494.5h10M860 495.5h13M860 497.5h10M860 498.5h1M860 499.5h10M860 500.5h12M860 501.5h17M860 502.5h13M860 503.5h10M860 504.5h10M860 505.5h8M860 506.5h16M860 507.5h13M860 508.5h11M860 509.5h11M860 510.5h17M860 511.5h9M860 512.5h3M860 513.5h4M860 514.5h5M860 516.5h15M860 517.5h11M860 518.5h15M860 519.5h17M860 520.5h18M860 522.5h8M860 525.5h10M860 526.5h10M860 527.5h14M860 528.5h15M860 529.5h12M860 530.5h13M860 531.5h13M860 532.5h9M860 533.5h12M860 534.5h2M860 535.5h1M860 536.5h14M860 537.5h10M860 538.5h2M860 539.5h12M860 540.5h11M860 541.5h12M860 542.5h14M860 543.5h12M860 544.5h11M860 545.5h12M860 546.5h19M860 547.5h11M860 548.5h6M860 549.5h2M860 551.5h3M860 552.5h3M860 553.5h15M860 555.5h17M860 556.5h17M860 557.5h15M860 559.5h13M860 560.5h13M860 561.5h2M860 563.5h8M860 564.5h12M860 565.5h8M860 566.5h7M860 567.5h10M860 568.5h11M860 569.5h10M860 570.5h8M860 571.5h7M860 572.5h10M860 573.5h12M860 574.5h8M860 575.5h12M860 576.5h12M860 577.5h12M860 578.5h1M860 579.5h16M860 580.5h18M860 581.5h4M860 582.5h17M860 583.5h15M860 585.5h3M860 586.5h5M860 589.5h21M860 590.5h14M860 594.5h10M860 595.5h2M860 596.5h14M860 597.5h8M860 598.5h1M860 599.5h1M860 600.5h1M860 601.5h9M860 602.5h1M860 603.5h1M860 604.5h12M860 605.5h15M860 606.5h6M860 607.5h13M860 608.5h18M860 609.5h14M860 610.5h14M860 611.5h10M860 612.5h12M860 613.5h5M860 614.5h11M860 615.5h11M860 616.5h8M860 617.5h3M860 618.5h11M860 619.5h10M860 620.5h14M860 621.5h11M860 622.5h12M860 623.5h9M860 624.5h1M860 626.5h5M860 627.5h5M860 628.5h10M860 629.5h11M860 630.5h9M860 631.5h8M860 632.5h9M860 633.5h2M860 634.5h13M860 635.5h6M860 636.5h8M860 637.5h9M860 638.5h7M860 639.5h10M860 640.5h11M860 641.5h1M860 642.5h13M860 643.5h10M860 644.5h9M860 645.5h18M860 646.5h13M860 647.5h11M860 648.5h9M860 649.5h11M860 650.5h10M860 651.5h11M860 652.5h14M860 653.5h4M860 654.5h16M860 655.5h16M860 656.5h14M860 657.5h14M860 658.5h12M860 659.5h4M860 660.5h14M860 661.5h15M860 662.5h12M860 663.5h12M860 664.5h17M860 665.5h11M860 666.5h15M860 668.5h6M860 669.5h1M860 670.5h6M860 671.5h5M860 672.5h17M860 673.5h18M860 674.5h3M860 675.5h14M860 676.5h12M860 677.5h2M860 678.5h5M860 679.5h1M860 680.5h6M860 681.5h5M860 682.5h6M860 683.5h2M860 684.5h10M860 685.5h12M860 686.5h8M860 687.5h5M860 688.5h10M860 689.5h10M860 690.5h3M860 691.5h2M860 692.5h13M860 693.5h16M860 694.5h16M860 695.5h15M860 696.5h12M860 697.5h15M860 698.5h14M860 699.5h13M860 700.5h16M860 701.5h4M860 702.5h4M860 703.5h3M860 704.5h12M860 705.5h11M860 706.5h2M860 707.5h5M860 708.5h12M860 709.5h12M860 710.5h14M860 711.5h12M860 712.5h1M860 713.5h12M860 714.5h10M860 715.5h5M860 716.5h12M860 717.5h16M860 718.5h13M860 719.5h12M860 720.5h14M860 721.5h16M860 722.5h2M860 723.5h1M860 724.5h16M860 725.5h13M860 726.5h18M860 727.5h14M860 728.5h14M860 729.5h13M860 730.5h12M860 731.5h12M860 732.5h14M860 733.5h3M860 734.5h3M860 736.5h1M860 737.5h19M860 738.5h12M860 739.5h12M860 740.5h12M860 741.5h16M860 742.5h12M860 743.5h6M860 745.5h1M860 746.5h13M860 747.5h14M860 748.5h16M860 749.5h12M860 750.5h1M860 751.5h12M860 752.5h18M860 754.5h11M860 755.5h1M860 756.5h4M860 758.5h3M860 759.5h15M860 760.5h3M860 762.5h3M860 763.5h1M860 764.5h14M860 765.5h4M860 766.5h11M860 767.5h12M860 768.5h13M860 769.5h19M860 770.5h6M860 771.5h4M860 772.5h1M860 773.5h9M860 774.5h7M860 775.5h9M860 776.5h11M860 777.5h11" stroke="#000" stroke-width="1" fill="none" shape-rendering="crispEdges"/>
<path d="M860 107.5h20M860 108.5h23M860 136.5h16M860 147.5h20M860 148.5h19M860 236.5h23M860 237.5h25M860 238.5h26M860 240.5h28M860 241.5h28M860 288.5h14M860 289.5h17M860 307.5h19M860 308.5h18M860 309.5h23M860 451.5h22M860 452.5h22M860 523.5h20M860 524.5h17M860 554.5h31M860 587.5h20M860 588.5h20M860 591.5h19M860 592.5h24M860 593.5h20" stroke="#06063a" stroke-width="1" fill="none" shape-rendering="crispEdges"/>
<path d="M860 19.5h80M860 97.5h80M860 175.5h80M860 253.5h80M860 331.5h80M860 409.5h80M860 487.5h80M860 565.5h80M860 643.5h80M860 721.5h80" stroke="#929292" stroke-width="1" fill="none" shape-rendering="crispEdges"/>
<path d="M860.6 2.0L860.6 21.0L864.9 23.6L868.8 28.0L869.4 38.3L868.8 44.6L868.1 57.4L869.4 66.3L868.1 71.4L870.7 76.5L868.8 81.6L871.9 88.0L868.8 94.4L870.0 100.0L869.1 101.7L869.5 103.3L870.4 105.0L869.4 106.7L869.4 108.3L869.5 110.0L868.4 111.7L870.4 113.3L869.0 115.0L870.7 116.7L870.5 118.3L869.6 120.0L869.6 121.7L869.9 123.3L868.1 125.0L870.5 126.7L869.4 128.3L869.3 130.0L869.7 131.7L869.6 133.3L870.3 135.0L869.6 136.7L869.2 138.3L868.9 140.0L869.4 141.7L869.7 143.4L869.7 145.0L870.4 146.7L870.7 148.4L870.1 150.0L870.5 151.7L871.2 153.4L872.0 155.0L870.0 156.7L869.7 158.4L871.4 160.0L871.7 161.7L871.6 163.4L870.6 165.1L870.0 166.7L870.8 168.4L872.0 170.1L870.5 171.7L871.7 173.4L871.0 175.1L872.5 176.7L870.3 178.4L871.9 180.1L871.2 181.7L872.4 183.4L872.0 185.1L871.8 186.8L873.3 188.4L872.0 190.1L872.6 191.8L872.7 193.4L871.9 195.1L872.8 196.8L873.9 198.5L874.2 200.2L873.0 201.9L873.7 203.5L874.0 205.2L872.7 206.9L873.3 208.6L874.1 210.3L877.8 219.0L884.3 225.5L893.0 228.8L904.9 230.3L918.0 232.1L926.7 234.2L925.6 236.8L911.5 237.5L899.5 240.7L897.3 242.9L901.7 245.1L908.2 247.3L906.0 249.4L894.1 250.5L880.0 253.3L875.6 258.1L871.9 264.6L872.8 266.5L871.2 268.3L872.1 270.2L871.1 272.1L871.7 274.0L871.7 275.8L869.7 277.7L869.8 279.4L868.7 281.1L870.9 282.8L870.0 284.6L871.1 286.3L868.7 288.0L869.7 289.7L870.8 291.4L868.8 293.1L869.8 294.9L870.7 296.6L870.4 298.3L868.6 300.0L869.3 301.7L869.1 303.4L869.3 305.2L868.2 306.9L870.7 308.6L869.7 310.3L870.6 312.1L870.0 313.8L868.2 315.5L869.1 317.2L868.5 319.0L868.9 320.7L870.3 322.4L870.3 324.1L868.1 325.9L870.3 327.6L868.1 329.3L868.1 331.0L870.7 332.8L868.3 334.5L869.8 336.2L870.4 337.9L868.2 339.7L870.5 341.4L869.0 343.1L870.5 344.8L870.4 346.6L869.4 348.3L869.8 350.0L869.3 351.7L868.3 353.4L869.8 355.2L869.8 356.9L868.2 358.6L869.4 360.3L868.7 362.1L869.2 363.8L869.8 365.5L868.8 367.2L869.0 369.0L868.1 370.7L870.1 372.4L870.4 374.1L871.0 375.9L869.4 377.6L869.2 379.3L869.1 381.0L869.9 382.8L869.7 384.5L868.2 386.2L869.4 387.9L870.8 389.7L868.9 391.4L869.8 393.1L870.9 394.8L868.4 396.6L870.9 398.3L869.0 400.0L869.5 401.7L868.9 403.4L868.9 405.2L869.3 406.9L870.0 408.6L869.7 410.3L868.3 412.1L870.2 413.8L869.4 415.5L868.2 417.2L869.1 419.0L870.8 420.7L870.1 422.4L870.7 424.1L868.9 425.9L868.4 427.6L868.2 429.3L868.6 431.0L870.7 432.8L868.1 434.5L870.1 436.2L868.1 437.9L868.0 439.7L870.9 441.4L870.3 443.1L870.6 444.8L868.8 446.6L868.4 448.3L870.5 450.0L870.3 451.7L868.8 453.4L870.1 455.2L869.9 456.9L868.1 458.6L870.9 460.3L868.5 462.1L869.9 463.8L868.9 465.5L869.5 467.2L870.4 469.0L868.4 470.7L868.8 472.4L869.3 474.1L869.0 475.9L870.0 477.6L870.6 479.3L870.5 481.0L869.9 482.8L869.6 484.5L870.0 486.2L868.9 487.9L870.1 489.7L868.5 491.4L870.8 493.1L870.3 494.8L870.2 496.6L869.4 498.3L869.8 500.0L869.4 501.7L870.0 503.4L868.2 505.2L869.5 506.9L869.2 508.6L870.6 510.3L868.3 512.1L870.6 513.8L870.8 515.5L870.9 517.2L868.8 519.0L868.9 520.7L868.5 522.4L870.4 524.1L870.1 525.9L868.7 527.6L870.1 529.3L868.7 531.0L870.4 532.8L868.2 534.5L870.6 536.2L869.3 537.9L870.7 539.7L869.6 541.4L868.4 543.1L870.3 544.8L870.2 546.6L868.1 548.3L868.4 550.0L868.4 551.7L869.2 553.4L869.6 555.2L869.8 556.9L870.8 558.6L869.4 560.3L869.6 562.1L870.1 563.8L870.9 565.5L870.8 567.2L869.6 569.0L869.1 570.7L868.3 572.4L868.5 574.1L868.6 575.9L869.4 577.6L869.8 579.3L868.3 581.0L869.6 582.8L870.6 584.5L870.7 586.2L870.6 587.9L870.5 589.7L869.4 591.4L869.5 593.1L868.2 594.8L870.9 596.6L869.3 598.3L868.0 600.0L870.6 601.7L870.2 603.4L870.0 605.2L868.7 606.9L868.2 608.6L869.8 610.3L868.7 612.1L869.7 613.8L870.2 615.5L869.2 617.2L870.6 619.0L870.7 620.7L871.1 622.4L868.2 624.1L869.6 625.9L870.4 627.6L869.2 629.3L870.3 631.0L868.6 632.8L869.7 634.5L871.2 636.2L869.4 637.9L868.4 639.7L869.9 641.4L868.7 643.1L869.8 644.8L870.9 646.6L871.1 648.3L870.4 650.0L870.3 651.7L869.5 653.4L870.2 655.2L869.9 656.9L869.5 658.6L869.3 660.3L869.7 662.1L868.4 663.8L870.5 665.5L870.2 667.2L869.4 669.0L870.5 670.7L870.6 672.4L869.8 674.1L870.0 675.9L868.7 677.6L868.5 679.3L870.9 681.0L869.3 682.8L870.6 684.5L869.6 686.2L870.7 687.9L871.1 689.7L868.7 691.4L868.9 693.1L869.8 694.8L868.8 696.6L868.5 698.3L869.7 700.0L868.8 701.8L871.3 703.5L871.0 705.2L868.6 707.0L870.4 708.8L870.7 710.5L868.8 712.2L868.7 714.0L869.2 715.8L870.9 717.5L869.0 719.2L869.1 721.0L870.8 722.8L870.0 724.5L870.2 726.2L869.0 728.0L869.0 729.8L869.8 731.5L870.2 733.2L869.9 735.0L871.2 736.8L870.9 738.5L870.9 740.2L870.7 742.0L869.7 743.8L870.5 745.5L869.4 747.2L871.5 749.0L869.9 750.8L870.6 752.5L871.0 754.2L871.0 756.0L868.8 757.8L868.2 759.6L868.6 761.4L868.9 763.2L867.9 765.0L867.1 766.8L867.8 768.5L865.1 770.2L864.6 772.0L863.9 774.5L861.3 777.0L862.7 779.0L861.0 781.0" stroke="#d02e2e" stroke-width="1.15" fill="none" stroke-linejoin="round"/>
<circle cx="873.3" cy="46.3" r="3" fill="#0a0000" stroke="#d02e2e" stroke-width="1.4"/>
<path d="M861.1 10.2L864.9 13.4L868.1 16.0L873.9 16.6L875.8 20.4L879.6 23.6L886.6 25.5L889.8 27.4L890.4 31.3L883.4 33.4L888.5 36.4L889.8 40.8L882.8 44.0L887.3 46.6L882.8 47.8L890.4 51.0L880.9 56.1L886.0 62.5L886.6 65.0L881.5 70.2L886.0 73.3L883.4 76.5L887.2 81.6L893.0 84.8L889.8 89.3L893.6 91.8L891.1 96.9L893.6 99.9L894.8 101.7L892.5 103.5L893.1 105.3L892.9 107.1L893.9 108.8L892.2 110.6L892.8 112.4L893.7 114.2L891.8 116.0L891.0 117.8L893.5 119.5L892.4 121.2L894.1 123.0L895.7 124.8L895.8 126.5L893.6 128.2L893.8 130.0L898.0 131.7L897.3 133.5L898.3 135.2L900.4 137.0L900.9 138.7L902.3 140.6L901.4 142.4L903.6 144.3L904.3 146.1L904.4 148.0L905.1 149.8L903.0 151.7L903.9 153.5L904.6 155.3L903.9 157.0L905.9 158.8L905.2 160.6L908.1 162.4L906.2 164.2L906.9 166.0L907.3 167.7L909.5 169.5L909.3 171.3L908.9 173.0L910.1 174.8L910.3 176.5L911.6 178.2L909.3 179.9L911.0 181.7L910.3 183.4L910.3 185.1L913.1 186.9L912.9 188.6L911.4 190.3L913.7 192.1L912.0 193.8L912.4 195.6L913.0 197.3L915.7 199.0L916.0 200.8L915.8 202.5L914.7 204.3L917.1 206.0L917.4 207.9L916.8 209.8L920.5 211.7L919.8 213.6L923.1 215.3L921.9 217.1L926.8 218.8L926.2 220.6L930.1 222.3L932.6 224.5L934.4 226.6L939.3 228.8L944.0 231.0" stroke="#34d434" stroke-width="1.1" fill="none" stroke-linejoin="round"/>
<path d="M944.0 252.5L939.7 252.7L914.7 254.2L911.9 259.2L915.8 262.0L896.3 266.4L889.7 267.2L895.2 271.1L887.6 274.4L887.1 279.8L882.1 283.7L889.7 290.7L884.1 298.3L886.3 300.0L885.2 301.6L882.2 303.3L883.6 305.0L886.5 306.6L885.1 308.3L883.8 310.0L882.8 311.6L886.0 313.3L882.2 315.0L883.4 316.7L883.6 318.3L884.2 320.0L885.4 321.7L884.8 323.3L884.0 325.0L885.0 326.7L884.7 328.3L882.6 330.0L881.6 331.6L885.5 333.3L884.6 334.9L882.1 336.5L883.7 338.1L883.1 339.8L882.6 341.4L881.7 343.0L884.6 344.7L882.4 346.3L881.4 347.9L883.0 349.5L882.7 351.2L885.3 352.8L882.1 354.4L881.3 356.0L885.7 357.7L883.4 359.3L882.4 360.9L885.1 362.6L883.4 364.2L882.9 365.8L883.5 367.4L884.1 369.1L881.1 370.7L885.7 372.3L883.3 374.0L884.0 375.6L885.0 377.2L884.2 378.8L881.2 380.5L884.4 382.1L882.8 383.7L883.6 385.3L884.8 387.0L881.5 388.6L881.8 390.2L882.1 391.9L885.9 393.5L883.9 395.1L883.8 396.7L884.8 398.4L885.6 400.0L885.8 401.6L882.2 403.2L885.9 404.8L885.9 406.5L883.2 408.1L881.1 409.7L884.5 411.3L882.1 412.9L881.3 414.5L883.5 416.1L885.4 417.7L881.5 419.4L883.7 421.0L885.2 422.6L883.7 424.2L885.6 425.8L885.5 427.4L881.6 429.0L882.2 430.6L884.6 432.3L881.9 433.9L883.5 435.5L884.1 437.1L881.5 438.7L882.9 440.3L885.3 441.9L885.9 443.5L883.5 445.2L881.5 446.8L881.8 448.4L881.4 450.0L884.3 451.6L884.6 453.2L883.1 454.8L884.1 456.5L885.9 458.1L882.4 459.7L883.7 461.3L883.7 462.9L882.2 464.5L882.0 466.1L884.9 467.7L883.5 469.4L885.6 471.0L882.7 472.6L882.9 474.2L884.5 475.8L884.9 477.4L884.0 479.0L885.8 480.6L884.4 482.3L883.3 483.9L882.8 485.5L885.6 487.1L883.6 488.7L884.4 490.3L881.1 491.9L883.7 493.5L883.5 495.2L885.3 496.8L882.3 498.4L884.0 500.0L884.3 501.6L884.8 503.2L884.4 504.8L883.5 506.5L882.1 508.1L882.1 509.7L883.9 511.3L881.1 512.9L884.1 514.5L885.0 516.1L882.1 517.7L884.2 519.4L882.1 521.0L885.7 522.6L884.4 524.2L885.6 525.8L882.4 527.4L881.3 529.0L884.4 530.6L885.3 532.3L885.2 533.9L885.6 535.5L881.9 537.1L883.0 538.7L885.9 540.3L883.9 541.9L885.7 543.5L882.9 545.2L881.9 546.8L884.4 548.4L884.7 550.0L884.8 551.6L884.8 553.2L885.9 554.8L885.6 556.5L884.4 558.1L882.7 559.7L883.4 561.3L881.5 562.9L883.1 564.5L882.8 566.1L882.8 567.7L885.0 569.4L881.4 571.0L883.1 572.6L882.8 574.2L882.7 575.8L884.4 577.4L883.9 579.0L885.3 580.6L884.8 582.3L884.8 583.9L885.4 585.5L885.6 587.1L883.9 588.7L882.3 590.3L882.2 591.9L884.1 593.5L884.2 595.2L882.1 596.8L885.9 598.4L883.9 600.0L881.2 601.6L882.4 603.2L884.2 604.8L882.4 606.5L884.0 608.1L883.8 609.7L885.7 611.3L881.2 612.9L881.2 614.5L882.4 616.1L885.0 617.7L882.9 619.4L883.1 621.0L885.2 622.6L885.8 624.2L885.0 625.8L885.3 627.4L883.7 629.0L883.2 630.6L883.0 632.3L881.5 633.9L883.1 635.5L881.2 637.1L883.4 638.7L883.1 640.3L881.2 641.9L883.8 643.5L882.9 645.2L884.0 646.8L885.3 648.4L885.4 650.0L882.9 651.6L883.9 653.2L885.7 654.8L885.8 656.5L882.4 658.1L882.4 659.7L881.9 661.3L885.7 662.9L883.6 664.5L882.2 666.1L885.3 667.7L885.3 669.4L882.5 671.0L883.9 672.6L882.9 674.2L885.1 675.8L885.6 677.4L885.5 679.0L882.3 680.6L881.3 682.3L882.1 683.9L883.7 685.5L884.7 687.1L883.6 688.7L885.3 690.3L882.8 691.9L883.6 693.5L883.4 695.2L885.1 696.8L883.9 698.4L883.3 700.0L882.8 701.7L885.6 703.4L883.0 705.1L881.0 706.9L885.1 708.6L885.4 710.3L883.5 712.0L889.2 714.0L887.0 715.7L883.1 717.3L880.3 719.0L881.2 720.8L881.5 722.7L882.5 724.5L883.4 726.3L883.7 728.2L883.9 730.0L884.7 731.7L883.8 733.3L883.5 735.0L884.9 736.7L884.3 738.3L883.5 740.0L884.8 741.7L883.6 743.3L885.1 745.0L884.1 746.7L884.2 748.4L884.4 750.1L883.9 751.9L884.3 753.6L882.9 755.3L882.4 757.0L888.5 759.0L886.9 761.0L884.2 763.0L881.3 765.0L884.4 767.0L886.0 769.0L877.9 772.0L879.5 774.0L879.0 776.0L870.9 778.0L868.3 780.0L866.0 782.0" stroke="#34d434" stroke-width="1.1" fill="none" stroke-linejoin="round"/>
<path d="M936.5 782L940 779" stroke="#34d434" stroke-width="1.1" fill="none"/>
</g>
</svg></body></html>
